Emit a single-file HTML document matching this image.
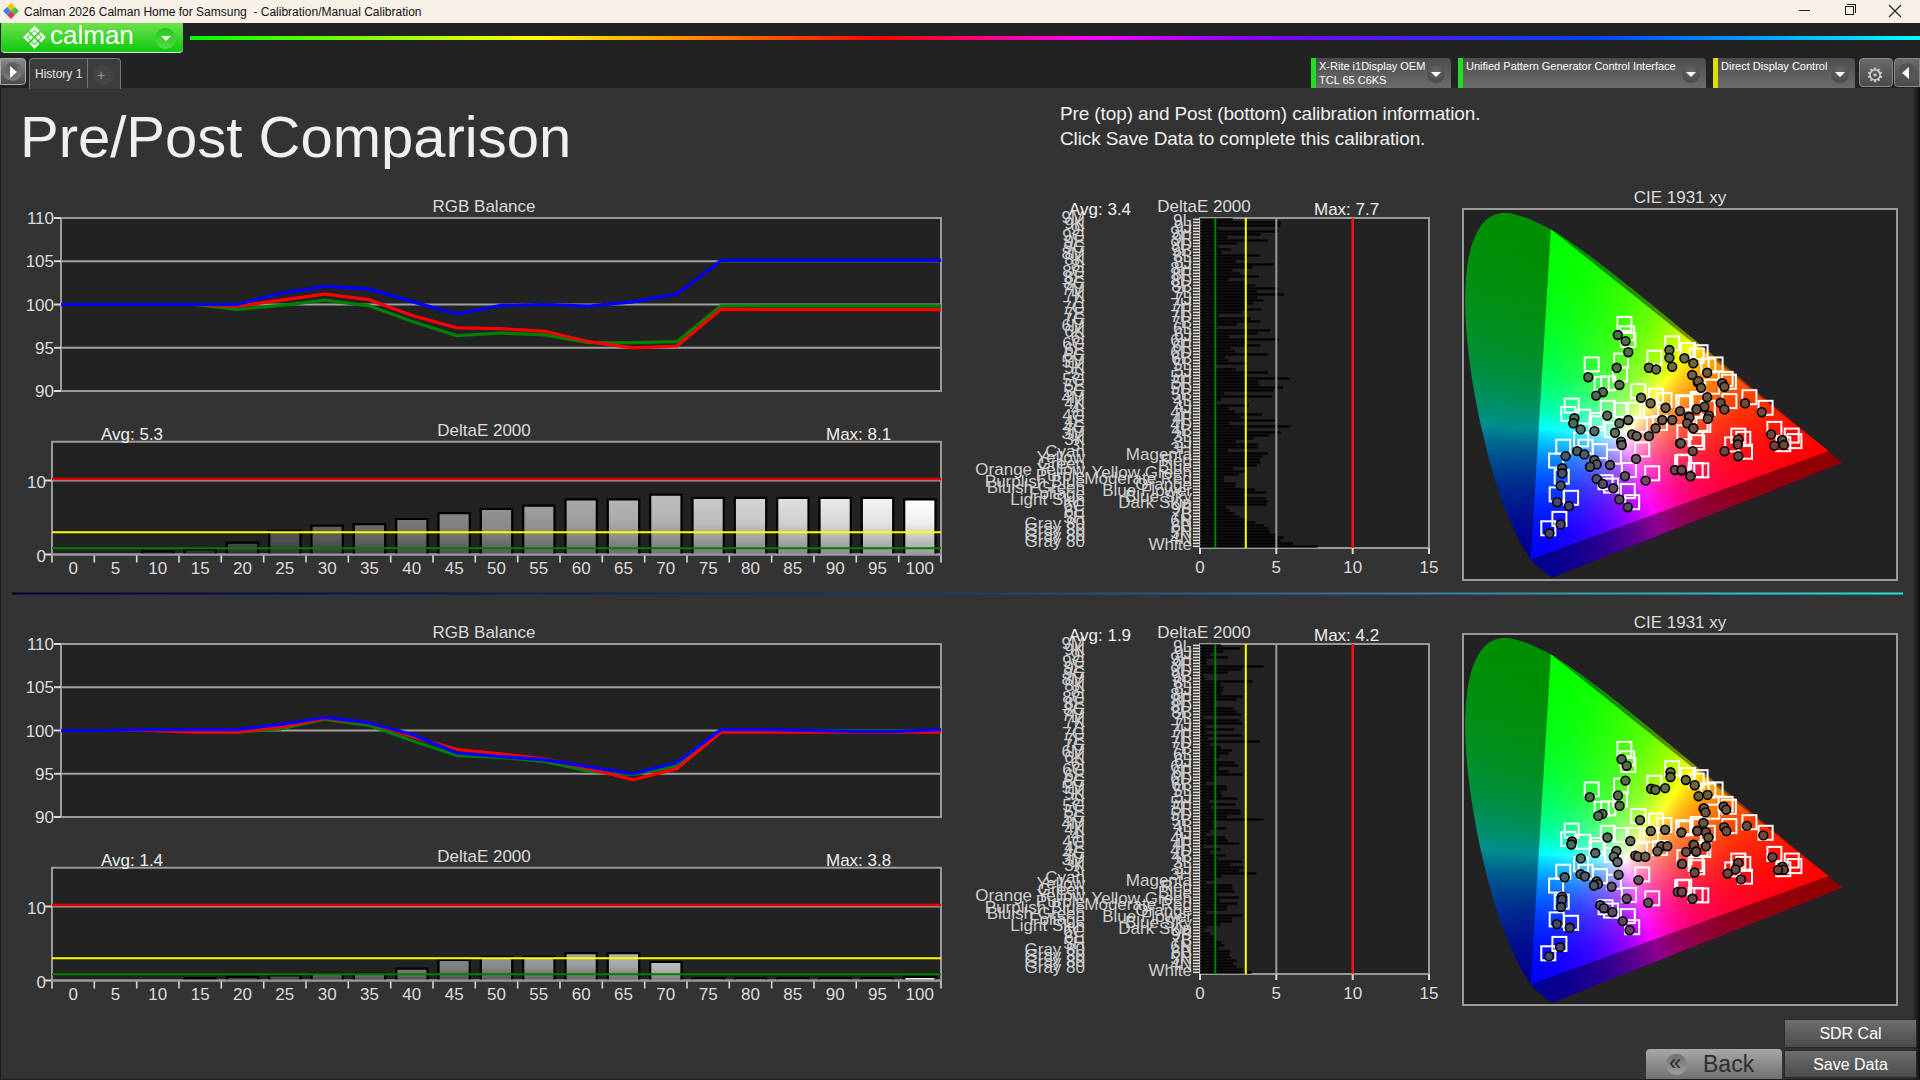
<!DOCTYPE html>
<html><head><meta charset="utf-8"><style>
*{margin:0;padding:0;box-sizing:border-box}
html,body{width:1920px;height:1080px;overflow:hidden;background:#333;font-family:"Liberation Sans", sans-serif;}
.abs{position:absolute}
svg text{font-family:"Liberation Sans", sans-serif;}
.ax{font-size:17px;fill:#dcdcdc}
.tt{font-size:17px;fill:#dcdcdc}
.tw{font-size:17px;fill:#f0f0f0}
.ml{font-size:17px;fill:#cfcfcf}
.cief i{position:absolute;left:0;width:380px;height:2px;display:block}
.o2{top:2px;background:linear-gradient(90deg,#008f01 32px,#008f00 54px)}
.o4{top:4px;background:linear-gradient(90deg,#008f02 27px,#008f00 62px)}
.o6{top:6px;background:linear-gradient(90deg,#008f02 23px,#008f00 68px)}
.o8{top:8px;background:linear-gradient(90deg,#008f03 21px,#008f00 73px)}
.o10{top:10px;background:linear-gradient(90deg,#008f03 19px,#008f00 77px)}
.o12{top:12px;background:linear-gradient(90deg,#008f04 17px,#008f00 81px)}
.o14{top:14px;background:linear-gradient(90deg,#008f04 15px,#008f00 86px)}
.o16{top:16px;background:linear-gradient(90deg,#008f04 14px,#008f00 90px)}
.o18{top:18px;background:linear-gradient(90deg,#008f05 13px,#008f00 93px)}
.o20{top:20px;background:linear-gradient(90deg,#008f05 12px,#008f00 96px)}
.o22{top:22px;background:linear-gradient(90deg,#008f06 11px,#018f00 100px)}
.o24{top:24px;background:linear-gradient(90deg,#008f06 10px,#018f00 103px)}
.o26{top:26px;background:linear-gradient(90deg,#008f06 9px,#028f00 106px)}
.o28{top:28px;background:linear-gradient(90deg,#008f07 8px,#038f00 109px)}
.o30{top:30px;background:linear-gradient(90deg,#008f07 7px,#038f00 112px)}
.o32{top:32px;background:linear-gradient(90deg,#008f08 6px,#048f00 115px)}
.o34{top:34px;background:linear-gradient(90deg,#008f08 6px,#058f00 117px)}
.o36{top:36px;background:linear-gradient(90deg,#008f09 5px,#058f00 120px)}
.o38{top:38px;background:linear-gradient(90deg,#008f09 5px,#008f01 89.5px,#068f00 123px)}
.o40{top:40px;background:linear-gradient(90deg,#008f09 4px,#008f01 89.5px,#078f00 126px)}
.o42{top:42px;background:linear-gradient(90deg,#008f0a 4px,#008f01 89.5px,#088f00 129px)}
.o44{top:44px;background:linear-gradient(90deg,#008f0a 3px,#008f02 89.5px,#098f00 131px)}
.o46{top:46px;background:linear-gradient(90deg,#008f0b 3px,#008f02 90.5px,#0a8f00 134px)}
.o48{top:48px;background:linear-gradient(90deg,#008f0b 2px,#008f02 90.5px,#0c8f00 137px)}
.o50{top:50px;background:linear-gradient(90deg,#008f0c 2px,#008f02 90.5px,#0c8f00 139px)}
.o52{top:52px;background:linear-gradient(90deg,#008f0c 2px,#008f02 91.5px,#0e8f00 142px)}
.o54{top:54px;background:linear-gradient(90deg,#008f0d 1px,#008f03 91.5px,#0f8f00 145px)}
.o56{top:56px;background:linear-gradient(90deg,#008f0d 1px,#008f03 92.5px,#108f00 147px)}
.o58{top:58px;background:linear-gradient(90deg,#008f0e 1px,#008f03 92.5px,#128f00 150px)}
.o60{top:60px;background:linear-gradient(90deg,#008f0e 1px,#018f03 93.5px,#138f00 152px)}
.o62{top:62px;background:linear-gradient(90deg,#008f0f 0px,#018f04 93.5px,#158f00 155px)}
.o64{top:64px;background:linear-gradient(90deg,#008f10 0px,#018f04 94.5px,#168f00 157px)}
.o66{top:66px;background:linear-gradient(90deg,#008f10 0px,#018f04 94.5px,#188f00 160px)}
.o68{top:68px;background:linear-gradient(90deg,#008f11 0px,#018f04 95.5px,#1a8f00 163px)}
.o70{top:70px;background:linear-gradient(90deg,#008f11 0px,#018f05 96.5px,#1c8f00 165px)}
.o72{top:72px;background:linear-gradient(90deg,#008f12 0px,#018f05 97.5px,#1e8f00 168px)}
.o74{top:74px;background:linear-gradient(90deg,#008f13 0px,#018f05 97.5px,#208f00 170px)}
.o76{top:76px;background:linear-gradient(90deg,#008f13 0px,#028f06 98.5px,#0d8f02 134.5px,#228f00 173px)}
.o78{top:78px;background:linear-gradient(90deg,#008f14 0px,#028f06 99.5px,#0e8f02 136.5px,#248f00 175px)}
.o80{top:80px;background:linear-gradient(90deg,#008f15 0px,#028f06 100.5px,#108f02 138.5px,#278f00 178px)}
.o82{top:82px;background:linear-gradient(90deg,#008f15 0px,#028f07 100.5px,#108f02 139.5px,#298f00 180px)}
.o84{top:84px;background:linear-gradient(90deg,#008f16 0px,#038f07 101.5px,#128f02 141.5px,#2b8f00 182px)}
.o86{top:86px;background:linear-gradient(90deg,#008f17 0px,#038f07 102.5px,#138f02 143.5px,#2e8f00 185px)}
.o88{top:88px;background:linear-gradient(90deg,#008f17 0px,#038f08 103.5px,#148f02 144.5px,#318f00 187px)}
.o90{top:90px;background:linear-gradient(90deg,#008f18 0px,#048f08 104.5px,#158f02 146.5px,#348f00 190px)}
.o92{top:92px;background:linear-gradient(90deg,#008f19 0px,#048f08 105.5px,#178f03 148.5px,#378f00 192px)}
.o94{top:94px;background:linear-gradient(90deg,#008f1a 0px,#048f09 106.5px,#188f03 150.5px,#3a8f00 195px)}
.o96{top:96px;background:linear-gradient(90deg,#008f1b 0px,#058f09 107.5px,#1a8f03 152.5px,#3d8f00 197px)}
.o98{top:98px;background:linear-gradient(90deg,#008f1b 0px,#058f09 108.5px,#1c8f03 154.5px,#418f00 200px)}
.o100{top:100px;background:linear-gradient(90deg,#008f1c 0px,#008f0e 84.5px,#058f0a 109.5px,#1d8f03 155.5px,#448f00 202px)}
.o102{top:102px;background:linear-gradient(90deg,#008f1d 0px,#008f0f 84.5px,#068f0a 111.5px,#1f8f03 158.5px,#498f00 205px)}
.o104{top:104px;background:linear-gradient(90deg,#008f1e 0px,#008f0f 84.5px,#078f0b 112.5px,#218f03 160.5px,#4c8f00 207px)}
.o106{top:106px;background:linear-gradient(90deg,#008f1f 0px,#008f10 84.5px,#078f0b 113.5px,#238f03 161.5px,#508f00 209px)}
.o108{top:108px;background:linear-gradient(90deg,#008f20 0px,#008f11 84.5px,#088f0c 114.5px,#268f04 164.5px,#558f00 212px)}
.o110{top:110px;background:linear-gradient(90deg,#008f21 0px,#008f12 84.5px,#088f0c 115.5px,#278f04 165.5px,#598f00 214px)}
.o112{top:112px;background:linear-gradient(90deg,#008f22 0px,#008f12 84.5px,#098f0c 117.5px,#2a8f04 168.5px,#5f8f00 217px)}
.o114{top:114px;background:linear-gradient(90deg,#008f23 0px,#008f13 84.5px,#0a8f0d 118.5px,#2c8f04 169.5px,#638f00 219px)}
.o116{top:116px;background:linear-gradient(90deg,#008f24 0px,#008f14 84.5px,#0b8f0d 120.5px,#2f8f04 172.5px,#698f00 222px)}
.o118{top:118px;background:linear-gradient(90deg,#008f25 0px,#008f15 84.5px,#0c8f0e 121.5px,#328f04 174.5px,#6e8f00 224px)}
.o120{top:120px;background:linear-gradient(90deg,#008f26 0px,#008f16 85.5px,#0d8f0e 122.5px,#348f05 175.5px,#738f00 226px)}
.o122{top:122px;background:linear-gradient(90deg,#008f27 0px,#008f17 85.5px,#0e8f0f 124.5px,#388f05 178.5px,#7b8f00 229px)}
.o124{top:124px;background:linear-gradient(90deg,#008f28 1px,#008f18 85.5px,#0f8f0f 125.5px,#3b8f05 180.5px,#808f00 231px)}
.o126{top:126px;background:linear-gradient(90deg,#008f2a 1px,#008f19 85.5px,#108f10 127.5px,#3f8f05 182.5px,#888f00 234px)}
.o128{top:128px;background:linear-gradient(90deg,#008f2b 1px,#008f1a 85.5px,#128f10 129.5px,#428f05 184.5px,#638f01 209.5px,#8f8f00 236px)}
.o130{top:130px;background:linear-gradient(90deg,#008f2c 1px,#008f1b 85.5px,#118f12 127.5px,#3f8f07 180.5px,#628f02 207.5px,#8e8f00 233.5px,#8f8900 238px)}
.o132{top:132px;background:linear-gradient(90deg,#008f2d 1px,#008f1c 84.5px,#108f13 125.5px,#258f0d 154.5px,#418f07 181.5px,#648f02 207.5px,#8f8f00 232.5px,#8f8100 241px)}
.o134{top:134px;background:linear-gradient(90deg,#008f2f 1px,#008f1d 84.5px,#108f14 124.5px,#258f0e 153.5px,#418f08 180.5px,#648f03 206.5px,#8e8f00 230.5px,#8f7b00 243px)}
.o136{top:136px;background:linear-gradient(90deg,#008f30 2px,#008f1e 84.5px,#0f8f16 122.5px,#248f0f 151.5px,#408f09 178.5px,#638f04 204.5px,#8f8f00 229.5px,#8f7400 246px)}
.o138{top:138px;background:linear-gradient(90deg,#008f31 2px,#008f20 83.5px,#0e8f17 120.5px,#238f11 149.5px,#3f8f0a 176.5px,#628f05 202.5px,#8e8f01 227.5px,#8f6e00 248px)}
.o140{top:140px;background:linear-gradient(90deg,#008f33 2px,#008f21 83.5px,#0e8f19 119.5px,#238f12 148.5px,#3f8f0b 175.5px,#628f06 201.5px,#8f8f01 226.5px,#8f6800 251px)}
.o142{top:142px;background:linear-gradient(90deg,#008f34 2px,#008f22 83.5px,#0d8f1a 117.5px,#228f13 146.5px,#3d8f0d 173.5px,#618f07 199.5px,#8e8f02 224.5px,#8f6300 253px)}
.o144{top:144px;background:linear-gradient(90deg,#008f35 3px,#008f24 83.5px,#0c8f1c 116.5px,#218f15 145.5px,#3d8f0e 172.5px,#628f08 198.5px,#8f8f03 223.5px,#8f5e00 255px)}
.o146{top:146px;background:linear-gradient(90deg,#008f37 3px,#008f25 82.5px,#0c8f1d 115.5px,#218f16 144.5px,#3e8f0f 171.5px,#628f09 197.5px,#8e8f04 221.5px,#8f6f00 240.5px,#8f5900 258px)}
.o148{top:148px;background:linear-gradient(90deg,#008f38 3px,#008f27 82.5px,#0b8f1f 113.5px,#208f18 142.5px,#3e8f11 170.5px,#638f0a 196.5px,#8f8f04 220.5px,#8f6e01 239.5px,#8f5500 260px)}
.o150{top:150px;background:linear-gradient(90deg,#008f3a 3px,#008f28 83.5px,#108f1f 121.5px,#258f18 147.5px,#418f11 172.5px,#658f0b 196.5px,#8e8f06 218.5px,#8f6a01 240.5px,#8f5000 263px)}
.o152{top:152px;background:linear-gradient(90deg,#008f3c 4px,#008f2a 83.5px,#118f20 121.5px,#268f19 147.5px,#438f12 172.5px,#658f0c 195.5px,#8f8f07 217.5px,#8f6901 239.5px,#8f4c00 265px)}
.o154{top:154px;background:linear-gradient(90deg,#008f3d 4px,#008f2b 83.5px,#108f22 120.5px,#268f1b 146.5px,#418f14 170.5px,#648f0e 193.5px,#8e8f08 215.5px,#8f6502 240.5px,#8f4800 267px)}
.o156{top:156px;background:linear-gradient(90deg,#008f3f 4px,#008f2d 83.5px,#118f23 120.5px,#278f1c 146.5px,#438f15 170.5px,#668f0f 193.5px,#8f8f09 214.5px,#8f6402 239.5px,#8f4400 270px)}
.o158{top:158px;background:linear-gradient(90deg,#008f41 4px,#008f2f 82.5px,#108f25 119.5px,#258f1e 144.5px,#428f17 168.5px,#658f11 191.5px,#8e8f0b 212.5px,#8f6002 240.5px,#8f4000 272px)}
.o160{top:160px;background:linear-gradient(90deg,#008f43 5px,#008f31 82.5px,#118f27 119.5px,#428f19 167.5px,#658f12 190.5px,#8f8f0c 211.5px,#8f5f03 239.5px,#8f3c00 275px)}
.o162{top:162px;background:linear-gradient(90deg,#008f45 5px,#008f32 82.5px,#108f29 118.5px,#258f22 142.5px,#428f1b 166.5px,#648f14 188.5px,#8e8f0e 209.5px,#8f5d03 239.5px,#8f3900 277px)}
.o164{top:164px;background:linear-gradient(90deg,#008f47 5px,#008f34 82.5px,#108f2b 117.5px,#258f24 141.5px,#428f1d 165.5px,#658f16 187.5px,#8f8f0f 208.5px,#8f5a04 239.5px,#8f3600 279px)}
.o166{top:166px;background:linear-gradient(90deg,#008f49 5px,#008f36 82.5px,#108f2d 116.5px,#258f26 140.5px,#408f1f 163.5px,#638f18 185.5px,#8e8f11 206.5px,#8f5804 239.5px,#8f3300 282px)}
.o168{top:168px;background:linear-gradient(90deg,#008f4a 6px,#008f38 82.5px,#108f2f 116.5px,#258f28 140.5px,#428f21 163.5px,#648f1a 184.5px,#8f8f13 205.5px,#8f6f0b 221.5px,#8f5605 239.5px,#8f3000 284px)}
.o170{top:170px;background:linear-gradient(90deg,#008f4d 6px,#008f3b 81.5px,#108f31 115.5px,#248f2a 138.5px,#418f23 161.5px,#648f1c 183.5px,#8e8f15 203.5px,#8f6d0b 221.5px,#8f5405 239.5px,#8f2d00 287px)}
.o172{top:172px;background:linear-gradient(90deg,#008f4f 6px,#008f3d 81.5px,#108f33 115.5px,#258f2c 138.5px,#428f25 161.5px,#658f1e 182.5px,#8f8f17 202.5px,#8f6d0d 219.5px,#8f5106 239.5px,#8f2a00 289px)}
.o174{top:174px;background:linear-gradient(90deg,#008f51 7px,#008f3f 81.5px,#108f36 114.5px,#258f2f 137.5px,#418f28 159.5px,#648f20 180.5px,#8e8f19 200.5px,#8f6c0e 218.5px,#8f5007 238.5px,#8f3a02 262.5px,#8f2800 291px)}
.o176{top:176px;background:linear-gradient(90deg,#008f53 7px,#008f41 81.5px,#108f38 113.5px,#258f31 136.5px,#418f2a 158.5px,#648f23 179.5px,#8f8f1c 199.5px,#8f6b10 217.5px,#8f4e07 238.5px,#8f3702 264.5px,#8f2500 294px)}
.o178{top:178px;background:linear-gradient(90deg,#008f56 7px,#008f44 81.5px,#0f8f3b 112.5px,#248f34 135.5px,#418f2d 157.5px,#658f25 178.5px,#8e8f1e 197.5px,#8f6a11 216.5px,#8f4c08 238.5px,#8f3502 264.5px,#8f2300 296px)}
.o180{top:180px;background:linear-gradient(90deg,#008f58 8px,#008f46 80.5px,#108f3d 112.5px,#248f37 134.5px,#418f2f 156.5px,#638f28 176.5px,#8f8f21 196.5px,#8f6813 215.5px,#8f4a08 238.5px,#8f3202 266.5px,#8f2100 299px)}
.o182{top:182px;background:linear-gradient(90deg,#008f5b 8px,#008f49 80.5px,#0f8f40 111.5px,#248f39 133.5px,#418f32 155.5px,#648f2b 175.5px,#8e8f24 194.5px,#8f6714 214.5px,#8f4909 237.5px,#8f3002 266.5px,#8f1f00 301px)}
.o184{top:184px;background:linear-gradient(90deg,#008f5d 8px,#008f4c 80.5px,#108f43 111.5px,#258f3c 133.5px,#418f35 154.5px,#648f2e 174.5px,#8f8e26 193.5px,#8f6616 213.5px,#8f470a 237.5px,#8f2e03 267.5px,#8f1d00 303px)}
.o186{top:186px;background:linear-gradient(90deg,#008f60 9px,#008f4f 80.5px,#0f8f46 110.5px,#248f3f 132.5px,#418f38 153.5px,#658f31 173.5px,#8e8f2a 191.5px,#8f6517 212.5px,#8f450b 237.5px,#8f2c03 268.5px,#8f1a00 306px)}
.o188{top:188px;background:linear-gradient(90deg,#008f63 9px,#008f51 80.5px,#108f49 110.5px,#248f42 131.5px,#418f3b 152.5px,#638f34 171.5px,#8f8e2c 190.5px,#8f6319 211.5px,#8f430c 236.5px,#8f2b03 268.5px,#8f1900 308px)}
.o190{top:190px;background:linear-gradient(90deg,#008f66 9px,#008f54 80.5px,#0f8f4c 109.5px,#248f45 130.5px,#418f3e 151.5px,#648f37 170.5px,#8e8f30 188.5px,#8f621b 210.5px,#8f410c 236.5px,#8f2803 269.5px,#8f1700 311px)}
.o192{top:192px;background:linear-gradient(90deg,#008f68 10px,#008f58 79.5px,#0f8f50 108.5px,#248f49 129.5px,#408f42 149.5px,#628f3b 168.5px,#8d8f34 186.5px,#8f5f1c 210.5px,#8f3f0d 236.5px,#8f2604 270.5px,#8f1500 313px)}
.o194{top:194px;background:linear-gradient(90deg,#008f6c 10px,#008f5b 79.5px,#0f8f53 108.5px,#258f4c 129.5px,#418f45 149.5px,#658f3e 168.5px,#8e8f37 185.5px,#8f601e 208.5px,#8f3e0e 235.5px,#8f2504 270.5px,#8f1400 315px)}
.o196{top:196px;background:linear-gradient(90deg,#008f6f 11px,#008f5e 79.5px,#0f8f56 107.5px,#238f50 127.5px,#408f49 147.5px,#648f42 166.5px,#8d8f3b 183.5px,#8f5e20 207.5px,#8f3c0f 235.5px,#8f2304 271.5px,#8f1200 318px)}
.o198{top:198px;background:linear-gradient(90deg,#008f72 11px,#008f62 79.5px,#0f8f5a 107.5px,#248f54 127.5px,#418f4d 147.5px,#648f46 165.5px,#8e8f3f 182.5px,#8f5f23 205.5px,#8f3b10 234.5px,#8f2204 271.5px,#8f1100 320px)}
.o200{top:200px;background:linear-gradient(90deg,#008f75 11px,#008f66 79.5px,#0f8f5e 106.5px,#248f58 126.5px,#408f51 145.5px,#638f4b 163.5px,#8d8f44 180.5px,#8f5c25 205.5px,#8f3911 234.5px,#8f2005 272.5px,#8f0f00 323px)}
.o202{top:202px;background:linear-gradient(90deg,#008f79 12px,#008f69 79.5px,#0e8f62 105.5px,#238f5c 125.5px,#408f56 144.5px,#638f4f 162.5px,#8e8f48 179.5px,#8f5c28 203.5px,#8f3812 233.5px,#8f1e05 273.5px,#8f0e00 325px)}
.o204{top:204px;background:linear-gradient(90deg,#008f7d 12px,#008f6e 78.5px,#0e8f66 104.5px,#228f61 123.5px,#3e8f5a 142.5px,#628f54 160.5px,#8d8f4d 177.5px,#8f5b2a 202.5px,#8f3613 233.5px,#8f1d05 274.5px,#8f0c00 328px)}
.o206{top:206px;background:linear-gradient(90deg,#008f80 13px,#008f72 78.5px,#0e8f6b 104.5px,#238f65 123.5px,#3e8f5f 141.5px,#608f59 158.5px,#8f8d50 177.5px,#8f592c 201.5px,#8f3514 232.5px,#8f1b06 274.5px,#8f0b00 330px)}
.o208{top:208px;background:linear-gradient(90deg,#008f84 13px,#008f76 78.5px,#0f8f6f 104.5px,#248f69 123.5px,#408f64 141.5px,#638f5d 158.5px,#8f8e56 175.5px,#8f5a30 199.5px,#8f3416 231.5px,#8f1a06 274.5px,#8f0a00 332px)}
.o210{top:210px;background:linear-gradient(90deg,#008f88 13px,#008f7a 78.5px,#0e8f74 103.5px,#228f6f 121.5px,#3e8f69 139.5px,#5f8f63 155.5px,#8f8d5b 174.5px,#8f6f43 186.5px,#8f5731 199.5px,#8f3217 231.5px,#8f1906 275.5px,#8f0900 335px)}
.o212{top:212px;background:linear-gradient(90deg,#008f8c 14px,#008f7f 78.5px,#0f8f79 103.5px,#238f74 121.5px,#408f6e 139.5px,#628f68 155.5px,#8f8e62 172.5px,#8f6f49 184.5px,#8f5735 197.5px,#8f3118 230.5px,#8f1707 275.5px,#8f0800 337px)}
.o214{top:214px;background:linear-gradient(90deg,#008d8f 14px,#008f84 78.5px,#0e8f7e 102.5px,#238f79 120.5px,#3e8f74 137.5px,#608f6f 153.5px,#8f8d66 171.5px,#8f6e4c 183.5px,#8f5538 196.5px,#8f2f19 230.5px,#8f1607 276.5px,#8f0700 340px)}
.o216{top:216px;background:linear-gradient(90deg,#00898f 15px,#008f89 78.5px,#0e8f84 101.5px,#238f7f 119.5px,#408f79 137.5px,#638f74 153.5px,#8f8e6e 169.5px,#8f6e52 181.5px,#8f543b 195.5px,#8f2e1a 229.5px,#8f1507 276.5px,#8f0600 342px)}
.o218{top:218px;background:linear-gradient(90deg,#00848f 15px,#008f8f 77.5px,#0e8f89 101.5px,#228f85 118.5px,#3e8f80 135.5px,#5f8f7b 150.5px,#8f8c73 168.5px,#8f6d56 180.5px,#8f543f 193.5px,#8f2d1c 228.5px,#8f1408 276.5px,#8f0500 344px)}
.o220{top:220px;background:linear-gradient(90deg,#00808f 16px,#008a8f 77.5px,#0d8e8f 99.5px,#228f8b 117.5px,#3e8f86 134.5px,#628f81 150.5px,#8f8e7b 166.5px,#8f6d5c 178.5px,#8f5342 192.5px,#8f2c1e 227.5px,#8f1208 278.5px,#8f0500 347px)}
.o222{top:222px;background:linear-gradient(90deg,#007c8f 16px,#00858f 77.5px,#0e898f 100.5px,#218c8f 116.5px,#3e8f8d 133.5px,#608f89 148.5px,#8f8c81 165.5px,#8f6c60 177.5px,#8f5145 191.5px,#8f2a1f 227.5px,#8f1108 278.5px,#8f0400 349px)}
.o224{top:224px;background:linear-gradient(90deg,#00788f 17px,#00808f 77.5px,#0f838f 101.5px,#24878f 118.5px,#3e8a8f 133.5px,#5d8d8f 146.5px,#8f8e8a 163.5px,#8f6d67 175.5px,#8f514a 189.5px,#8f3b32 206.5px,#8f2920 226.5px,#8f1008 279.5px,#8f0300 352px)}
.o226{top:226px;background:linear-gradient(90deg,#00758f 17px,#007b8f 77.5px,#107e8f 102.5px,#25818f 119.5px,#3f848f 134.5px,#61878f 148.5px,#8f898d 163.5px,#8f6969 175.5px,#8f4e4c 189.5px,#8f3834 206.5px,#8f2721 226.5px,#8f0f09 279.5px,#8f0300 354px)}
.o228{top:228px;background:linear-gradient(90deg,#00718f 17px,#00768f 77.5px,#0f798f 102.5px,#247b8f 119.5px,#3e7e8f 134.5px,#5f808f 148.5px,#8f818c 164.5px,#8f6369 176.5px,#8f484a 191.5px,#8f3433 208.5px,#8f2421 228.5px,#8f0d09 281.5px,#8f0200 356px)}
.o230{top:230px;background:linear-gradient(90deg,#006d8f 18px,#00718f 77.5px,#10748f 103.5px,#25768f 120.5px,#42788f 136.5px,#637a8f 150.5px,#8f7c8e 164.5px,#8f5f6b 176.5px,#8f454c 191.5px,#8f3234 208.5px,#8f2222 228.5px,#8f0c09 282.5px,#8f0100 359px)}
.o232{top:232px;background:linear-gradient(90deg,#006a8f 18px,#006d8f 77.5px,#106f8f 103.5px,#25718f 120.5px,#41728f 136.5px,#62748f 150.5px,#8f758d 165.5px,#8f596a 177.5px,#8f414c 192.5px,#8f2e34 209.5px,#8f1f21 230.5px,#8f0a09 285.5px,#8f0100 361px)}
.o234{top:234px;background:linear-gradient(90deg,#00668f 19px,#00698f 77.5px,#106a8f 103.5px,#246b8f 120.5px,#406d8f 136.5px,#606e8f 150.5px,#8f6e8c 166.5px,#8f5267 179.5px,#8f3c4a 194.5px,#8f2b33 211.5px,#8f1c21 232.5px,#8f0909 287.5px,#8f0100 364px)}
.o236{top:236px;background:linear-gradient(90deg,#00638f 19px,#00658f 77.5px,#11668f 104.5px,#25678f 121.5px,#41678f 137.5px,#64688f 152.5px,#8f698f 166.5px,#8f4f69 179.5px,#8f394c 194.5px,#8f2835 211.5px,#8f1b22 232.5px,#8f0809 288.5px,#8f0000 366px)}
.o238{top:238px;background:linear-gradient(90deg,#00608f 20px,#00618f 77.5px,#11618f 104.5px,#26628f 122.5px,#42628f 138.5px,#65638f 153.5px,#8f638e 167.5px,#8f4a69 180.5px,#8f354c 195.5px,#8f2534 213.5px,#8f1821 234.5px,#8f0709 290.5px,#8f0000 368px)}
.o240{top:240px;background:linear-gradient(90deg,#005c8f 20px,#005d8f 77.5px,#115d8f 105.5px,#265d8f 122.5px,#415d8f 138.5px,#615d8f 152.5px,#8f5d8d 168.5px,#8f4569 181.5px,#8f324b 196.5px,#8f2234 214.5px,#8f1621 235.5px,#8f0609 292.5px,#8f0000 371px)}
.o242{top:242px;background:linear-gradient(90deg,#00598f 21px,#00598f 77.5px,#11598f 105.5px,#25598f 122.5px,#40598f 138.5px,#5f588f 152.5px,#8f578c 169.5px,#8f4068 182.5px,#8f2e4b 197.5px,#8f2034 215.5px,#8f1421 237.5px,#8f0509 294.5px,#8f0000 373px)}
.o244{top:244px;background:linear-gradient(90deg,#00568f 21px,#00558f 77.5px,#11558f 105.5px,#26548f 123.5px,#41548f 139.5px,#63538f 154.5px,#8f538e 169.5px,#8f3d6a 182.5px,#8f2b4b 198.5px,#8f1d34 216.5px,#8f1221 238.5px,#8f0409 295.5px,#8f0000 376px)}
.o246{top:246px;background:linear-gradient(90deg,#00538f 22px,#00528f 77.5px,#12518f 106.5px,#27508f 124.5px,#424f8f 140.5px,#644f8f 155.5px,#8f4d8e 170.5px,#8f396a 183.5px,#8f284b 199.5px,#8f1b34 217.5px,#8f1121 239.5px,#8f0409 297.5px,#8f0000 378px)}
.o248{top:248px;background:linear-gradient(90deg,#00508f 22px,#004e8f 77.5px,#124d8f 106.5px,#274c8f 124.5px,#424b8f 140.5px,#634a8f 155.5px,#8f488d 171.5px,#8f3569 184.5px,#8f254b 200.5px,#8f1934 218.5px,#8f0f22 240.5px,#8f0309 298.5px,#8f0000 380px)}
.o250{top:250px;background:linear-gradient(90deg,#004d8f 23px,#004b8f 77.5px,#13498f 107.5px,#28488f 125.5px,#43478f 141.5px,#66468f 157.5px,#8f448f 171.5px,#8f326b 184.5px,#8f234d 200.5px,#8f1736 218.5px,#8f0e23 240.5px,#8f030a 298.5px,#8f0000 380px)}
.o252{top:252px;background:linear-gradient(90deg,#004a8f 24px,#00488f 77.5px,#13468f 108.5px,#29448f 126.5px,#44438f 142.5px,#65418f 157.5px,#8f3f8e 172.5px,#8f2e6b 185.5px,#8f204d 201.5px,#8f1536 219.5px,#8f0d23 241.5px,#8f020a 299.5px,#8f0000 380px)}
.o254{top:254px;background:linear-gradient(90deg,#00488f 24px,#00458f 77.5px,#13428f 108.5px,#433f8f 142.5px,#633d8f 157.5px,#8f3b8d 173.5px,#8f2b6b 186.5px,#8f1d4d 202.5px,#8f1336 220.5px,#8f0b23 242.5px,#8f020a 299.5px,#8f0000 380px)}
.o256{top:256px;background:linear-gradient(90deg,#00458f 25px,#00428f 77.5px,#133f8f 108.5px,#423b8f 142.5px,#62398f 157.5px,#8f368c 174.5px,#8f276a 187.5px,#8f1b4d 203.5px,#8f1136 221.5px,#8f0a23 243.5px,#8f010b 300.5px,#8f0000 380px)}
.o258{top:258px;background:linear-gradient(90deg,#00428f 25px,#013f8f 78.5px,#143c8f 109.5px,#293a8f 127.5px,#45388f 144.5px,#65358f 159.5px,#8f338f 174.5px,#8f256c 187.5px,#8f194e 203.5px,#8f1037 221.5px,#8f0925 242.5px,#8f010c 297.5px,#8f0000 375px)}
.o260{top:260px;background:linear-gradient(90deg,#00408f 26px,#003c8f 77.5px,#14398f 109.5px,#44348f 144.5px,#64328f 159.5px,#8f2f8e 175.5px,#8f226c 188.5px,#8f1750 203.5px,#8f0f38 221.5px,#8f0826 242.5px,#8f010d 295.5px,#8f0001 370px)}
.o262{top:262px;background:linear-gradient(90deg,#003d8f 26px,#01398f 78.5px,#15358f 110.5px,#45318f 145.5px,#8f2b8d 176.5px,#8f1f6b 189.5px,#8f1550 204.5px,#8f0727 241.5px,#8f010e 293.5px,#8f0001 365px)}
.o264{top:264px;background:linear-gradient(90deg,#003b8f 27px,#01368f 78.5px,#14338f 110.5px,#442e8f 145.5px,#662b8f 161.5px,#8f288f 176.5px,#8f1d6d 189.5px,#8f1453 203.5px,#8f0729 240.5px,#8f000f 290.5px,#8f0002 360px)}
.o266{top:266px;background:linear-gradient(90deg,#00388f 28px,#01348f 78.5px,#15308f 111.5px,#452a8f 146.5px,#67288f 162.5px,#8f258e 177.5px,#8f1a6d 190.5px,#8f1253 204.5px,#8f062a 240.5px,#8f0011 288.5px,#8f0003 355px)}
.o268{top:268px;background:linear-gradient(90deg,#00368f 28px,#01318f 78.5px,#152d8f 111.5px,#44288f 146.5px,#63258f 161.5px,#8f218d 178.5px,#8f186e 190.5px,#8f1054 204.5px,#8f052c 239.5px,#8f0012 286.5px,#8f0004 350px)}
.o270{top:270px;background:linear-gradient(90deg,#00348f 29px,#012f8f 78.5px,#162a8f 112.5px,#45258f 147.5px,#8f1e8c 179.5px,#8f156e 191.5px,#8f0e54 205.5px,#8f042d 239.5px,#8f0013 284.5px,#8f0005 345px)}
.o272{top:272px;background:linear-gradient(90deg,#00328f 29px,#012c8f 78.5px,#16288f 112.5px,#46228f 148.5px,#671f8f 164.5px,#8f1b8f 179.5px,#8f1370 191.5px,#8f0d57 204.5px,#8f042f 237.5px,#8f0015 281.5px,#8f0006 340px)}
.o274{top:274px;background:linear-gradient(90deg,#00308f 30px,#012a8f 78.5px,#16258f 113.5px,#451f8f 148.5px,#661c8f 164.5px,#8f188e 180.5px,#8f0b57 205.5px,#8f0330 237.5px,#8f0017 279.5px,#8f0007 335px)}
.o276{top:276px;background:linear-gradient(90deg,#002d8f 31px,#01288f 78.5px,#16238f 113.5px,#461d8f 149.5px,#8f168d 181.5px,#8f0a58 205.5px,#8f0332 236.5px,#8f0018 276.5px,#8f0008 330px)}
.o278{top:278px;background:linear-gradient(90deg,#002b8f 31px,#01268f 79.5px,#17208f 114.5px,#471a8f 150.5px,#68178f 166.5px,#8f148f 181.5px,#8f095a 205.5px,#8f0234 235.5px,#8f001a 274.5px,#8f000a 325px)}
.o280{top:280px;background:linear-gradient(90deg,#00298f 32px,#01248f 79.5px,#171e8f 114.5px,#46188f 150.5px,#66158f 166.5px,#8d118f 181.5px,#8f075a 206.5px,#8f0236 234.5px,#8f001c 271.5px,#8f000b 320px)}
.o282{top:282px;background:linear-gradient(90deg,#00278f 33px,#01228f 79.5px,#181c8f 115.5px,#47168f 151.5px,#67128f 167.5px,#8d0f8f 182.5px,#8f065d 205.5px,#8f0138 233.5px,#8f001e 269.5px,#8f000d 315px)}
.o284{top:284px;background:linear-gradient(90deg,#00268f 33px,#01208f 79.5px,#181a8f 116.5px,#48138f 152.5px,#68108f 168.5px,#8e0d8f 183.5px,#8f055e 205.5px,#8f013a 232.5px,#8f0020 266.5px,#8f000f 310px)}
.o286{top:286px;background:linear-gradient(90deg,#00248f 34px,#021e8f 80.5px,#18188f 116.5px,#47128f 152.5px,#670e8f 168.5px,#8f0b8f 184.5px,#8f0460 205.5px,#8f013d 231.5px,#8f0022 264.5px,#8f0011 305px)}
.o288{top:288px;background:linear-gradient(90deg,#00228f 35px,#021c8f 80.5px,#19168f 117.5px,#48108f 153.5px,#8d098f 184.5px,#8f0360 206.5px,#8f003f 230.5px,#8f0025 261.5px,#8f0013 299px)}
.o290{top:290px;background:linear-gradient(90deg,#00208f 35px,#021a8f 80.5px,#19148f 117.5px,#470e8f 153.5px,#690b8f 170.5px,#8e088f 185.5px,#8f0363 205.5px,#8f0041 229.5px,#8f0028 258.5px,#8f0016 294px)}
.o292{top:292px;background:linear-gradient(90deg,#001e8f 36px,#02188f 80.5px,#19128f 118.5px,#480c8f 154.5px,#6a098f 171.5px,#8f068f 186.5px,#8f0265 205.5px,#8f0043 228.5px,#8f002a 256.5px,#8f0018 289px)}
.o294{top:294px;background:linear-gradient(90deg,#001d8f 37px,#02178f 81.5px,#19118f 118.5px,#480b8f 154.5px,#68078f 171.5px,#8d058f 186.5px,#8f0164 206.5px,#8f0046 227.5px,#8f002d 253.5px,#8f001b 284px)}
.o296{top:296px;background:linear-gradient(90deg,#001b8f 38px,#02158f 81.5px,#1a0f8f 119.5px,#48098f 155.5px,#8d038f 187.5px,#8f0066 206.5px,#8f0048 226.5px,#8f0030 250.5px,#8f001e 279px)}
.o298{top:298px;background:linear-gradient(90deg,#00198f 38px,#02148f 81.5px,#1b0e8f 120.5px,#49078f 156.5px,#8e028f 188.5px,#8f0069 205.5px,#8f004c 224.5px,#8f0034 247.5px,#8f0022 274px)}
.o300{top:300px;background:linear-gradient(90deg,#00188f 39px,#02128f 82.5px,#1b0c8f 121.5px,#4a068f 157.5px,#8f018f 189.5px,#8f006b 205.5px,#8f004e 223.5px,#8f0037 244.5px,#8f0025 269px)}
.o302{top:302px;background:linear-gradient(90deg,#00168f 40px,#02118f 82.5px,#1b0b8f 121.5px,#49058f 157.5px,#8d018f 189.5px,#8f006a 206.5px,#8f0051 222.5px,#8f0029 264px)}
.o304{top:304px;background:linear-gradient(90deg,#00158f 41px,#030f8f 83.5px,#1c098f 122.5px,#4a048f 158.5px,#8e008f 190.5px,#8f006e 205.5px,#8f0055 220.5px,#8f002e 259px)}
.o306{top:306px;background:linear-gradient(90deg,#00138f 42px,#030e8f 83.5px,#1d088f 123.5px,#4b038f 159.5px,#8f008f 191.5px,#8f0058 219.5px,#8f0033 254px)}
.o308{top:308px;background:linear-gradient(90deg,#00128f 42px,#030d8f 83.5px,#1c078f 123.5px,#4a028f 159.5px,#8d008f 191.5px,#8f005b 218.5px,#8f0038 249px)}
.o310{top:310px;background:linear-gradient(90deg,#00118f 43px,#030b8f 84.5px,#1d068f 124.5px,#4b018f 160.5px,#8d008f 192.5px,#8f005f 216.5px,#8f003d 244px)}
.o312{top:312px;background:linear-gradient(90deg,#00108f 44px,#030a8f 85.5px,#1e058f 125.5px,#4c018f 161.5px,#8e008f 193.5px,#8f0064 214.5px,#8f0044 239px)}
.o314{top:314px;background:linear-gradient(90deg,#000e8f 45px,#03098f 85.5px,#1f048f 126.5px,#4d008f 162.5px,#8f008f 194.5px,#8f0067 213.5px,#8f004a 234px)}
.o316{top:316px;background:linear-gradient(90deg,#000d8f 46px,#04088f 86.5px,#1e038f 126.5px,#4c008f 162.5px,#8d008f 194.5px,#8f006a 212.5px,#8f0052 229px)}
.o318{top:318px;background:linear-gradient(90deg,#000c8f 47px,#04078f 86.5px,#1f028f 127.5px,#4d008f 163.5px,#8e008f 195.5px,#8f005a 224px)}
.o320{top:320px;background:linear-gradient(90deg,#000b8f 48px,#04068f 87.5px,#20018f 128.5px,#4e008f 164.5px,#8e008f 196.5px,#8f0063 219px)}
.o322{top:322px;background:linear-gradient(90deg,#000a8f 49px,#03058f 85.5px,#1a018f 122.5px,#4a008f 162.5px,#8d008f 196.5px,#8f006d 214px)}
.o324{top:324px;background:linear-gradient(90deg,#00098f 50px,#04048f 86.5px,#1c018f 125.5px,#4a008f 163.5px,#8d008f 197.5px,#8f007a 208px)}
.o326{top:326px;background:linear-gradient(90deg,#00088f 51px,#05038f 89.5px,#20008f 129.5px,#47008f 161.5px,#67008f 180.5px,#8e008f 198.5px,#8f0086 203px)}
.o328{top:328px;background:linear-gradient(90deg,#00078f 51px,#05038f 89.5px,#20008f 129.5px,#4c008f 165.5px,#8a008f 198px)}
.o330{top:330px;background:linear-gradient(90deg,#00068f 52px,#05028f 88.5px,#1d008f 126.5px,#44008f 160.5px,#7d008f 193px)}
.o332{top:332px;background:linear-gradient(90deg,#00058f 53px,#04028f 86.5px,#1a008f 123.5px,#3e008f 156.5px,#71008f 188px)}
.o334{top:334px;background:linear-gradient(90deg,#00048f 55px,#04018f 86.5px,#18008f 121.5px,#38008f 152.5px,#66008f 183px)}
.o336{top:336px;background:linear-gradient(90deg,#00038f 56px,#04018f 85.5px,#16008f 118.5px,#32008f 148.5px,#5c008f 178px)}
.o338{top:338px;background:linear-gradient(90deg,#00038f 57px,#03018f 84.5px,#14008f 116.5px,#2f008f 145.5px,#53008f 173px)}
.o340{top:340px;background:linear-gradient(90deg,#00028f 58px,#03008f 83.5px,#12008f 113.5px,#29008f 140.5px,#4a008f 168px)}
.o342{top:342px;background:linear-gradient(90deg,#00028f 59px,#03008f 83.5px,#10008f 111.5px,#25008f 137.5px,#43008f 163px)}
.o344{top:344px;background:linear-gradient(90deg,#00018f 60px,#03008f 82.5px,#0e008f 108.5px,#3b008f 158px)}
.o346{top:346px;background:linear-gradient(90deg,#00018f 62px,#0d008f 106.5px,#35008f 153px)}
.o348{top:348px;background:linear-gradient(90deg,#00008f 63px,#0c008f 104.5px,#2f008f 148px)}
.o350{top:350px;background:linear-gradient(90deg,#00008f 65px,#0b008f 102.5px,#29008f 143px)}
.o352{top:352px;background:linear-gradient(90deg,#00008f 66px,#0a008f 100.5px,#24008f 138px)}
.o354{top:354px;background:linear-gradient(90deg,#00008f 68px,#09008f 99.5px,#1f008f 133px)}
.o356{top:356px;background:linear-gradient(90deg,#00008f 70px,#08008f 97.5px,#1b008f 128px)}
.o358{top:358px;background:linear-gradient(90deg,#00008f 72px,#17008f 123px)}
.o360{top:360px;background:linear-gradient(90deg,#01008f 74px,#13008f 117px)}
.o362{top:362px;background:linear-gradient(90deg,#01008f 77px,#10008f 112px)}
.o364{top:364px;background:linear-gradient(90deg,#02008f 79px,#0d008f 107px)}
.o366{top:366px;background:linear-gradient(90deg,#03008f 82px,#0a008f 102px)}
.o368{top:368px;background:linear-gradient(90deg,#04008f 85px,#08008f 97px)}
.t18{top:18px;background:linear-gradient(90deg,#00ff00 85px,#00ff00 93px)}
.t20{top:20px;background:linear-gradient(90deg,#00ff00 85px,#01ff00 96px)}
.t22{top:22px;background:linear-gradient(90deg,#00ff00 85px,#01ff00 98px)}
.t24{top:24px;background:linear-gradient(90deg,#00ff00 85px,#02ff00 101px)}
.t26{top:26px;background:linear-gradient(90deg,#00ff01 84px,#03ff00 103px)}
.t28{top:28px;background:linear-gradient(90deg,#00ff01 84px,#04ff00 106px)}
.t30{top:30px;background:linear-gradient(90deg,#00ff01 84px,#04ff00 108px)}
.t32{top:32px;background:linear-gradient(90deg,#00ff01 84px,#06ff00 111px)}
.t34{top:34px;background:linear-gradient(90deg,#00ff02 84px,#06ff00 113px)}
.t36{top:36px;background:linear-gradient(90deg,#00ff02 84px,#08ff00 116px)}
.t38{top:38px;background:linear-gradient(90deg,#00ff02 84px,#09ff00 118px)}
.t40{top:40px;background:linear-gradient(90deg,#00ff03 84px,#0aff00 121px)}
.t42{top:42px;background:linear-gradient(90deg,#00ff03 83px,#0cff00 123px)}
.t44{top:44px;background:linear-gradient(90deg,#00ff04 83px,#0dff00 126px)}
.t46{top:46px;background:linear-gradient(90deg,#00ff04 83px,#0fff00 128px)}
.t48{top:48px;background:linear-gradient(90deg,#00ff05 83px,#11ff00 131px)}
.t50{top:50px;background:linear-gradient(90deg,#00ff05 83px,#12ff00 133px)}
.t52{top:52px;background:linear-gradient(90deg,#00ff06 83px,#05ff02 106.5px,#15ff00 136px)}
.t54{top:54px;background:linear-gradient(90deg,#00ff06 83px,#05ff02 107.5px,#16ff00 138px)}
.t56{top:56px;background:linear-gradient(90deg,#00ff07 83px,#06ff03 108.5px,#19ff00 141px)}
.t58{top:58px;background:linear-gradient(90deg,#00ff07 82px,#07ff03 109.5px,#1bff00 143px)}
.t60{top:60px;background:linear-gradient(90deg,#00ff08 82px,#07ff03 110.5px,#1dff00 146px)}
.t62{top:62px;background:linear-gradient(90deg,#00ff09 82px,#08ff03 111.5px,#1fff00 148px)}
.t64{top:64px;background:linear-gradient(90deg,#00ff09 82px,#09ff04 113.5px,#23ff00 151px)}
.t66{top:66px;background:linear-gradient(90deg,#00ff0a 82px,#0aff04 114.5px,#25ff00 153px)}
.t68{top:68px;background:linear-gradient(90deg,#00ff0b 82px,#0aff04 115.5px,#28ff00 156px)}
.t70{top:70px;background:linear-gradient(90deg,#00ff0b 82px,#0bff04 116.5px,#2bff00 158px)}
.t72{top:72px;background:linear-gradient(90deg,#00ff0c 82px,#0cff05 118.5px,#2eff00 161px)}
.t74{top:74px;background:linear-gradient(90deg,#00ff0d 82px,#0dff05 119.5px,#31ff00 163px)}
.t76{top:76px;background:linear-gradient(90deg,#00ff0e 81px,#0eff05 120.5px,#35ff00 166px)}
.t78{top:78px;background:linear-gradient(90deg,#00ff0f 81px,#0fff06 121.5px,#38ff00 168px)}
.t80{top:80px;background:linear-gradient(90deg,#00ff10 81px,#10ff06 123.5px,#3dff00 171px)}
.t82{top:82px;background:linear-gradient(90deg,#00ff10 81px,#11ff06 124.5px,#40ff00 173px)}
.t84{top:84px;background:linear-gradient(90deg,#00ff11 81px,#12ff07 125.5px,#45ff00 176px)}
.t86{top:86px;background:linear-gradient(90deg,#00ff12 81px,#05ff0d 101.5px,#13ff07 126.5px,#49ff00 178px)}
.t88{top:88px;background:linear-gradient(90deg,#00ff13 81px,#05ff0e 102.5px,#15ff07 128.5px,#4eff00 181px)}
.t90{top:90px;background:linear-gradient(90deg,#00ff14 81px,#05ff0f 102.5px,#17ff08 129.5px,#30ff03 155.5px,#52ff00 183px)}
.t92{top:92px;background:linear-gradient(90deg,#00ff16 80px,#05ff10 102.5px,#18ff08 130.5px,#33ff03 157.5px,#58ff00 186px)}
.t94{top:94px;background:linear-gradient(90deg,#00ff17 80px,#06ff10 103.5px,#19ff09 131.5px,#36ff03 159.5px,#5dff00 188px)}
.t96{top:96px;background:linear-gradient(90deg,#00ff18 80px,#07ff11 104.5px,#1bff09 133.5px,#39ff03 161.5px,#63ff00 191px)}
.t98{top:98px;background:linear-gradient(90deg,#00ff19 80px,#07ff12 104.5px,#1dff0a 134.5px,#3dff03 163.5px,#68ff00 193px)}
.t100{top:100px;background:linear-gradient(90deg,#00ff1a 80px,#08ff13 105.5px,#1fff0a 136.5px,#40ff03 165.5px,#6fff00 196px)}
.t102{top:102px;background:linear-gradient(90deg,#00ff1b 80px,#08ff14 106.5px,#20ff0b 137.5px,#44ff04 167.5px,#75ff00 198px)}
.t104{top:104px;background:linear-gradient(90deg,#00ff1d 80px,#09ff14 107.5px,#23ff0b 139.5px,#48ff04 169.5px,#7cff00 201px)}
.t106{top:106px;background:linear-gradient(90deg,#00ff1e 80px,#09ff16 107.5px,#25ff0c 140.5px,#4cff04 171.5px,#83ff00 203px)}
.t108{top:108px;background:linear-gradient(90deg,#00ff20 79px,#09ff17 107.5px,#26ff0c 141.5px,#51ff04 173.5px,#8bff00 206px)}
.t110{top:110px;background:linear-gradient(90deg,#00ff21 79px,#0aff18 108.5px,#29ff0d 143.5px,#55ff04 175.5px,#92ff00 208px)}
.t112{top:112px;background:linear-gradient(90deg,#00ff23 79px,#0bff19 109.5px,#2bff0e 144.5px,#5aff05 177.5px,#9bff00 211px)}
.t114{top:114px;background:linear-gradient(90deg,#00ff24 79px,#0cff1a 110.5px,#2eff0e 146.5px,#5fff05 179.5px,#a2ff00 213px)}
.t116{top:116px;background:linear-gradient(90deg,#00ff26 79px,#0dff1b 111.5px,#30ff0f 147.5px,#64ff05 181.5px,#adff00 216px)}
.t118{top:118px;background:linear-gradient(90deg,#00ff27 79px,#0eff1c 112.5px,#34ff0f 149.5px,#6aff05 183.5px,#b5ff00 218px)}
.t120{top:120px;background:linear-gradient(90deg,#00ff29 79px,#0fff1d 113.5px,#37ff10 151.5px,#71ff05 186.5px,#c0ff00 221px)}
.t122{top:122px;background:linear-gradient(90deg,#00ff2b 79px,#0fff1e 113.5px,#3aff11 152.5px,#76ff06 187.5px,#caff00 223px)}
.t124{top:124px;background:linear-gradient(90deg,#00ff2d 78px,#10ff20 113.5px,#3cff12 153.5px,#7eff06 190.5px,#d6ff00 226px)}
.t126{top:126px;background:linear-gradient(90deg,#00ff2f 78px,#11ff21 114.5px,#40ff12 155.5px,#85ff06 192.5px,#e0ff00 228px)}
.t128{top:128px;background:linear-gradient(90deg,#00ff31 78px,#04ff2a 94.5px,#12ff22 115.5px,#43ff13 156.5px,#8cff06 194.5px,#eeff00 231px)}
.t130{top:130px;background:linear-gradient(90deg,#00ff32 78px,#04ff2c 95.5px,#13ff24 116.5px,#48ff14 158.5px,#93ff07 196.5px,#faff00 233px)}
.t132{top:132px;background:linear-gradient(90deg,#00ff34 78px,#04ff2e 94.5px,#13ff26 115.5px,#46ff16 156.5px,#8aff09 191.5px,#c0ff03 212.5px,#ffff00 232.5px,#fff500 236px)}
.t134{top:134px;background:linear-gradient(90deg,#00ff37 78px,#04ff30 94.5px,#12ff28 114.5px,#44ff18 154.5px,#68ff11 174.5px,#94ff09 194.5px,#c4ff04 212.5px,#fdff00 230.5px,#ffea00 238px)}
.t136{top:136px;background:linear-gradient(90deg,#00ff39 78px,#11ff2b 112.5px,#40ff1b 151.5px,#66ff13 172.5px,#92ff0b 192.5px,#c5ff05 211.5px,#ffff01 229.5px,#ffdc00 241px)}
.t138{top:138px;background:linear-gradient(90deg,#00ff3b 78px,#10ff2d 111.5px,#3dff1e 148.5px,#62ff15 169.5px,#8dff0d 189.5px,#c0ff07 208.5px,#fdff01 227.5px,#ffd200 243px)}
.t140{top:140px;background:linear-gradient(90deg,#00ff3e 77px,#04ff37 93.5px,#13ff2e 114.5px,#49ff1d 155.5px,#98ff0e 192.5px,#c7ff07 209.5px,#ffff02 226.5px,#ffc600 246px)}
.t142{top:142px;background:linear-gradient(90deg,#00ff40 77px,#04ff39 93.5px,#13ff31 113.5px,#47ff1f 153.5px,#96ff10 190.5px,#c5ff09 207.5px,#fdff04 224.5px,#ffbd00 248px)}
.t144{top:144px;background:linear-gradient(90deg,#00ff42 77px,#04ff3c 93.5px,#13ff33 113.5px,#49ff21 153.5px,#96ff12 189.5px,#c6ff0b 206.5px,#ffff05 223.5px,#ffd201 237.5px,#ffb200 251px)}
.t146{top:146px;background:linear-gradient(90deg,#00ff45 77px,#04ff3e 93.5px,#14ff35 113.5px,#48ff24 152.5px,#97ff14 188.5px,#c7ff0d 205.5px,#fdff06 221.5px,#ffcb01 238.5px,#ffa900 253px)}
.t148{top:148px;background:linear-gradient(90deg,#00ff47 77px,#04ff41 92.5px,#13ff38 112.5px,#48ff26 151.5px,#97ff16 187.5px,#c8ff0e 204.5px,#ffff08 220.5px,#ffc902 237.5px,#ff9f00 256px)}
.t150{top:150px;background:linear-gradient(90deg,#00ff4a 77px,#04ff44 92.5px,#14ff3b 112.5px,#48ff29 150.5px,#95ff19 185.5px,#c6ff11 202.5px,#fdff0a 218.5px,#ffc202 238.5px,#ff9700 258px)}
.t152{top:152px;background:linear-gradient(90deg,#00ff4d 77px,#04ff46 92.5px,#14ff3d 112.5px,#49ff2b 150.5px,#98ff1a 185.5px,#c7ff13 201.5px,#ffff0c 217.5px,#ffc003 237.5px,#ff8e00 261px)}
.t154{top:154px;background:linear-gradient(90deg,#00ff50 77px,#04ff49 92.5px,#13ff40 111.5px,#49ff2e 149.5px,#96ff1d 183.5px,#c5ff16 199.5px,#fdff0e 215.5px,#ffb903 238.5px,#ff8700 263px)}
.t156{top:156px;background:linear-gradient(90deg,#00ff53 77px,#04ff4c 92.5px,#14ff43 111.5px,#49ff31 148.5px,#96ff20 182.5px,#c6ff18 198.5px,#ffff10 214.5px,#ffd90a 225.5px,#ffb504 238.5px,#ff7f00 266px)}
.t158{top:158px;background:linear-gradient(90deg,#00ff56 76px,#04ff4f 91.5px,#13ff47 110.5px,#48ff34 147.5px,#97ff23 181.5px,#c7ff1b 197.5px,#fdff13 212.5px,#ffb105 238.5px,#ff7900 268px)}
.t160{top:160px;background:linear-gradient(90deg,#00ff59 76px,#04ff53 90.5px,#13ff4a 109.5px,#48ff38 146.5px,#97ff26 180.5px,#c9ff1d 196.5px,#ffff15 211.5px,#ffd20c 224.5px,#ffac06 238.5px,#ff8b01 254.5px,#ff7100 271px)}
.t162{top:162px;background:linear-gradient(90deg,#00ff5d 76px,#04ff56 90.5px,#13ff4d 109.5px,#48ff3b 145.5px,#95ff29 178.5px,#c6ff21 194.5px,#fdff18 209.5px,#ffcd0d 224.5px,#ffa806 238.5px,#ff8601 255.5px,#ff6b00 273px)}
.t164{top:164px;background:linear-gradient(90deg,#00ff60 76px,#04ff5a 90.5px,#14ff50 109.5px,#49ff3e 145.5px,#98ff2c 178.5px,#c8ff24 193.5px,#ffff1b 208.5px,#ffce10 222.5px,#ffa407 238.5px,#ff8102 256.5px,#ff6500 276px)}
.t166{top:166px;background:linear-gradient(90deg,#00ff64 76px,#04ff5d 90.5px,#13ff54 108.5px,#49ff42 144.5px,#96ff30 176.5px,#c5ff27 191.5px,#fdff1f 206.5px,#ffc911 222.5px,#ffa008 238.5px,#ff7b02 257.5px,#ff5f00 278px)}
.t168{top:168px;background:linear-gradient(90deg,#00ff67 76px,#04ff61 90.5px,#13ff58 108.5px,#49ff45 143.5px,#96ff33 175.5px,#c6ff2b 190.5px,#ffff22 205.5px,#ffca14 220.5px,#ff9c09 238.5px,#ff7702 258.5px,#ff5900 281px)}
.t170{top:170px;background:linear-gradient(90deg,#00ff6b 76px,#04ff64 90.5px,#13ff5c 107.5px,#48ff49 142.5px,#97ff37 174.5px,#c8ff2e 189.5px,#fdff26 203.5px,#ffc515 220.5px,#ff980a 238.5px,#ff7203 259.5px,#ff5400 283px)}
.t172{top:172px;background:linear-gradient(90deg,#00ff6f 76px,#04ff68 90.5px,#13ff60 107.5px,#48ff4d 141.5px,#6cff44 157.5px,#98ff3b 173.5px,#c9ff32 188.5px,#ffff29 202.5px,#ffc618 218.5px,#ff960b 237.5px,#ff6d03 260.5px,#ff4f00 286px)}
.t174{top:174px;background:linear-gradient(90deg,#00ff73 75px,#04ff6d 89.5px,#13ff64 106.5px,#48ff52 140.5px,#95ff40 171.5px,#c7ff36 186.5px,#fdff2d 200.5px,#ffc11a 218.5px,#ff920c 237.5px,#ff6903 261.5px,#ff4a00 288px)}
.t176{top:176px;background:linear-gradient(90deg,#00ff78 75px,#04ff71 88.5px,#12ff69 105.5px,#47ff56 139.5px,#96ff44 170.5px,#c8ff3a 185.5px,#ffff31 199.5px,#ffc21d 216.5px,#ff8e0e 237.5px,#ff6404 262.5px,#ff4500 291px)}
.t178{top:178px;background:linear-gradient(90deg,#00ff7c 75px,#04ff76 88.5px,#13ff6d 105.5px,#47ff5b 138.5px,#93ff49 168.5px,#fffc35 198.5px,#ffbd1f 216.5px,#ff8a0f 237.5px,#ff6004 263.5px,#ff4100 293px)}
.t180{top:180px;background:linear-gradient(90deg,#00ff80 75px,#04ff7a 88.5px,#13ff71 105.5px,#49ff5f 138.5px,#97ff4d 168.5px,#c7ff44 182.5px,#ffff3a 196.5px,#ffba21 215.5px,#ff8610 237.5px,#ff5c04 264.5px,#ff3d00 296px)}
.t182{top:182px;background:linear-gradient(90deg,#00ff85 75px,#04ff7f 88.5px,#12ff76 104.5px,#2aff6d 121.5px,#48ff64 137.5px,#94ff52 166.5px,#fffc3e 195.5px,#ffb824 214.5px,#ff8211 237.5px,#ff5805 265.5px,#ff3900 298px)}
.t184{top:184px;background:linear-gradient(90deg,#00ff8a 75px,#04ff83 88.5px,#13ff7b 104.5px,#48ff69 136.5px,#95ff57 165.5px,#c6ff4e 179.5px,#fffe44 193.5px,#ffb928 212.5px,#ff8013 236.5px,#ff5505 265.5px,#ff3500 301px)}
.t186{top:186px;background:linear-gradient(90deg,#00ff8f 75px,#04ff89 87.5px,#12ff81 103.5px,#47ff6f 135.5px,#95ff5d 164.5px,#fffc49 192.5px,#ffb42a 212.5px,#ff7c14 236.5px,#ff5106 266.5px,#ff3100 303px)}
.t188{top:188px;background:linear-gradient(90deg,#00ff94 75px,#04ff8e 87.5px,#13ff86 103.5px,#2aff7d 119.5px,#49ff74 135.5px,#96ff62 163.5px,#c4ff59 176.5px,#fffe4f 190.5px,#ffd53d 200.5px,#ffb22d 211.5px,#ff7815 236.5px,#ff4d06 267.5px,#ff2d00 306px)}
.t190{top:190px;background:linear-gradient(90deg,#00ff9a 74px,#03ff94 86.5px,#12ff8c 102.5px,#47ff7a 133.5px,#93ff69 161.5px,#fffc54 189.5px,#ffd340 199.5px,#ffaf30 210.5px,#ff7516 236.5px,#ff4906 268.5px,#ff2a00 308px)}
.t192{top:192px;background:linear-gradient(90deg,#00ff9f 74px,#03ff99 86.5px,#11ff92 101.5px,#46ff80 132.5px,#94ff6f 160.5px,#c3ff66 173.5px,#fffe5c 187.5px,#ffd446 197.5px,#ffb034 208.5px,#ff7318 235.5px,#ff4607 269.5px,#ff2700 311px)}
.t194{top:194px;background:linear-gradient(90deg,#00ffa5 74px,#04ff9f 86.5px,#12ff98 101.5px,#46ff87 131.5px,#91ff76 158.5px,#fffc61 186.5px,#ffd24b 196.5px,#ffab36 208.5px,#ff6f19 235.5px,#ff4307 269.5px,#ff2400 313px)}
.t196{top:196px;background:linear-gradient(90deg,#00ffab 74px,#04ffa5 86.5px,#12ff9e 101.5px,#48ff8d 131.5px,#95ff7c 158.5px,#c6ff73 171.5px,#fffe69 184.5px,#ffd351 194.5px,#ffab3b 206.5px,#ff8a2a 219.5px,#ff6d1c 234.5px,#ff4008 270.5px,#ff2100 316px)}
.t198{top:198px;background:linear-gradient(90deg,#00ffb1 74px,#03ffac 85.5px,#12ffa4 100.5px,#28ff9c 115.5px,#47ff94 130.5px,#92ff83 156.5px,#fffc6f 183.5px,#ffd156 193.5px,#ffa93f 205.5px,#ff862c 219.5px,#ff6a1d 234.5px,#ff3c08 271.5px,#ff1f00 318px)}
.t200{top:200px;background:linear-gradient(90deg,#00ffb8 74px,#03ffb3 85.5px,#12ffab 100.5px,#47ff9b 129.5px,#6cff92 143.5px,#96ff8a 156.5px,#c4ff82 168.5px,#fffe78 181.5px,#ffce5b 192.5px,#ffa743 204.5px,#ff842f 218.5px,#ff681f 233.5px,#ff3a09 271.5px,#ff1c00 321px)}
.t202{top:202px;background:linear-gradient(90deg,#00ffbf 74px,#04ffb9 85.5px,#11ffb2 99.5px,#46ffa3 128.5px,#93ff92 154.5px,#fffc7e 180.5px,#ffcc60 191.5px,#ffa447 203.5px,#ff8232 217.5px,#ff6421 233.5px,#ff3709 272.5px,#ff1900 323px)}
.t204{top:204px;background:linear-gradient(90deg,#00ffc6 74px,#04ffc0 85.5px,#12ffba 99.5px,#2affb2 114.5px,#48ffaa 128.5px,#97ff9a 154.5px,#fffe88 178.5px,#ffcd67 189.5px,#ffa24b 202.5px,#ff7f35 216.5px,#ff6223 232.5px,#ff350a 272.5px,#ff1700 326px)}
.t206{top:206px;background:linear-gradient(90deg,#00ffcd 73px,#03ffc8 84.5px,#11ffc2 98.5px,#45ffb3 126.5px,#91ffa3 151.5px,#fffb8f 177.5px,#ffcb6d 188.5px,#ffa04f 201.5px,#ff7d38 215.5px,#ff5e24 232.5px,#ff320a 273.5px,#ff1500 328px)}
.t208{top:208px;background:linear-gradient(90deg,#00ffd5 73px,#03ffd0 84.5px,#12ffc9 98.5px,#29ffc2 112.5px,#47ffbb 126.5px,#95ffac 151.5px,#c6ffa4 163.5px,#fffe9a 175.5px,#ffcc75 186.5px,#ffa056 199.5px,#ff7b3b 214.5px,#ff5d27 231.5px,#ff2f0b 273.5px,#ff1300 331px)}
.t210{top:210px;background:linear-gradient(90deg,#00ffdd 73px,#03ffd8 83.5px,#11ffd2 97.5px,#28ffcb 111.5px,#47ffc4 125.5px,#92ffb5 149.5px,#fffba2 174.5px,#ffc578 186.5px,#ff9b58 199.5px,#ff773d 214.5px,#ff5928 231.5px,#ff4018 251.5px,#ff2c0b 274.5px,#ff1100 333px)}
.t212{top:212px;background:linear-gradient(90deg,#00ffe5 73px,#03ffe1 83.5px,#12ffda 97.5px,#46ffcd 124.5px,#6cffc6 137.5px,#96ffbe 149.5px,#fffeae 172.5px,#ffc781 184.5px,#ff9b5f 197.5px,#ff7642 212.5px,#ff572b 230.5px,#ff3e19 251.5px,#ff2a0c 275.5px,#ff0f00 336px)}
.t214{top:214px;background:linear-gradient(90deg,#00ffee 73px,#03ffea 83.5px,#11ffe4 96.5px,#28ffdd 110.5px,#46ffd7 123.5px,#93ffc9 147.5px,#fffbb7 171.5px,#ffc488 183.5px,#ff9864 196.5px,#ff7446 211.5px,#ff552e 229.5px,#ff3c1b 250.5px,#ff280d 275.5px,#ff0d00 338px)}
.t216{top:216px;background:linear-gradient(90deg,#00fff7 73px,#03fff3 83.5px,#11ffed 96.5px,#29ffe7 110.5px,#48ffe0 123.5px,#94ffd4 146.5px,#c3ffcd 157.5px,#fffec4 169.5px,#ffc592 181.5px,#ff996b 194.5px,#ff724a 210.5px,#ff5330 228.5px,#ff391c 250.5px,#ff260d 275.5px,#ff0b00 341px)}
.t218{top:218px;background:linear-gradient(90deg,#00feff 73px,#03fffd 82.5px,#11fff7 95.5px,#27fff2 108.5px,#45ffeb 121.5px,#90ffdf 144.5px,#c4ffd8 156.5px,#feffd1 167.5px,#fffbcd 168.5px,#ffc299 180.5px,#ff9670 193.5px,#ff704e 209.5px,#ff5032 228.5px,#ff371d 250.5px,#ff230e 276.5px,#ff0a00 343px)}
.t220{top:220px;background:linear-gradient(90deg,#00f5ff 73px,#03f8ff 83.5px,#11fdff 95.5px,#28fffc 108.5px,#47fff6 121.5px,#95ffea 144.5px,#fffddc 166.5px,#ffc4a4 178.5px,#ff9476 192.5px,#ff6d52 208.5px,#ff4e35 227.5px,#ff341e 250.5px,#ff210e 277.5px,#ff0800 346px)}
.t222{top:222px;background:linear-gradient(90deg,#00ebff 72px,#03eeff 82.5px,#0ff2ff 94.5px,#24f7ff 106.5px,#40fbff 118.5px,#8dfff8 141.5px,#c3fff1 153.5px,#feffeb 164.5px,#fffae6 165.5px,#ffc1ab 177.5px,#ff917c 191.5px,#ff6954 208.5px,#ff4a37 227.5px,#ff3220 250.5px,#ff1e0f 278.5px,#ff0700 348px)}
.t224{top:224px;background:linear-gradient(90deg,#00e2ff 72px,#03e5ff 82.5px,#11e9ff 95.5px,#28edff 108.5px,#45f1ff 120.5px,#68f6ff 131.5px,#8ffaff 141.5px,#fffdf7 163.5px,#ffc2b8 175.5px,#ff9184 189.5px,#ff695a 206.5px,#ff483a 226.5px,#ff2f21 250.5px,#ff1c10 278.5px,#ff0e04 313.5px,#ff0600 351px)}
.t226{top:226px;background:linear-gradient(90deg,#00daff 72px,#03dcff 82.5px,#11dfff 95.5px,#27e3ff 108.5px,#44e7ff 120.5px,#66eaff 131.5px,#91eeff 142.5px,#bcf2ff 151.5px,#fff4fc 163.5px,#ffbbbb 175.5px,#ff8c87 189.5px,#ff645c 206.5px,#ff453b 226.5px,#ff2d22 250.5px,#ff1a10 279.5px,#ff0d04 314.5px,#ff0500 353px)}
.t228{top:228px;background:linear-gradient(90deg,#00d2ff 72px,#04d4ff 83.5px,#12d7ff 96.5px,#29daff 109.5px,#46ddff 121.5px,#8fe3ff 142.5px,#c4e7ff 153.5px,#feebff 163.5px,#ffe6fa 164.5px,#ffb0bb 176.5px,#ff8184 191.5px,#ff5c5b 208.5px,#ff403a 228.5px,#ff2922 252.5px,#ff1810 281.5px,#ff0b04 317.5px,#ff0400 356px)}
.t230{top:230px;background:linear-gradient(90deg,#00caff 72px,#04ccff 83.5px,#12ceff 96.5px,#28d0ff 109.5px,#45d3ff 121.5px,#6ad6ff 133.5px,#96d8ff 144.5px,#c6dbff 154.5px,#ffdefe 164.5px,#ffa9be 176.5px,#ff7c87 191.5px,#ff585d 208.5px,#ff3d3c 228.5px,#ff2622 253.5px,#ff1610 282.5px,#ff0a04 318.5px,#ff0300 358px)}
.t232{top:232px;background:linear-gradient(90deg,#00c2ff 72px,#04c3ff 83.5px,#12c5ff 96.5px,#28c7ff 109.5px,#47c9ff 122.5px,#69cbff 133.5px,#93ceff 144.5px,#c2d0ff 154.5px,#ffd1fd 165.5px,#ff9fbe 177.5px,#ff7487 192.5px,#ff535d 209.5px,#ff373b 230.5px,#ff2222 255.5px,#ff1310 285.5px,#ff0804 322.5px,#ff0200 361px)}
.t234{top:234px;background:linear-gradient(90deg,#00bbff 72px,#04bcff 83.5px,#12bdff 96.5px,#28beff 109.5px,#46c0ff 122.5px,#68c2ff 133.5px,#91c3ff 144.5px,#ffc4fb 166.5px,#ff96bd 178.5px,#ff6d87 193.5px,#ff4d5e 210.5px,#ff333c 231.5px,#ff2022 256.5px,#ff1110 286.5px,#ff0704 323.5px,#ff0100 363px)}
.t236{top:236px;background:linear-gradient(90deg,#00b3ff 72px,#04b4ff 83.5px,#13b5ff 97.5px,#29b6ff 110.5px,#48b7ff 123.5px,#6db8ff 135.5px,#97baff 146.5px,#c6bbff 156.5px,#ffbcff 166.5px,#ff8cbc 179.5px,#ff6687 194.5px,#ff485e 211.5px,#ff303c 232.5px,#ff1d23 257.5px,#ff0f10 288.5px,#ff0504 325.5px,#ff0100 366px)}
.t238{top:238px;background:linear-gradient(90deg,#00acff 72px,#04adff 83.5px,#13adff 97.5px,#29aeff 110.5px,#47afff 123.5px,#6bafff 135.5px,#95b0ff 146.5px,#c3b1ff 156.5px,#ffb1fe 167.5px,#ff83bb 180.5px,#ff5f87 195.5px,#ff425c 213.5px,#ff2b3b 234.5px,#ff1a22 259.5px,#ff0d10 290.5px,#ff0404 327.5px,#ff0000 368px)}
.t240{top:240px;background:linear-gradient(90deg,#00a5ff 71px,#03a6ff 82.5px,#11a6ff 96.5px,#29a6ff 110.5px,#46a6ff 123.5px,#6aa7ff 135.5px,#93a7ff 146.5px,#ffa5fc 168.5px,#ff7bbb 181.5px,#ff5987 196.5px,#ff3d5c 214.5px,#ff283c 235.5px,#ff1722 261.5px,#ff0b10 292.5px,#ff0304 330.5px,#ff0000 371px)}
.t242{top:242px;background:linear-gradient(90deg,#009fff 71px,#039fff 82.5px,#119fff 96.5px,#289eff 110.5px,#469eff 123.5px,#699eff 135.5px,#919eff 146.5px,#c29eff 157.5px,#fe9dff 168.5px,#ff9afa 169.5px,#ff73ba 182.5px,#ff5387 197.5px,#ff395d 215.5px,#ff253c 236.5px,#ff1523 261.5px,#ff0a11 292.5px,#ff0205 330.5px,#ff0000 371px)}
.t244{top:244px;background:linear-gradient(90deg,#0098ff 71px,#0398ff 82.5px,#1398ff 97.5px,#2a97ff 111.5px,#4796ff 124.5px,#6b96ff 136.5px,#9795ff 148.5px,#c995ff 159.5px,#ff94fe 169.5px,#ff6dbe 182.5px,#ff4f89 197.5px,#ff3761 214.5px,#ff233f 235.5px,#ff1425 260.5px,#ff0912 290.5px,#ff0000 367px)}
.t246{top:246px;background:linear-gradient(90deg,#0092ff 71px,#0392ff 82.5px,#1291ff 97.5px,#2990ff 111.5px,#468fff 124.5px,#698eff 136.5px,#958dff 148.5px,#c18cff 158.5px,#ff8afd 170.5px,#ff68c1 182.5px,#ff4b8c 197.5px,#ff3463 214.5px,#ff2141 235.5px,#ff1327 259.5px,#ff0914 288.5px,#ff0001 362px)}
.t248{top:248px;background:linear-gradient(90deg,#008cff 71px,#038bff 82.5px,#128aff 97.5px,#2989ff 111.5px,#4688ff 124.5px,#6887ff 136.5px,#9385ff 148.5px,#ff80fb 171.5px,#ff61c0 183.5px,#ff458c 198.5px,#ff2f63 215.5px,#ff1f44 234.5px,#ff122a 257.5px,#ff0817 285.5px,#ff0002 356px)}
.t250{top:250px;background:linear-gradient(90deg,#0086ff 71px,#0385ff 82.5px,#1284ff 97.5px,#2982ff 111.5px,#4781ff 125.5px,#6a7fff 137.5px,#947dff 149.5px,#c57cff 160.5px,#ff7aff 171.5px,#ff5cc4 183.5px,#ff4392 197.5px,#ff2d67 214.5px,#ff1d47 233.5px,#ff112e 255.5px,#ff0819 282.5px,#ff0003 351px)}
.t252{top:252px;background:linear-gradient(90deg,#0081ff 71px,#0380ff 82.5px,#127eff 97.5px,#287cff 111.5px,#477aff 125.5px,#6878ff 137.5px,#9276ff 149.5px,#c274ff 160.5px,#ff71fe 172.5px,#ff55c3 184.5px,#ff3d92 198.5px,#ff2a6a 214.5px,#ff1c4a 232.5px,#ff1030 254.5px,#ff081c 279.5px,#ff0004 345px)}
.t254{top:254px;background:linear-gradient(90deg,#007bff 71px,#037aff 82.5px,#1278ff 97.5px,#2876ff 111.5px,#4674ff 125.5px,#6a71ff 138.5px,#946fff 150.5px,#ff69fc 173.5px,#ff4ec2 185.5px,#ff3a95 198.5px,#ff286c 214.5px,#ff1a4c 232.5px,#ff0f32 253.5px,#ff071f 277.5px,#ff0005 340px)}
.t256{top:256px;background:linear-gradient(90deg,#0076ff 70px,#0374ff 82.5px,#1272ff 97.5px,#2770ff 111.5px,#456dff 125.5px,#696bff 138.5px,#9268ff 150.5px,#c565ff 162.5px,#fe62ff 173.5px,#ff60fb 174.5px,#ff48c2 186.5px,#ff3594 199.5px,#ff256e 214.5px,#ff184f 231.5px,#ff0e36 251.5px,#ff0621 275.5px,#ff0007 334px)}
.t258{top:258px;background:linear-gradient(90deg,#0071ff 70px,#036fff 82.5px,#126dff 97.5px,#296aff 112.5px,#4767ff 126.5px,#6b64ff 139.5px,#9462ff 151.5px,#c75eff 163.5px,#ff5bff 174.5px,#ff45c9 185.5px,#ff329a 198.5px,#ff2373 213.5px,#ff1753 230.5px,#ff0d39 249.5px,#ff0624 272.5px,#ff0009 329px)}
.t260{top:260px;background:linear-gradient(90deg,#006cff 70px,#036aff 82.5px,#1267ff 97.5px,#2964ff 112.5px,#4661ff 126.5px,#695eff 139.5px,#925bff 151.5px,#c058ff 162.5px,#ff54fd 175.5px,#ff3fc8 186.5px,#ff2e9a 199.5px,#ff2075 213.5px,#ff1556 229.5px,#ff0c3c 248.5px,#ff0628 269.5px,#ff000c 323px)}
.t262{top:262px;background:linear-gradient(90deg,#0067ff 70px,#0465ff 82.5px,#1262ff 97.5px,#285fff 112.5px,#455cff 126.5px,#6859ff 139.5px,#9055ff 151.5px,#bd52ff 162.5px,#ff4dfb 176.5px,#ff3ac8 187.5px,#ff2a9d 199.5px,#ff1d77 213.5px,#ff1358 229.5px,#ff052b 267.5px,#ff000e 318px)}
.t264{top:264px;background:linear-gradient(90deg,#0062ff 70px,#0460ff 82.5px,#135dff 98.5px,#2a5aff 113.5px,#4756ff 127.5px,#6a53ff 140.5px,#964fff 153.5px,#c84bff 165.5px,#ff48ff 176.5px,#ff36cb 187.5px,#ff27a0 199.5px,#ff1c7c 212.5px,#ff125e 227.5px,#ff052f 264.5px,#ff0011 312px)}
.t266{top:266px;background:linear-gradient(90deg,#005eff 70px,#045bff 82.5px,#1358ff 98.5px,#2955ff 113.5px,#4651ff 127.5px,#694eff 140.5px,#944aff 153.5px,#c546ff 165.5px,#ff41fe 177.5px,#ff32ce 187.5px,#ff24a2 199.5px,#ff197f 212.5px,#ff1161 226.5px,#ff0433 261.5px,#ff0014 307px)}
.t268{top:268px;background:linear-gradient(90deg,#0059ff 70px,#0457ff 82.5px,#1353ff 98.5px,#2950ff 113.5px,#484cff 128.5px,#6a48ff 141.5px,#9544ff 154.5px,#ff3bfc 178.5px,#ff2dcd 188.5px,#ff21a5 199.5px,#ff1783 211.5px,#ff0f65 225.5px,#ff0437 258.5px,#ff0018 301px)}
.t270{top:270px;background:linear-gradient(90deg,#0055ff 70px,#0453ff 82.5px,#134fff 98.5px,#294bff 113.5px,#4747ff 128.5px,#6943ff 141.5px,#943fff 154.5px,#ff35fb 179.5px,#ff29d1 188.5px,#ff1ea8 199.5px,#ff1586 211.5px,#ff0e69 224.5px,#ff043b 256.5px,#ff001c 296px)}
.t272{top:272px;background:linear-gradient(90deg,#0051ff 69px,#044eff 82.5px,#124bff 98.5px,#2847ff 113.5px,#4642ff 128.5px,#6b3eff 142.5px,#953aff 155.5px,#c536ff 167.5px,#ff31ff 179.5px,#ff26d4 188.5px,#ff1bab 199.5px,#ff0c6d 223.5px,#ff033f 253.5px,#ff0020 290px)}
.t274{top:274px;background:linear-gradient(90deg,#004dff 69px,#044aff 82.5px,#1246ff 98.5px,#2842ff 113.5px,#463eff 128.5px,#6a3aff 142.5px,#9335ff 155.5px,#c331ff 167.5px,#ff2cfd 180.5px,#ff21d3 189.5px,#ff19ae 199.5px,#ff0b71 222.5px,#ff0345 250.5px,#ff0025 285px)}
.t276{top:276px;background:linear-gradient(90deg,#0049ff 69px,#0446ff 82.5px,#1242ff 98.5px,#293eff 114.5px,#473aff 129.5px,#9231ff 155.5px,#bc2dff 166.5px,#ff27fc 181.5px,#ff16b1 199.5px,#ff0a78 220.5px,#ff024a 247.5px,#ff002a 279px)}
.t278{top:278px;background:linear-gradient(90deg,#0046ff 69px,#0442ff 82.5px,#123eff 98.5px,#293aff 114.5px,#4635ff 129.5px,#6a31ff 143.5px,#972cff 157.5px,#c628ff 169.5px,#ff23ff 181.5px,#ff14b7 198.5px,#ff097c 219.5px,#ff0250 244.5px,#ff002f 274px)}
.t280{top:280px;background:linear-gradient(90deg,#0042ff 69px,#043fff 82.5px,#123bff 98.5px,#2936ff 114.5px,#4632ff 129.5px,#692dff 143.5px,#9528ff 157.5px,#c324ff 169.5px,#fb1fff 181.5px,#ff11b7 199.5px,#ff0881 218.5px,#ff0256 241.5px,#ff0036 268px)}
.t282{top:282px;background:linear-gradient(90deg,#003eff 69px,#043bff 82.5px,#1337ff 99.5px,#2a32ff 115.5px,#472eff 130.5px,#6a29ff 144.5px,#9724ff 158.5px,#c520ff 170.5px,#fc1bff 182.5px,#ff0fb9 199.5px,#ff0788 216.5px,#ff015c 238.5px,#ff003d 263px)}
.t284{top:284px;background:linear-gradient(90deg,#003bff 69px,#0438ff 82.5px,#1333ff 99.5px,#472aff 130.5px,#6925ff 144.5px,#9521ff 158.5px,#c61cff 171.5px,#fe17ff 183.5px,#ff0dc0 198.5px,#ff068d 215.5px,#ff0163 235.5px,#ff0045 257px)}
.t286{top:286px;background:linear-gradient(90deg,#0038ff 69px,#0434ff 82.5px,#1330ff 99.5px,#292bff 115.5px,#4826ff 131.5px,#6b22ff 145.5px,#961dff 159.5px,#c818ff 172.5px,#ff14ff 184.5px,#ff0bc7 197.5px,#ff0594 213.5px,#ff016c 231.5px,#ff004d 252px)}
.t288{top:288px;background:linear-gradient(90deg,#0035ff 68px,#0331ff 81.5px,#122dff 98.5px,#2728ff 114.5px,#4523ff 130.5px,#6a1eff 145.5px,#951aff 159.5px,#c515ff 172.5px,#fc11ff 184.5px,#ff08c2 199.5px,#ff049a 212.5px,#ff0174 228.5px,#ff0057 246px)}
.t290{top:290px;background:linear-gradient(90deg,#0032ff 68px,#042eff 82.5px,#1329ff 99.5px,#2925ff 115.5px,#4720ff 131.5px,#6b1bff 146.5px,#9616ff 160.5px,#c712ff 173.5px,#fd0eff 185.5px,#ff07c9 198.5px,#ff03a2 210.5px,#ff007c 225.5px,#ff0060 241px)}
.t292{top:292px;background:linear-gradient(90deg,#002fff 68px,#042bff 82.5px,#1326ff 99.5px,#2a22ff 116.5px,#481dff 132.5px,#6d18ff 147.5px,#9813ff 161.5px,#c80fff 174.5px,#ff0bff 186.5px,#ff06d0 197.5px,#ff02aa 208.5px,#ff0088 221.5px,#ff006d 235px)}
.t294{top:294px;background:linear-gradient(90deg,#002cff 68px,#0428ff 82.5px,#1324ff 99.5px,#2a1fff 116.5px,#471aff 132.5px,#6c15ff 147.5px,#9611ff 161.5px,#c60cff 174.5px,#fb08ff 186.5px,#ff02b0 207.5px,#ff0078 230px)}
.t296{top:296px;background:linear-gradient(90deg,#0029ff 68px,#0425ff 82.5px,#1321ff 99.5px,#291cff 116.5px,#4717ff 132.5px,#6b13ff 147.5px,#940eff 161.5px,#c30aff 174.5px,#fc06ff 187.5px,#ff01b9 205.5px,#ff0087 224px)}
.t298{top:298px;background:linear-gradient(90deg,#0026ff 68px,#0423ff 82.5px,#141eff 100.5px,#2b19ff 117.5px,#4814ff 133.5px,#6c10ff 148.5px,#960cff 162.5px,#c508ff 175.5px,#fe04ff 188.5px,#ff01c3 203.5px,#ff0098 218px)}
.t300{top:300px;background:linear-gradient(90deg,#0024ff 68px,#0420ff 82.5px,#131bff 100.5px,#2a17ff 117.5px,#4812ff 133.5px,#6b0eff 148.5px,#9709ff 163.5px,#c606ff 176.5px,#ff02ff 189.5px,#ff00cd 201.5px,#ff00a9 213px)}
.t302{top:302px;background:linear-gradient(90deg,#0021ff 68px,#041eff 82.5px,#1319ff 100.5px,#4710ff 133.5px,#6a0bff 148.5px,#9607ff 163.5px,#c404ff 176.5px,#fc01ff 189.5px,#ff00be 207px)}
.t304{top:304px;background:linear-gradient(90deg,#001fff 67px,#0f18ff 96.5px,#3c0fff 128.5px,#610aff 145.5px,#8e06ff 161.5px,#c203ff 176.5px,#fd00ff 190.5px,#ff00d3 202px)}
.t306{top:306px;background:linear-gradient(90deg,#001dff 67px,#0419ff 81.5px,#1115ff 98.5px,#2610ff 115.5px,#440cff 132.5px,#6808ff 148.5px,#9204ff 163.5px,#c301ff 177.5px,#fe00ff 191.5px,#ff00ee 196px)}
.t308{top:308px;background:linear-gradient(90deg,#001bff 67px,#0417ff 81.5px,#1213ff 99.5px,#280eff 116.5px,#450aff 133.5px,#6706ff 148.5px,#9103ff 163.5px,#f700ff 191px)}
.t310{top:310px;background:linear-gradient(90deg,#0018ff 67px,#1011ff 97.5px,#3d09ff 129.5px,#7d03ff 157.5px,#da00ff 185px)}
.t312{top:312px;background:linear-gradient(90deg,#0016ff 67px,#0e10ff 95.5px,#3708ff 126.5px,#7102ff 153.5px,#c400ff 180px)}
.t314{top:314px;background:linear-gradient(90deg,#0014ff 67px,#0c0eff 93.5px,#3007ff 122.5px,#6402ff 148.5px,#ac00ff 174px)}
.t316{top:316px;background:linear-gradient(90deg,#0013ff 67px,#0b0dff 91.5px,#2b07ff 119.5px,#5902ff 144.5px,#9a00ff 169px)}
.t318{top:318px;background:linear-gradient(90deg,#0011ff 67px,#090cff 89.5px,#2506ff 115.5px,#4e02ff 139.5px,#8600ff 163px)}
.t320{top:320px;background:linear-gradient(90deg,#000fff 67px,#080aff 88.5px,#2105ff 112.5px,#4501ff 135.5px,#7700ff 158px)}
.t322{top:322px;background:linear-gradient(90deg,#000eff 66px,#060aff 85.5px,#1b05ff 108.5px,#3a01ff 129.5px,#6700ff 152px)}
.t324{top:324px;background:linear-gradient(90deg,#000cff 66px,#0608ff 84.5px,#1804ff 105.5px,#3301ff 125.5px,#5b00ff 147px)}
.t326{top:326px;background:linear-gradient(90deg,#000bff 66px,#0407ff 82.5px,#1404ff 102.5px,#2c01ff 121.5px,#4d00ff 141px)}
.t328{top:328px;background:linear-gradient(90deg,#0009ff 66px,#0406ff 81.5px,#1103ff 99.5px,#4300ff 136px)}
.t330{top:330px;background:linear-gradient(90deg,#0008ff 66px,#0f03ff 96.5px,#3800ff 130px)}
.t332{top:332px;background:linear-gradient(90deg,#0007ff 66px,#0c02ff 93.5px,#3000ff 125px)}
.t334{top:334px;background:linear-gradient(90deg,#0006ff 66px,#0a02ff 90.5px,#2700ff 119px)}
.t336{top:336px;background:linear-gradient(90deg,#0005ff 66px,#0802ff 87.5px,#2000ff 114px)}
.t338{top:338px;background:linear-gradient(90deg,#0004ff 65px,#0601ff 84.5px,#1900ff 108px)}
.t340{top:340px;background:linear-gradient(90deg,#0003ff 65px,#0401ff 81.5px,#1400ff 103px)}
.t342{top:342px;background:linear-gradient(90deg,#0002ff 65px,#0e00ff 97px)}
.t344{top:344px;background:linear-gradient(90deg,#0001ff 65px,#0a00ff 92px)}
.t346{top:346px;background:linear-gradient(90deg,#0001ff 65px,#0600ff 86px)}
.t348{top:348px;background:linear-gradient(90deg,#0000ff 65px,#0400ff 81px)}
.t350{top:350px;background:linear-gradient(90deg,#0000ff 65px,#0100ff 75px)}
.sel{position:absolute;top:58px;height:30px;border-radius:4px 4px 0 0;background:linear-gradient(#4c4c4c,#6c6c6c);color:#fff;font-size:11px;line-height:14px;padding:1px 0 0 8px;white-space:nowrap}
.sel i{position:absolute;left:0;top:0;bottom:0;width:5px;}
.dd{position:absolute;right:6px;top:7px;width:18px;height:18px;border-radius:50%;background:radial-gradient(circle at 50% 35%,#6a6a6a,#3e3e3e)}
.dd:after{content:"";position:absolute;left:4px;top:7px;border-left:5px solid transparent;border-right:5px solid transparent;border-top:5px solid #fff}
.btn{position:absolute;background:linear-gradient(#6e6e6e,#4a4a4a);border:1px solid #2a2a2a;color:#fff;font-size:16px;text-align:center}
</style></head>
<body>

<div class="abs" style="left:0;top:0;width:1920px;height:23px;background:#f7f0e7"></div>
<svg class="abs" style="left:2px;top:2px" width="18" height="18" viewBox="0 0 18 18">
 <polygon points="9,1 13,5 9,9 5,5" fill="#f5c400"/><polygon points="13,5 17,9 13,13 9,9" fill="#3cc83c"/>
 <polygon points="9,9 13,13 9,17 5,13" fill="#e8305a"/><polygon points="5,5 9,9 5,13 1,9" fill="#2a8ae8"/>
</svg>
<div class="abs" style="left:24px;top:5px;font-size:12px;color:#111;white-space:nowrap">Calman 2026 Calman Home for Samsung&nbsp; - Calibration/Manual Calibration</div>
<div class="abs" style="left:1799px;top:10px;width:11px;height:1px;background:#222"></div>
<div class="abs" style="left:1845px;top:6px;width:9px;height:9px;border:1px solid #222"></div>
<div class="abs" style="left:1847px;top:4px;width:9px;height:9px;border-top:1px solid #222;border-right:1px solid #222"></div>
<svg class="abs" style="left:1888px;top:4px" width="14" height="14" viewBox="0 0 14 14"><path d="M1 1L13 13M13 1L1 13" stroke="#222" stroke-width="1.2"/></svg>
<div class="abs" style="left:0;top:23px;width:1920px;height:65px;background:#222"></div>
<div class="abs" style="left:1px;top:23px;width:182px;height:30px;border-radius:0 0 4px 4px;background:linear-gradient(#6ee24c,#10c810);border-bottom:1px solid #d8f0d0"></div>
<svg class="abs" style="left:18px;top:23px" width="34" height="30" viewBox="0 0 34 30">
 <g transform="translate(16.5,14.3) rotate(45)" fill="#fff">
  <path d="M-8.1,-8.1H-1V-5.6H-5.6V-1H-8.1Z"/><path d="M-8.1,-8.1H-1V-5.6H-5.6V-1H-8.1Z" transform="scale(-1,1)"/>
  <path d="M-8.1,-8.1H-1V-5.6H-5.6V-1H-8.1Z" transform="scale(1,-1)"/><path d="M-8.1,-8.1H-1V-5.6H-5.6V-1H-8.1Z" transform="scale(-1,-1)"/>
  <rect x="-4.6" y="-4.6" width="3.7" height="3.7"/><rect x="0.9" y="-4.6" width="3.7" height="3.7"/>
  <rect x="-4.6" y="0.9" width="3.7" height="3.7"/><rect x="0.9" y="0.9" width="3.7" height="3.7"/>
 </g>
</svg>
<div class="abs" style="left:50px;top:20px;font-size:26px;line-height:30px;color:#fff;white-space:nowrap">calman</div>
<div class="abs" style="left:155px;top:28px;width:21px;height:21px;border-radius:50%;background:linear-gradient(#22c822,#52dc42)"></div>
<div class="abs" style="left:161px;top:36px;border-left:5px solid transparent;border-right:5px solid transparent;border-top:5px solid #fff"></div>
<div class="abs" style="left:190px;top:36px;width:1730px;height:4px;background:linear-gradient(90deg,#00ff00 0%,#ffff00 20%,#ff0000 40%,#ff00ff 52%,#8000ff 62%,#0040ff 81%,#00ffff 100%)"></div>
<div class="abs" style="left:0;top:58px;width:26px;height:27px;border-radius:0 4px 4px 0;background:linear-gradient(#8a8a8a,#4a4a4a);border:1px solid #aaa"></div>
<div class="abs" style="left:3px;top:62px;width:19px;height:19px;border-radius:50%;background:radial-gradient(circle at 50% 30%,#555,#888)"></div>
<div class="abs" style="left:10px;top:66px;border-top:6px solid transparent;border-bottom:6px solid transparent;border-left:7px solid #fff"></div>
<div class="abs" style="left:29px;top:58px;width:92px;height:31px;border-radius:4px 4px 0 0;background:#3c3c3c;border:1px solid #777;border-bottom:none"></div>
<div class="abs" style="left:87px;top:59px;width:1px;height:29px;background:#777"></div>
<div class="abs" style="left:35px;top:67px;font-size:12px;color:#e8e8e8;white-space:nowrap">History 1</div>
<div class="abs" style="left:93px;top:65px;width:20px;height:20px;border-radius:50%;background:#444"></div>
<div class="abs" style="left:97px;top:67px;font-size:14px;color:#999">+</div>
<div class="sel" style="left:1311px;width:140px"><i style="background:#22dd22"></i>X-Rite i1Display OEM<br>TCL 65 C6KS<b class="dd"></b></div>
<div class="sel" style="left:1458px;width:248px"><i style="background:#22dd22"></i>Unified Pattern Generator Control Interface<b class="dd"></b></div>
<div class="sel" style="left:1713px;width:142px"><i style="background:#dddd00"></i>Direct Display Control<b class="dd"></b></div>
<div class="abs" style="left:1859px;top:58px;width:34px;height:29px;border-radius:4px;background:linear-gradient(#6a6a6a,#4a4a4a);border:1px solid #888"></div>
<div class="abs" style="left:1866px;top:63px;font-size:20px;color:#ccc">&#9881;</div>
<div class="abs" style="left:1894px;top:58px;width:26px;height:29px;border-radius:4px 0 0 4px;background:linear-gradient(#6a6a6a,#4a4a4a);border:1px solid #888"></div>
<div class="abs" style="left:1898px;top:63px;width:19px;height:19px;border-radius:50%;background:#555"></div>
<div class="abs" style="left:1902px;top:67px;border-top:6px solid transparent;border-bottom:6px solid transparent;border-right:7px solid #fff"></div>
<div class="abs" style="left:0;top:88px;width:1px;height:992px;background:#1e1e1e"></div>
<div class="abs" style="left:1913px;top:88px;width:7px;height:992px;background:linear-gradient(90deg,#333,#0e0e0e)"></div>

<div class="abs" style="left:20px;top:103px;font-size:58px;color:#efefef;white-space:nowrap">Pre/Post Comparison</div>
<div class="abs" style="left:1060px;top:101px;font-size:19px;line-height:25px;letter-spacing:-0.12px;color:#efefef;white-space:nowrap">Pre (top) and Post (bottom) calibration information.<br>Click Save Data to complete this calibration.</div>
<svg width="1920" height="1080" viewBox="0 0 1920 1080" style="position:absolute;left:0;top:0"><defs><linearGradient id="bg0" x1="0" y1="0" x2="0" y2="1"><stop offset="0" stop-color="rgb(40,40,40)"/><stop offset="0.45" stop-color="rgb(37,37,37)"/><stop offset="1" stop-color="rgb(24,24,24)"/></linearGradient>
<linearGradient id="bg1" x1="0" y1="0" x2="0" y2="1"><stop offset="0" stop-color="rgb(40,40,40)"/><stop offset="0.45" stop-color="rgb(37,37,37)"/><stop offset="1" stop-color="rgb(24,24,24)"/></linearGradient>
<linearGradient id="bg2" x1="0" y1="0" x2="0" y2="1"><stop offset="0" stop-color="rgb(40,40,40)"/><stop offset="0.45" stop-color="rgb(37,37,37)"/><stop offset="1" stop-color="rgb(24,24,24)"/></linearGradient>
<linearGradient id="bg3" x1="0" y1="0" x2="0" y2="1"><stop offset="0" stop-color="rgb(55,55,55)"/><stop offset="0.45" stop-color="rgb(51,51,51)"/><stop offset="1" stop-color="rgb(33,33,33)"/></linearGradient>
<linearGradient id="bg4" x1="0" y1="0" x2="0" y2="1"><stop offset="0" stop-color="rgb(70,70,70)"/><stop offset="0.45" stop-color="rgb(65,65,65)"/><stop offset="1" stop-color="rgb(42,42,42)"/></linearGradient>
<linearGradient id="bg5" x1="0" y1="0" x2="0" y2="1"><stop offset="0" stop-color="rgb(84,84,84)"/><stop offset="0.45" stop-color="rgb(78,78,78)"/><stop offset="1" stop-color="rgb(50,50,50)"/></linearGradient>
<linearGradient id="bg6" x1="0" y1="0" x2="0" y2="1"><stop offset="0" stop-color="rgb(97,97,97)"/><stop offset="0.45" stop-color="rgb(90,90,90)"/><stop offset="1" stop-color="rgb(58,58,58)"/></linearGradient>
<linearGradient id="bg7" x1="0" y1="0" x2="0" y2="1"><stop offset="0" stop-color="rgb(110,110,110)"/><stop offset="0.45" stop-color="rgb(102,102,102)"/><stop offset="1" stop-color="rgb(66,66,66)"/></linearGradient>
<linearGradient id="bg8" x1="0" y1="0" x2="0" y2="1"><stop offset="0" stop-color="rgb(122,122,122)"/><stop offset="0.45" stop-color="rgb(113,113,113)"/><stop offset="1" stop-color="rgb(73,73,73)"/></linearGradient>
<linearGradient id="bg9" x1="0" y1="0" x2="0" y2="1"><stop offset="0" stop-color="rgb(134,134,134)"/><stop offset="0.45" stop-color="rgb(125,125,125)"/><stop offset="1" stop-color="rgb(80,80,80)"/></linearGradient>
<linearGradient id="bg10" x1="0" y1="0" x2="0" y2="1"><stop offset="0" stop-color="rgb(146,146,146)"/><stop offset="0.45" stop-color="rgb(136,136,136)"/><stop offset="1" stop-color="rgb(87,87,87)"/></linearGradient>
<linearGradient id="bg11" x1="0" y1="0" x2="0" y2="1"><stop offset="0" stop-color="rgb(158,158,158)"/><stop offset="0.45" stop-color="rgb(146,146,146)"/><stop offset="1" stop-color="rgb(94,94,94)"/></linearGradient>
<linearGradient id="bg12" x1="0" y1="0" x2="0" y2="1"><stop offset="0" stop-color="rgb(169,169,169)"/><stop offset="0.45" stop-color="rgb(157,157,157)"/><stop offset="1" stop-color="rgb(101,101,101)"/></linearGradient>
<linearGradient id="bg13" x1="0" y1="0" x2="0" y2="1"><stop offset="0" stop-color="rgb(180,180,180)"/><stop offset="0.45" stop-color="rgb(168,168,168)"/><stop offset="1" stop-color="rgb(108,108,108)"/></linearGradient>
<linearGradient id="bg14" x1="0" y1="0" x2="0" y2="1"><stop offset="0" stop-color="rgb(191,191,191)"/><stop offset="0.45" stop-color="rgb(178,178,178)"/><stop offset="1" stop-color="rgb(115,115,115)"/></linearGradient>
<linearGradient id="bg15" x1="0" y1="0" x2="0" y2="1"><stop offset="0" stop-color="rgb(202,202,202)"/><stop offset="0.45" stop-color="rgb(188,188,188)"/><stop offset="1" stop-color="rgb(121,121,121)"/></linearGradient>
<linearGradient id="bg16" x1="0" y1="0" x2="0" y2="1"><stop offset="0" stop-color="rgb(213,213,213)"/><stop offset="0.45" stop-color="rgb(198,198,198)"/><stop offset="1" stop-color="rgb(127,127,127)"/></linearGradient>
<linearGradient id="bg17" x1="0" y1="0" x2="0" y2="1"><stop offset="0" stop-color="rgb(223,223,223)"/><stop offset="0.45" stop-color="rgb(208,208,208)"/><stop offset="1" stop-color="rgb(134,134,134)"/></linearGradient>
<linearGradient id="bg18" x1="0" y1="0" x2="0" y2="1"><stop offset="0" stop-color="rgb(234,234,234)"/><stop offset="0.45" stop-color="rgb(217,217,217)"/><stop offset="1" stop-color="rgb(140,140,140)"/></linearGradient>
<linearGradient id="bg19" x1="0" y1="0" x2="0" y2="1"><stop offset="0" stop-color="rgb(244,244,244)"/><stop offset="0.45" stop-color="rgb(227,227,227)"/><stop offset="1" stop-color="rgb(146,146,146)"/></linearGradient>
<linearGradient id="bg20" x1="0" y1="0" x2="0" y2="1"><stop offset="0" stop-color="rgb(255,255,255)"/><stop offset="0.45" stop-color="rgb(237,237,237)"/><stop offset="1" stop-color="rgb(153,153,153)"/></linearGradient><linearGradient id="sep" x1="0" x2="1" y1="0" y2="0"><stop offset="0" stop-color="#000038"/><stop offset="0.5" stop-color="#203a70"/><stop offset="0.75" stop-color="#3a7aa8"/><stop offset="1" stop-color="#20e8d8"/></linearGradient></defs><rect x="61" y="218" width="880" height="173" fill="#222" stroke="#9a9a9a" stroke-width="2"/>
<line x1="61" x2="941" y1="261.2" y2="261.2" stroke="#a0a0a0" stroke-width="2"/>
<line x1="61" x2="941" y1="304.5" y2="304.5" stroke="#a0a0a0" stroke-width="2"/>
<line x1="61" x2="941" y1="347.8" y2="347.8" stroke="#a0a0a0" stroke-width="2"/>
<line x1="54" x2="61" y1="218.0" y2="218.0" stroke="#d8d8d8" stroke-width="2"/>
<text x="54" y="224.0" text-anchor="end" class="ax">110</text>
<line x1="54" x2="61" y1="261.2" y2="261.2" stroke="#d8d8d8" stroke-width="2"/>
<text x="54" y="267.2" text-anchor="end" class="ax">105</text>
<line x1="54" x2="61" y1="304.5" y2="304.5" stroke="#d8d8d8" stroke-width="2"/>
<text x="54" y="310.5" text-anchor="end" class="ax">100</text>
<line x1="54" x2="61" y1="347.8" y2="347.8" stroke="#d8d8d8" stroke-width="2"/>
<text x="54" y="353.8" text-anchor="end" class="ax">95</text>
<line x1="54" x2="61" y1="391.0" y2="391.0" stroke="#d8d8d8" stroke-width="2"/>
<text x="54" y="397.0" text-anchor="end" class="ax">90</text>
<text x="484" y="212" text-anchor="middle" class="tt">RGB Balance</text>
<polyline points="61.0,304.5 105.0,304.5 149.0,304.5 193.0,304.5 237.0,309.3 281.0,305.4 325.0,300.2 369.0,305.8 413.0,321.8 457.0,335.6 501.0,333.0 545.0,334.8 589.0,342.6 633.0,342.6 677.0,341.7 721.0,305.8 765.0,305.8 809.0,305.8 853.0,305.8 897.0,305.8 941.0,305.8" fill="none" stroke="#008000" stroke-width="3.2" stroke-linejoin="round"/>
<polyline points="61.0,304.5 105.0,304.5 149.0,304.5 193.0,304.5 237.0,306.2 281.0,300.2 325.0,294.1 369.0,299.7 413.0,315.7 457.0,327.9 501.0,328.7 545.0,331.3 589.0,341.7 633.0,347.8 677.0,346.0 721.0,309.3 765.0,309.7 809.0,309.7 853.0,309.7 897.0,309.7 941.0,309.7" fill="none" stroke="#ff0000" stroke-width="3.2" stroke-linejoin="round"/>
<polyline points="61.0,304.5 105.0,304.5 149.0,304.5 193.0,304.5 237.0,304.5 281.0,293.3 325.0,286.3 369.0,288.9 413.0,301.9 457.0,314.0 501.0,305.4 545.0,304.5 589.0,306.2 633.0,301.9 677.0,294.1 721.0,260.4 765.0,260.4 809.0,260.4 853.0,260.4 897.0,260.4 941.0,260.4" fill="none" stroke="#0000ff" stroke-width="3.2" stroke-linejoin="round"/><rect x="52" y="441.75" width="889" height="112.75" fill="#222" stroke="#9a9a9a" stroke-width="2"/>
<line x1="52" x2="941" y1="480.5" y2="480.5" stroke="#a0a0a0" stroke-width="2"/>
<line x1="45" x2="52" y1="480.5" y2="480.5" stroke="#d8d8d8" stroke-width="2"/>
<text x="46" y="487.5" text-anchor="end" class="ax">10</text>
<line x1="45" x2="52" y1="554.5" y2="554.5" stroke="#d8d8d8" stroke-width="2"/>
<text x="46" y="561.5" text-anchor="end" class="ax">0</text>
<text x="484" y="436" text-anchor="middle" class="tt">DeltaE 2000</text>
<text x="101" y="440" class="tw">Avg: 5.3</text>
<text x="826" y="440" class="tw">Max: 8.1</text>
<rect x="142.2" y="551.2" width="31.3" height="3.3" fill="url(#bg2)"/>
<path d="M142.2,554.5V551.2H173.5V554.5" fill="none" stroke="#000" stroke-width="2.2"/>
<rect x="184.5" y="549.3" width="31.3" height="5.2" fill="url(#bg3)"/>
<path d="M184.5,554.5V549.3H215.8V554.5" fill="none" stroke="#000" stroke-width="2.2"/>
<rect x="226.8" y="542.7" width="31.3" height="11.8" fill="url(#bg4)"/>
<path d="M226.8,554.5V542.7H258.2V554.5" fill="none" stroke="#000" stroke-width="2.2"/>
<rect x="269.2" y="530.8" width="31.3" height="23.7" fill="url(#bg5)"/>
<path d="M269.2,554.5V530.8H300.5V554.5" fill="none" stroke="#000" stroke-width="2.2"/>
<rect x="311.5" y="525.6" width="31.3" height="28.9" fill="url(#bg6)"/>
<path d="M311.5,554.5V525.6H342.8V554.5" fill="none" stroke="#000" stroke-width="2.2"/>
<rect x="353.8" y="524.2" width="31.3" height="30.3" fill="url(#bg7)"/>
<path d="M353.8,554.5V524.2H385.2V554.5" fill="none" stroke="#000" stroke-width="2.2"/>
<rect x="396.2" y="519.0" width="31.3" height="35.5" fill="url(#bg8)"/>
<path d="M396.2,554.5V519.0H427.5V554.5" fill="none" stroke="#000" stroke-width="2.2"/>
<rect x="438.5" y="513.1" width="31.3" height="41.4" fill="url(#bg9)"/>
<path d="M438.5,554.5V513.1H469.8V554.5" fill="none" stroke="#000" stroke-width="2.2"/>
<rect x="480.8" y="509.0" width="31.3" height="45.5" fill="url(#bg10)"/>
<path d="M480.8,554.5V509.0H512.2V554.5" fill="none" stroke="#000" stroke-width="2.2"/>
<rect x="523.2" y="505.7" width="31.3" height="48.8" fill="url(#bg11)"/>
<path d="M523.2,554.5V505.7H554.5V554.5" fill="none" stroke="#000" stroke-width="2.2"/>
<rect x="565.5" y="499.3" width="31.3" height="55.2" fill="url(#bg12)"/>
<path d="M565.5,554.5V499.3H596.8V554.5" fill="none" stroke="#000" stroke-width="2.2"/>
<rect x="607.8" y="499.3" width="31.3" height="55.2" fill="url(#bg13)"/>
<path d="M607.8,554.5V499.3H639.2V554.5" fill="none" stroke="#000" stroke-width="2.2"/>
<rect x="650.2" y="494.6" width="31.3" height="59.9" fill="url(#bg14)"/>
<path d="M650.2,554.5V494.6H681.5V554.5" fill="none" stroke="#000" stroke-width="2.2"/>
<rect x="692.5" y="497.8" width="31.3" height="56.7" fill="url(#bg15)"/>
<path d="M692.5,554.5V497.8H723.8V554.5" fill="none" stroke="#000" stroke-width="2.2"/>
<rect x="734.8" y="497.8" width="31.3" height="56.7" fill="url(#bg16)"/>
<path d="M734.8,554.5V497.8H766.2V554.5" fill="none" stroke="#000" stroke-width="2.2"/>
<rect x="777.2" y="497.8" width="31.3" height="56.7" fill="url(#bg17)"/>
<path d="M777.2,554.5V497.8H808.5V554.5" fill="none" stroke="#000" stroke-width="2.2"/>
<rect x="819.5" y="497.8" width="31.3" height="56.7" fill="url(#bg18)"/>
<path d="M819.5,554.5V497.8H850.8V554.5" fill="none" stroke="#000" stroke-width="2.2"/>
<rect x="861.8" y="497.8" width="31.3" height="56.7" fill="url(#bg19)"/>
<path d="M861.8,554.5V497.8H893.2V554.5" fill="none" stroke="#000" stroke-width="2.2"/>
<rect x="904.2" y="499.3" width="31.3" height="55.2" fill="url(#bg20)"/>
<path d="M904.2,554.5V499.3H935.5V554.5" fill="none" stroke="#000" stroke-width="2.2"/>
<line x1="52" x2="941" y1="479.0" y2="479.0" stroke="#e00000" stroke-width="2.5"/>
<line x1="52" x2="941" y1="532.3" y2="532.3" stroke="#ffff00" stroke-width="2"/>
<line x1="52" x2="941" y1="548.2" y2="548.2" stroke="#008000" stroke-width="2"/>
<line x1="51" x2="942" y1="554.5" y2="554.5" stroke="#9a9a9a" stroke-width="2"/>
<line x1="52.0" x2="52.0" y1="555.5" y2="562.5" stroke="#d8d8d8" stroke-width="1.6"/>
<line x1="94.3" x2="94.3" y1="555.5" y2="562.5" stroke="#d8d8d8" stroke-width="1.6"/>
<line x1="136.7" x2="136.7" y1="555.5" y2="562.5" stroke="#d8d8d8" stroke-width="1.6"/>
<line x1="179.0" x2="179.0" y1="555.5" y2="562.5" stroke="#d8d8d8" stroke-width="1.6"/>
<line x1="221.3" x2="221.3" y1="555.5" y2="562.5" stroke="#d8d8d8" stroke-width="1.6"/>
<line x1="263.7" x2="263.7" y1="555.5" y2="562.5" stroke="#d8d8d8" stroke-width="1.6"/>
<line x1="306.0" x2="306.0" y1="555.5" y2="562.5" stroke="#d8d8d8" stroke-width="1.6"/>
<line x1="348.3" x2="348.3" y1="555.5" y2="562.5" stroke="#d8d8d8" stroke-width="1.6"/>
<line x1="390.7" x2="390.7" y1="555.5" y2="562.5" stroke="#d8d8d8" stroke-width="1.6"/>
<line x1="433.0" x2="433.0" y1="555.5" y2="562.5" stroke="#d8d8d8" stroke-width="1.6"/>
<line x1="475.3" x2="475.3" y1="555.5" y2="562.5" stroke="#d8d8d8" stroke-width="1.6"/>
<line x1="517.7" x2="517.7" y1="555.5" y2="562.5" stroke="#d8d8d8" stroke-width="1.6"/>
<line x1="560.0" x2="560.0" y1="555.5" y2="562.5" stroke="#d8d8d8" stroke-width="1.6"/>
<line x1="602.3" x2="602.3" y1="555.5" y2="562.5" stroke="#d8d8d8" stroke-width="1.6"/>
<line x1="644.7" x2="644.7" y1="555.5" y2="562.5" stroke="#d8d8d8" stroke-width="1.6"/>
<line x1="687.0" x2="687.0" y1="555.5" y2="562.5" stroke="#d8d8d8" stroke-width="1.6"/>
<line x1="729.3" x2="729.3" y1="555.5" y2="562.5" stroke="#d8d8d8" stroke-width="1.6"/>
<line x1="771.7" x2="771.7" y1="555.5" y2="562.5" stroke="#d8d8d8" stroke-width="1.6"/>
<line x1="814.0" x2="814.0" y1="555.5" y2="562.5" stroke="#d8d8d8" stroke-width="1.6"/>
<line x1="856.3" x2="856.3" y1="555.5" y2="562.5" stroke="#d8d8d8" stroke-width="1.6"/>
<line x1="898.7" x2="898.7" y1="555.5" y2="562.5" stroke="#d8d8d8" stroke-width="1.6"/>
<line x1="941.0" x2="941.0" y1="555.5" y2="562.5" stroke="#d8d8d8" stroke-width="1.6"/>
<text x="73.2" y="573.5" text-anchor="middle" class="ax">0</text>
<text x="115.5" y="573.5" text-anchor="middle" class="ax">5</text>
<text x="157.8" y="573.5" text-anchor="middle" class="ax">10</text>
<text x="200.2" y="573.5" text-anchor="middle" class="ax">15</text>
<text x="242.5" y="573.5" text-anchor="middle" class="ax">20</text>
<text x="284.8" y="573.5" text-anchor="middle" class="ax">25</text>
<text x="327.2" y="573.5" text-anchor="middle" class="ax">30</text>
<text x="369.5" y="573.5" text-anchor="middle" class="ax">35</text>
<text x="411.8" y="573.5" text-anchor="middle" class="ax">40</text>
<text x="454.2" y="573.5" text-anchor="middle" class="ax">45</text>
<text x="496.5" y="573.5" text-anchor="middle" class="ax">50</text>
<text x="538.8" y="573.5" text-anchor="middle" class="ax">55</text>
<text x="581.2" y="573.5" text-anchor="middle" class="ax">60</text>
<text x="623.5" y="573.5" text-anchor="middle" class="ax">65</text>
<text x="665.8" y="573.5" text-anchor="middle" class="ax">70</text>
<text x="708.2" y="573.5" text-anchor="middle" class="ax">75</text>
<text x="750.5" y="573.5" text-anchor="middle" class="ax">80</text>
<text x="792.8" y="573.5" text-anchor="middle" class="ax">85</text>
<text x="835.2" y="573.5" text-anchor="middle" class="ax">90</text>
<text x="877.5" y="573.5" text-anchor="middle" class="ax">95</text>
<text x="919.8" y="573.5" text-anchor="middle" class="ax">100</text><rect x="61" y="644" width="880" height="173" fill="#222" stroke="#9a9a9a" stroke-width="2"/>
<line x1="61" x2="941" y1="687.2" y2="687.2" stroke="#a0a0a0" stroke-width="2"/>
<line x1="61" x2="941" y1="730.5" y2="730.5" stroke="#a0a0a0" stroke-width="2"/>
<line x1="61" x2="941" y1="773.8" y2="773.8" stroke="#a0a0a0" stroke-width="2"/>
<line x1="54" x2="61" y1="644.0" y2="644.0" stroke="#d8d8d8" stroke-width="2"/>
<text x="54" y="650.0" text-anchor="end" class="ax">110</text>
<line x1="54" x2="61" y1="687.2" y2="687.2" stroke="#d8d8d8" stroke-width="2"/>
<text x="54" y="693.2" text-anchor="end" class="ax">105</text>
<line x1="54" x2="61" y1="730.5" y2="730.5" stroke="#d8d8d8" stroke-width="2"/>
<text x="54" y="736.5" text-anchor="end" class="ax">100</text>
<line x1="54" x2="61" y1="773.8" y2="773.8" stroke="#d8d8d8" stroke-width="2"/>
<text x="54" y="779.8" text-anchor="end" class="ax">95</text>
<line x1="54" x2="61" y1="817.0" y2="817.0" stroke="#d8d8d8" stroke-width="2"/>
<text x="54" y="823.0" text-anchor="end" class="ax">90</text>
<text x="484" y="638" text-anchor="middle" class="tt">RGB Balance</text>
<polyline points="61.0,730.5 105.0,730.5 149.0,730.5 193.0,730.5 237.0,732.2 281.0,728.8 325.0,719.3 369.0,725.3 413.0,740.9 457.0,755.6 501.0,757.3 545.0,761.6 589.0,771.2 633.0,774.6 677.0,766.0 721.0,730.5 765.0,730.5 809.0,730.5 853.0,730.5 897.0,730.5 941.0,730.5" fill="none" stroke="#008000" stroke-width="3.2" stroke-linejoin="round"/>
<polyline points="61.0,730.5 105.0,730.5 149.0,730.5 193.0,732.2 237.0,732.2 281.0,727.0 325.0,718.4 369.0,722.7 413.0,736.6 457.0,749.5 501.0,753.9 545.0,759.0 589.0,768.6 633.0,779.8 677.0,768.6 721.0,732.2 765.0,732.2 809.0,732.2 853.0,732.2 897.0,732.2 941.0,732.2" fill="none" stroke="#ff0000" stroke-width="3.2" stroke-linejoin="round"/>
<polyline points="61.0,730.5 105.0,730.5 149.0,729.6 193.0,729.6 237.0,729.6 281.0,724.4 325.0,717.5 369.0,722.7 413.0,734.8 457.0,753.0 501.0,756.5 545.0,759.9 589.0,766.8 633.0,773.8 677.0,762.5 721.0,729.6 765.0,729.6 809.0,730.5 853.0,731.4 897.0,731.4 941.0,729.6" fill="none" stroke="#0000ff" stroke-width="3.2" stroke-linejoin="round"/><rect x="52" y="867.75" width="889" height="112.75" fill="#222" stroke="#9a9a9a" stroke-width="2"/>
<line x1="52" x2="941" y1="906.5" y2="906.5" stroke="#a0a0a0" stroke-width="2"/>
<line x1="45" x2="52" y1="906.5" y2="906.5" stroke="#d8d8d8" stroke-width="2"/>
<text x="46" y="913.5" text-anchor="end" class="ax">10</text>
<line x1="45" x2="52" y1="980.5" y2="980.5" stroke="#d8d8d8" stroke-width="2"/>
<text x="46" y="987.5" text-anchor="end" class="ax">0</text>
<text x="484" y="862" text-anchor="middle" class="tt">DeltaE 2000</text>
<text x="101" y="866" class="tw">Avg: 1.4</text>
<text x="826" y="866" class="tw">Max: 3.8</text>
<rect x="184.5" y="978.3" width="31.3" height="2.2" fill="url(#bg3)"/>
<path d="M184.5,980.5V978.3H215.8V980.5" fill="none" stroke="#000" stroke-width="2.2"/>
<rect x="226.8" y="976.8" width="31.3" height="3.7" fill="url(#bg4)"/>
<path d="M226.8,980.5V976.8H258.2V980.5" fill="none" stroke="#000" stroke-width="2.2"/>
<rect x="269.2" y="975.3" width="31.3" height="5.2" fill="url(#bg5)"/>
<path d="M269.2,980.5V975.3H300.5V980.5" fill="none" stroke="#000" stroke-width="2.2"/>
<rect x="311.5" y="973.8" width="31.3" height="6.7" fill="url(#bg6)"/>
<path d="M311.5,980.5V973.8H342.8V980.5" fill="none" stroke="#000" stroke-width="2.2"/>
<rect x="353.8" y="973.8" width="31.3" height="6.7" fill="url(#bg7)"/>
<path d="M353.8,980.5V973.8H385.2V980.5" fill="none" stroke="#000" stroke-width="2.2"/>
<rect x="396.2" y="968.7" width="31.3" height="11.8" fill="url(#bg8)"/>
<path d="M396.2,980.5V968.7H427.5V980.5" fill="none" stroke="#000" stroke-width="2.2"/>
<rect x="438.5" y="959.8" width="31.3" height="20.7" fill="url(#bg9)"/>
<path d="M438.5,980.5V959.8H469.8V980.5" fill="none" stroke="#000" stroke-width="2.2"/>
<rect x="480.8" y="956.8" width="31.3" height="23.7" fill="url(#bg10)"/>
<path d="M480.8,980.5V956.8H512.2V980.5" fill="none" stroke="#000" stroke-width="2.2"/>
<rect x="523.2" y="956.8" width="31.3" height="23.7" fill="url(#bg11)"/>
<path d="M523.2,980.5V956.8H554.5V980.5" fill="none" stroke="#000" stroke-width="2.2"/>
<rect x="565.5" y="953.1" width="31.3" height="27.4" fill="url(#bg12)"/>
<path d="M565.5,980.5V953.1H596.8V980.5" fill="none" stroke="#000" stroke-width="2.2"/>
<rect x="607.8" y="953.1" width="31.3" height="27.4" fill="url(#bg13)"/>
<path d="M607.8,980.5V953.1H639.2V980.5" fill="none" stroke="#000" stroke-width="2.2"/>
<rect x="650.2" y="962.0" width="31.3" height="18.5" fill="url(#bg14)"/>
<path d="M650.2,980.5V962.0H681.5V980.5" fill="none" stroke="#000" stroke-width="2.2"/>
<rect x="692.5" y="978.3" width="31.3" height="2.2" fill="url(#bg15)"/>
<path d="M692.5,980.5V978.3H723.8V980.5" fill="none" stroke="#000" stroke-width="2.2"/>
<rect x="734.8" y="978.3" width="31.3" height="2.2" fill="url(#bg16)"/>
<path d="M734.8,980.5V978.3H766.2V980.5" fill="none" stroke="#000" stroke-width="2.2"/>
<rect x="777.2" y="978.3" width="31.3" height="2.2" fill="url(#bg17)"/>
<path d="M777.2,980.5V978.3H808.5V980.5" fill="none" stroke="#000" stroke-width="2.2"/>
<rect x="819.5" y="978.3" width="31.3" height="2.2" fill="url(#bg18)"/>
<path d="M819.5,980.5V978.3H850.8V980.5" fill="none" stroke="#000" stroke-width="2.2"/>
<rect x="861.8" y="978.3" width="31.3" height="2.2" fill="url(#bg19)"/>
<path d="M861.8,980.5V978.3H893.2V980.5" fill="none" stroke="#000" stroke-width="2.2"/>
<rect x="904.2" y="976.8" width="31.3" height="3.7" fill="url(#bg20)"/>
<path d="M904.2,980.5V976.8H935.5V980.5" fill="none" stroke="#000" stroke-width="2.2"/>
<line x1="52" x2="941" y1="905.0" y2="905.0" stroke="#e00000" stroke-width="2.5"/>
<line x1="52" x2="941" y1="958.3" y2="958.3" stroke="#ffff00" stroke-width="2"/>
<line x1="52" x2="941" y1="974.2" y2="974.2" stroke="#008000" stroke-width="2"/>
<line x1="51" x2="942" y1="980.5" y2="980.5" stroke="#9a9a9a" stroke-width="2"/>
<line x1="52.0" x2="52.0" y1="981.5" y2="988.5" stroke="#d8d8d8" stroke-width="1.6"/>
<line x1="94.3" x2="94.3" y1="981.5" y2="988.5" stroke="#d8d8d8" stroke-width="1.6"/>
<line x1="136.7" x2="136.7" y1="981.5" y2="988.5" stroke="#d8d8d8" stroke-width="1.6"/>
<line x1="179.0" x2="179.0" y1="981.5" y2="988.5" stroke="#d8d8d8" stroke-width="1.6"/>
<line x1="221.3" x2="221.3" y1="981.5" y2="988.5" stroke="#d8d8d8" stroke-width="1.6"/>
<line x1="263.7" x2="263.7" y1="981.5" y2="988.5" stroke="#d8d8d8" stroke-width="1.6"/>
<line x1="306.0" x2="306.0" y1="981.5" y2="988.5" stroke="#d8d8d8" stroke-width="1.6"/>
<line x1="348.3" x2="348.3" y1="981.5" y2="988.5" stroke="#d8d8d8" stroke-width="1.6"/>
<line x1="390.7" x2="390.7" y1="981.5" y2="988.5" stroke="#d8d8d8" stroke-width="1.6"/>
<line x1="433.0" x2="433.0" y1="981.5" y2="988.5" stroke="#d8d8d8" stroke-width="1.6"/>
<line x1="475.3" x2="475.3" y1="981.5" y2="988.5" stroke="#d8d8d8" stroke-width="1.6"/>
<line x1="517.7" x2="517.7" y1="981.5" y2="988.5" stroke="#d8d8d8" stroke-width="1.6"/>
<line x1="560.0" x2="560.0" y1="981.5" y2="988.5" stroke="#d8d8d8" stroke-width="1.6"/>
<line x1="602.3" x2="602.3" y1="981.5" y2="988.5" stroke="#d8d8d8" stroke-width="1.6"/>
<line x1="644.7" x2="644.7" y1="981.5" y2="988.5" stroke="#d8d8d8" stroke-width="1.6"/>
<line x1="687.0" x2="687.0" y1="981.5" y2="988.5" stroke="#d8d8d8" stroke-width="1.6"/>
<line x1="729.3" x2="729.3" y1="981.5" y2="988.5" stroke="#d8d8d8" stroke-width="1.6"/>
<line x1="771.7" x2="771.7" y1="981.5" y2="988.5" stroke="#d8d8d8" stroke-width="1.6"/>
<line x1="814.0" x2="814.0" y1="981.5" y2="988.5" stroke="#d8d8d8" stroke-width="1.6"/>
<line x1="856.3" x2="856.3" y1="981.5" y2="988.5" stroke="#d8d8d8" stroke-width="1.6"/>
<line x1="898.7" x2="898.7" y1="981.5" y2="988.5" stroke="#d8d8d8" stroke-width="1.6"/>
<line x1="941.0" x2="941.0" y1="981.5" y2="988.5" stroke="#d8d8d8" stroke-width="1.6"/>
<text x="73.2" y="999.5" text-anchor="middle" class="ax">0</text>
<text x="115.5" y="999.5" text-anchor="middle" class="ax">5</text>
<text x="157.8" y="999.5" text-anchor="middle" class="ax">10</text>
<text x="200.2" y="999.5" text-anchor="middle" class="ax">15</text>
<text x="242.5" y="999.5" text-anchor="middle" class="ax">20</text>
<text x="284.8" y="999.5" text-anchor="middle" class="ax">25</text>
<text x="327.2" y="999.5" text-anchor="middle" class="ax">30</text>
<text x="369.5" y="999.5" text-anchor="middle" class="ax">35</text>
<text x="411.8" y="999.5" text-anchor="middle" class="ax">40</text>
<text x="454.2" y="999.5" text-anchor="middle" class="ax">45</text>
<text x="496.5" y="999.5" text-anchor="middle" class="ax">50</text>
<text x="538.8" y="999.5" text-anchor="middle" class="ax">55</text>
<text x="581.2" y="999.5" text-anchor="middle" class="ax">60</text>
<text x="623.5" y="999.5" text-anchor="middle" class="ax">65</text>
<text x="665.8" y="999.5" text-anchor="middle" class="ax">70</text>
<text x="708.2" y="999.5" text-anchor="middle" class="ax">75</text>
<text x="750.5" y="999.5" text-anchor="middle" class="ax">80</text>
<text x="792.8" y="999.5" text-anchor="middle" class="ax">85</text>
<text x="835.2" y="999.5" text-anchor="middle" class="ax">90</text>
<text x="877.5" y="999.5" text-anchor="middle" class="ax">95</text>
<text x="919.8" y="999.5" text-anchor="middle" class="ax">100</text><rect x="1200" y="218" width="229" height="330" fill="#222" stroke="#9a9a9a" stroke-width="2"/>
<rect x="1200" y="218.40" width="33.1" height="2.16" fill="#000"/>
<rect x="1193" y="218.60" width="7" height="1.50" fill="#e0e0e0"/>
<rect x="1200" y="221.40" width="81.0" height="2.16" fill="#000"/>
<rect x="1193" y="221.60" width="7" height="1.50" fill="#e0e0e0"/>
<rect x="1200" y="224.40" width="80.3" height="2.16" fill="#000"/>
<rect x="1193" y="224.60" width="7" height="1.50" fill="#e0e0e0"/>
<rect x="1200" y="227.40" width="17.3" height="2.16" fill="#000"/>
<rect x="1193" y="227.60" width="7" height="1.50" fill="#e0e0e0"/>
<rect x="1200" y="230.40" width="78.4" height="2.16" fill="#000"/>
<rect x="1193" y="230.60" width="7" height="1.50" fill="#e0e0e0"/>
<rect x="1200" y="233.40" width="60.7" height="2.16" fill="#000"/>
<rect x="1193" y="233.60" width="7" height="1.50" fill="#e0e0e0"/>
<rect x="1200" y="236.40" width="27.5" height="2.16" fill="#000"/>
<rect x="1193" y="236.60" width="7" height="1.50" fill="#e0e0e0"/>
<rect x="1200" y="239.40" width="67.4" height="2.16" fill="#000"/>
<rect x="1193" y="239.60" width="7" height="1.50" fill="#e0e0e0"/>
<rect x="1200" y="242.40" width="37.1" height="2.16" fill="#000"/>
<rect x="1193" y="242.60" width="7" height="1.50" fill="#e0e0e0"/>
<rect x="1200" y="245.40" width="17.8" height="2.16" fill="#000"/>
<rect x="1193" y="245.60" width="7" height="1.50" fill="#e0e0e0"/>
<rect x="1200" y="248.40" width="31.2" height="2.16" fill="#000"/>
<rect x="1193" y="248.60" width="7" height="1.50" fill="#e0e0e0"/>
<rect x="1200" y="251.40" width="21.7" height="2.16" fill="#000"/>
<rect x="1193" y="251.60" width="7" height="1.50" fill="#e0e0e0"/>
<rect x="1200" y="254.40" width="60.1" height="2.16" fill="#000"/>
<rect x="1193" y="254.60" width="7" height="1.50" fill="#e0e0e0"/>
<rect x="1200" y="257.40" width="47.2" height="2.16" fill="#000"/>
<rect x="1193" y="257.60" width="7" height="1.50" fill="#e0e0e0"/>
<rect x="1200" y="260.40" width="35.7" height="2.16" fill="#000"/>
<rect x="1193" y="260.60" width="7" height="1.50" fill="#e0e0e0"/>
<rect x="1200" y="263.40" width="73.4" height="2.16" fill="#000"/>
<rect x="1193" y="263.60" width="7" height="1.50" fill="#e0e0e0"/>
<rect x="1200" y="266.40" width="52.7" height="2.16" fill="#000"/>
<rect x="1193" y="266.60" width="7" height="1.50" fill="#e0e0e0"/>
<rect x="1200" y="269.40" width="32.5" height="2.16" fill="#000"/>
<rect x="1193" y="269.60" width="7" height="1.50" fill="#e0e0e0"/>
<rect x="1200" y="272.40" width="40.2" height="2.16" fill="#000"/>
<rect x="1193" y="272.60" width="7" height="1.50" fill="#e0e0e0"/>
<rect x="1200" y="275.40" width="58.9" height="2.16" fill="#000"/>
<rect x="1193" y="275.60" width="7" height="1.50" fill="#e0e0e0"/>
<rect x="1200" y="278.40" width="28.7" height="2.16" fill="#000"/>
<rect x="1193" y="278.60" width="7" height="1.50" fill="#e0e0e0"/>
<rect x="1200" y="281.40" width="44.1" height="2.16" fill="#000"/>
<rect x="1193" y="281.60" width="7" height="1.50" fill="#e0e0e0"/>
<rect x="1200" y="284.40" width="55.4" height="2.16" fill="#000"/>
<rect x="1193" y="284.60" width="7" height="1.50" fill="#e0e0e0"/>
<rect x="1200" y="287.40" width="78.3" height="2.16" fill="#000"/>
<rect x="1193" y="287.60" width="7" height="1.50" fill="#e0e0e0"/>
<rect x="1200" y="290.40" width="56.9" height="2.16" fill="#000"/>
<rect x="1193" y="290.60" width="7" height="1.50" fill="#e0e0e0"/>
<rect x="1200" y="293.40" width="84.0" height="2.16" fill="#000"/>
<rect x="1193" y="293.60" width="7" height="1.50" fill="#e0e0e0"/>
<rect x="1200" y="296.40" width="57.3" height="2.16" fill="#000"/>
<rect x="1193" y="296.60" width="7" height="1.50" fill="#e0e0e0"/>
<rect x="1200" y="299.40" width="63.4" height="2.16" fill="#000"/>
<rect x="1193" y="299.60" width="7" height="1.50" fill="#e0e0e0"/>
<rect x="1200" y="302.40" width="53.5" height="2.16" fill="#000"/>
<rect x="1193" y="302.60" width="7" height="1.50" fill="#e0e0e0"/>
<rect x="1200" y="305.40" width="47.1" height="2.16" fill="#000"/>
<rect x="1193" y="305.60" width="7" height="1.50" fill="#e0e0e0"/>
<rect x="1200" y="308.40" width="61.4" height="2.16" fill="#000"/>
<rect x="1193" y="308.60" width="7" height="1.50" fill="#e0e0e0"/>
<rect x="1200" y="311.40" width="41.3" height="2.16" fill="#000"/>
<rect x="1193" y="311.60" width="7" height="1.50" fill="#e0e0e0"/>
<rect x="1200" y="314.40" width="18.6" height="2.16" fill="#000"/>
<rect x="1193" y="314.60" width="7" height="1.50" fill="#e0e0e0"/>
<rect x="1200" y="317.40" width="50.8" height="2.16" fill="#000"/>
<rect x="1193" y="317.60" width="7" height="1.50" fill="#e0e0e0"/>
<rect x="1200" y="320.40" width="60.4" height="2.16" fill="#000"/>
<rect x="1193" y="320.60" width="7" height="1.50" fill="#e0e0e0"/>
<rect x="1200" y="323.40" width="36.5" height="2.16" fill="#000"/>
<rect x="1193" y="323.60" width="7" height="1.50" fill="#e0e0e0"/>
<rect x="1200" y="326.40" width="16.5" height="2.16" fill="#000"/>
<rect x="1193" y="326.60" width="7" height="1.50" fill="#e0e0e0"/>
<rect x="1200" y="329.40" width="70.1" height="2.16" fill="#000"/>
<rect x="1193" y="329.60" width="7" height="1.50" fill="#e0e0e0"/>
<rect x="1200" y="332.40" width="57.5" height="2.16" fill="#000"/>
<rect x="1193" y="332.60" width="7" height="1.50" fill="#e0e0e0"/>
<rect x="1200" y="335.40" width="28.9" height="2.16" fill="#000"/>
<rect x="1193" y="335.60" width="7" height="1.50" fill="#e0e0e0"/>
<rect x="1200" y="338.40" width="79.0" height="2.16" fill="#000"/>
<rect x="1193" y="338.60" width="7" height="1.50" fill="#e0e0e0"/>
<rect x="1200" y="341.40" width="45.5" height="2.16" fill="#000"/>
<rect x="1193" y="341.60" width="7" height="1.50" fill="#e0e0e0"/>
<rect x="1200" y="344.40" width="60.3" height="2.16" fill="#000"/>
<rect x="1193" y="344.60" width="7" height="1.50" fill="#e0e0e0"/>
<rect x="1200" y="347.40" width="30.6" height="2.16" fill="#000"/>
<rect x="1193" y="347.60" width="7" height="1.50" fill="#e0e0e0"/>
<rect x="1200" y="350.40" width="35.0" height="2.16" fill="#000"/>
<rect x="1193" y="350.60" width="7" height="1.50" fill="#e0e0e0"/>
<rect x="1200" y="353.40" width="67.9" height="2.16" fill="#000"/>
<rect x="1193" y="353.60" width="7" height="1.50" fill="#e0e0e0"/>
<rect x="1200" y="356.40" width="25.0" height="2.16" fill="#000"/>
<rect x="1193" y="356.60" width="7" height="1.50" fill="#e0e0e0"/>
<rect x="1200" y="359.40" width="28.1" height="2.16" fill="#000"/>
<rect x="1193" y="359.60" width="7" height="1.50" fill="#e0e0e0"/>
<rect x="1200" y="362.40" width="47.6" height="2.16" fill="#000"/>
<rect x="1193" y="362.60" width="7" height="1.50" fill="#e0e0e0"/>
<rect x="1200" y="365.40" width="15.5" height="2.16" fill="#000"/>
<rect x="1193" y="365.60" width="7" height="1.50" fill="#e0e0e0"/>
<rect x="1200" y="368.40" width="35.6" height="2.16" fill="#000"/>
<rect x="1193" y="368.60" width="7" height="1.50" fill="#e0e0e0"/>
<rect x="1200" y="371.40" width="67.6" height="2.16" fill="#000"/>
<rect x="1193" y="371.60" width="7" height="1.50" fill="#e0e0e0"/>
<rect x="1200" y="374.40" width="43.6" height="2.16" fill="#000"/>
<rect x="1193" y="374.60" width="7" height="1.50" fill="#e0e0e0"/>
<rect x="1200" y="377.40" width="89.3" height="2.16" fill="#000"/>
<rect x="1193" y="377.60" width="7" height="1.50" fill="#e0e0e0"/>
<rect x="1200" y="380.40" width="58.1" height="2.16" fill="#000"/>
<rect x="1193" y="380.60" width="7" height="1.50" fill="#e0e0e0"/>
<rect x="1200" y="383.40" width="59.1" height="2.16" fill="#000"/>
<rect x="1193" y="383.60" width="7" height="1.50" fill="#e0e0e0"/>
<rect x="1200" y="386.40" width="83.2" height="2.16" fill="#000"/>
<rect x="1193" y="386.60" width="7" height="1.50" fill="#e0e0e0"/>
<rect x="1200" y="389.40" width="73.5" height="2.16" fill="#000"/>
<rect x="1193" y="389.60" width="7" height="1.50" fill="#e0e0e0"/>
<rect x="1200" y="392.40" width="24.2" height="2.16" fill="#000"/>
<rect x="1193" y="392.60" width="7" height="1.50" fill="#e0e0e0"/>
<rect x="1200" y="395.40" width="72.2" height="2.16" fill="#000"/>
<rect x="1193" y="395.60" width="7" height="1.50" fill="#e0e0e0"/>
<rect x="1200" y="398.40" width="20.8" height="2.16" fill="#000"/>
<rect x="1193" y="398.60" width="7" height="1.50" fill="#e0e0e0"/>
<rect x="1200" y="401.40" width="16.7" height="2.16" fill="#000"/>
<rect x="1193" y="401.60" width="7" height="1.50" fill="#e0e0e0"/>
<rect x="1200" y="404.40" width="49.0" height="2.16" fill="#000"/>
<rect x="1193" y="404.60" width="7" height="1.50" fill="#e0e0e0"/>
<rect x="1200" y="407.40" width="29.1" height="2.16" fill="#000"/>
<rect x="1193" y="407.60" width="7" height="1.50" fill="#e0e0e0"/>
<rect x="1200" y="410.40" width="35.3" height="2.16" fill="#000"/>
<rect x="1193" y="410.60" width="7" height="1.50" fill="#e0e0e0"/>
<rect x="1200" y="413.40" width="61.9" height="2.16" fill="#000"/>
<rect x="1193" y="413.60" width="7" height="1.50" fill="#e0e0e0"/>
<rect x="1200" y="416.40" width="40.9" height="2.16" fill="#000"/>
<rect x="1193" y="416.60" width="7" height="1.50" fill="#e0e0e0"/>
<rect x="1200" y="419.40" width="76.5" height="2.16" fill="#000"/>
<rect x="1193" y="419.60" width="7" height="1.50" fill="#e0e0e0"/>
<rect x="1200" y="422.40" width="29.8" height="2.16" fill="#000"/>
<rect x="1193" y="422.60" width="7" height="1.50" fill="#e0e0e0"/>
<rect x="1200" y="425.40" width="90.5" height="2.16" fill="#000"/>
<rect x="1193" y="425.60" width="7" height="1.50" fill="#e0e0e0"/>
<rect x="1200" y="428.40" width="44.3" height="2.16" fill="#000"/>
<rect x="1193" y="428.60" width="7" height="1.50" fill="#e0e0e0"/>
<rect x="1200" y="431.40" width="80.8" height="2.16" fill="#000"/>
<rect x="1193" y="431.60" width="7" height="1.50" fill="#e0e0e0"/>
<rect x="1200" y="434.40" width="69.0" height="2.16" fill="#000"/>
<rect x="1193" y="434.60" width="7" height="1.50" fill="#e0e0e0"/>
<rect x="1200" y="437.40" width="53.5" height="2.16" fill="#000"/>
<rect x="1193" y="437.60" width="7" height="1.50" fill="#e0e0e0"/>
<rect x="1200" y="440.40" width="35.4" height="2.16" fill="#000"/>
<rect x="1193" y="440.60" width="7" height="1.50" fill="#e0e0e0"/>
<rect x="1200" y="443.40" width="57.7" height="2.16" fill="#000"/>
<rect x="1193" y="443.60" width="7" height="1.50" fill="#e0e0e0"/>
<rect x="1200" y="446.40" width="58.1" height="2.16" fill="#000"/>
<rect x="1193" y="446.60" width="7" height="1.50" fill="#e0e0e0"/>
<rect x="1200" y="449.40" width="27.5" height="2.16" fill="#000"/>
<rect x="1193" y="449.60" width="7" height="1.50" fill="#e0e0e0"/>
<rect x="1200" y="452.40" width="68.0" height="2.16" fill="#000"/>
<rect x="1193" y="452.60" width="7" height="1.50" fill="#e0e0e0"/>
<rect x="1200" y="455.40" width="62.0" height="2.16" fill="#000"/>
<rect x="1193" y="455.60" width="7" height="1.50" fill="#e0e0e0"/>
<rect x="1200" y="458.40" width="59.8" height="2.16" fill="#000"/>
<rect x="1193" y="458.60" width="7" height="1.50" fill="#e0e0e0"/>
<rect x="1200" y="461.40" width="60.4" height="2.16" fill="#000"/>
<rect x="1193" y="461.60" width="7" height="1.50" fill="#e0e0e0"/>
<rect x="1200" y="464.40" width="56.8" height="2.16" fill="#000"/>
<rect x="1193" y="464.60" width="7" height="1.50" fill="#e0e0e0"/>
<rect x="1200" y="467.40" width="33.3" height="2.16" fill="#000"/>
<rect x="1193" y="467.60" width="7" height="1.50" fill="#e0e0e0"/>
<rect x="1200" y="470.40" width="46.6" height="2.16" fill="#000"/>
<rect x="1193" y="470.60" width="7" height="1.50" fill="#e0e0e0"/>
<rect x="1200" y="473.40" width="39.2" height="2.16" fill="#000"/>
<rect x="1193" y="473.60" width="7" height="1.50" fill="#e0e0e0"/>
<rect x="1200" y="476.40" width="24.2" height="2.16" fill="#000"/>
<rect x="1193" y="476.60" width="7" height="1.50" fill="#e0e0e0"/>
<rect x="1200" y="479.40" width="24.2" height="2.16" fill="#000"/>
<rect x="1193" y="479.60" width="7" height="1.50" fill="#e0e0e0"/>
<rect x="1200" y="482.40" width="35.7" height="2.16" fill="#000"/>
<rect x="1193" y="482.60" width="7" height="1.50" fill="#e0e0e0"/>
<rect x="1200" y="485.40" width="34.8" height="2.16" fill="#000"/>
<rect x="1193" y="485.60" width="7" height="1.50" fill="#e0e0e0"/>
<rect x="1200" y="488.40" width="54.6" height="2.16" fill="#000"/>
<rect x="1193" y="488.60" width="7" height="1.50" fill="#e0e0e0"/>
<rect x="1200" y="491.40" width="66.7" height="2.16" fill="#000"/>
<rect x="1193" y="491.60" width="7" height="1.50" fill="#e0e0e0"/>
<rect x="1200" y="494.40" width="43.4" height="2.16" fill="#000"/>
<rect x="1193" y="494.60" width="7" height="1.50" fill="#e0e0e0"/>
<rect x="1200" y="497.40" width="65.8" height="2.16" fill="#000"/>
<rect x="1193" y="497.60" width="7" height="1.50" fill="#e0e0e0"/>
<rect x="1200" y="500.40" width="68.2" height="2.16" fill="#000"/>
<rect x="1193" y="500.60" width="7" height="1.50" fill="#e0e0e0"/>
<rect x="1200" y="503.40" width="66.6" height="2.16" fill="#000"/>
<rect x="1193" y="503.60" width="7" height="1.50" fill="#e0e0e0"/>
<rect x="1200" y="506.40" width="25.8" height="2.16" fill="#000"/>
<rect x="1193" y="506.60" width="7" height="1.50" fill="#e0e0e0"/>
<rect x="1200" y="509.40" width="29.4" height="2.16" fill="#000"/>
<rect x="1193" y="509.60" width="7" height="1.50" fill="#e0e0e0"/>
<rect x="1200" y="512.40" width="34.7" height="2.16" fill="#000"/>
<rect x="1193" y="512.60" width="7" height="1.50" fill="#e0e0e0"/>
<rect x="1200" y="515.40" width="39.6" height="2.16" fill="#000"/>
<rect x="1193" y="515.60" width="7" height="1.50" fill="#e0e0e0"/>
<rect x="1200" y="518.40" width="45.0" height="2.16" fill="#000"/>
<rect x="1193" y="518.60" width="7" height="1.50" fill="#e0e0e0"/>
<rect x="1200" y="521.40" width="55.4" height="2.16" fill="#000"/>
<rect x="1193" y="521.60" width="7" height="1.50" fill="#e0e0e0"/>
<rect x="1200" y="524.40" width="64.1" height="2.16" fill="#000"/>
<rect x="1193" y="524.60" width="7" height="1.50" fill="#e0e0e0"/>
<rect x="1200" y="527.40" width="68.6" height="2.16" fill="#000"/>
<rect x="1193" y="527.60" width="7" height="1.50" fill="#e0e0e0"/>
<rect x="1200" y="530.40" width="69.5" height="2.16" fill="#000"/>
<rect x="1193" y="530.60" width="7" height="1.50" fill="#e0e0e0"/>
<rect x="1200" y="533.40" width="76.9" height="2.16" fill="#000"/>
<rect x="1193" y="533.60" width="7" height="1.50" fill="#e0e0e0"/>
<rect x="1200" y="536.40" width="84.0" height="2.16" fill="#000"/>
<rect x="1193" y="536.60" width="7" height="1.50" fill="#e0e0e0"/>
<rect x="1200" y="539.40" width="80.5" height="2.16" fill="#000"/>
<rect x="1193" y="539.60" width="7" height="1.50" fill="#e0e0e0"/>
<rect x="1200" y="542.40" width="92.9" height="2.16" fill="#000"/>
<rect x="1193" y="542.60" width="7" height="1.50" fill="#e0e0e0"/>
<rect x="1200" y="545.40" width="117.6" height="2.16" fill="#000"/>
<rect x="1193" y="545.60" width="7" height="1.50" fill="#e0e0e0"/>
<line x1="1276.3" x2="1276.3" y1="218" y2="548" stroke="#9a9a9a" stroke-width="2"/>
<line x1="1352.7" x2="1352.7" y1="218" y2="548" stroke="#ff1010" stroke-width="2.5"/>
<line x1="1245.8" x2="1245.8" y1="218" y2="548" stroke="#ffff00" stroke-width="2"/>
<line x1="1215.3" x2="1215.3" y1="218" y2="548" stroke="#008000" stroke-width="2"/>
<text x="1085" y="223.3" text-anchor="end" class="ml">9M</text>
<text x="1192" y="226.3" text-anchor="end" class="ml">9L</text>
<text x="1085" y="229.3" text-anchor="end" class="ml">9K</text>
<text x="1192" y="232.3" text-anchor="end" class="ml">9J</text>
<text x="1085" y="235.3" text-anchor="end" class="ml">9I</text>
<text x="1192" y="238.3" text-anchor="end" class="ml">9H</text>
<text x="1085" y="241.3" text-anchor="end" class="ml">9G</text>
<text x="1192" y="244.3" text-anchor="end" class="ml">9F</text>
<text x="1085" y="247.3" text-anchor="end" class="ml">9E</text>
<text x="1192" y="250.3" text-anchor="end" class="ml">9D</text>
<text x="1085" y="253.3" text-anchor="end" class="ml">9C</text>
<text x="1192" y="256.3" text-anchor="end" class="ml">9B</text>
<text x="1085" y="259.3" text-anchor="end" class="ml">8M</text>
<text x="1192" y="262.3" text-anchor="end" class="ml">8L</text>
<text x="1085" y="265.3" text-anchor="end" class="ml">8K</text>
<text x="1192" y="268.3" text-anchor="end" class="ml">8J</text>
<text x="1085" y="271.3" text-anchor="end" class="ml">8I</text>
<text x="1192" y="274.3" text-anchor="end" class="ml">8H</text>
<text x="1085" y="277.3" text-anchor="end" class="ml">8G</text>
<text x="1192" y="280.3" text-anchor="end" class="ml">8F</text>
<text x="1085" y="283.3" text-anchor="end" class="ml">8E</text>
<text x="1192" y="286.3" text-anchor="end" class="ml">8D</text>
<text x="1085" y="289.3" text-anchor="end" class="ml">8C</text>
<text x="1192" y="292.3" text-anchor="end" class="ml">8B</text>
<text x="1085" y="295.3" text-anchor="end" class="ml">7M</text>
<text x="1192" y="298.3" text-anchor="end" class="ml">7L</text>
<text x="1085" y="301.3" text-anchor="end" class="ml">7K</text>
<text x="1192" y="304.3" text-anchor="end" class="ml">7J</text>
<text x="1085" y="307.3" text-anchor="end" class="ml">7I</text>
<text x="1192" y="310.3" text-anchor="end" class="ml">7H</text>
<text x="1085" y="313.3" text-anchor="end" class="ml">7G</text>
<text x="1192" y="316.3" text-anchor="end" class="ml">7F</text>
<text x="1085" y="319.3" text-anchor="end" class="ml">7E</text>
<text x="1192" y="322.3" text-anchor="end" class="ml">7D</text>
<text x="1085" y="325.3" text-anchor="end" class="ml">7C</text>
<text x="1192" y="328.3" text-anchor="end" class="ml">7B</text>
<text x="1085" y="331.3" text-anchor="end" class="ml">6M</text>
<text x="1192" y="334.3" text-anchor="end" class="ml">6L</text>
<text x="1085" y="337.3" text-anchor="end" class="ml">6K</text>
<text x="1192" y="340.3" text-anchor="end" class="ml">6J</text>
<text x="1085" y="343.3" text-anchor="end" class="ml">6I</text>
<text x="1192" y="346.3" text-anchor="end" class="ml">6H</text>
<text x="1085" y="349.3" text-anchor="end" class="ml">6G</text>
<text x="1192" y="352.3" text-anchor="end" class="ml">6F</text>
<text x="1085" y="355.3" text-anchor="end" class="ml">6E</text>
<text x="1192" y="358.3" text-anchor="end" class="ml">6D</text>
<text x="1085" y="361.3" text-anchor="end" class="ml">6C</text>
<text x="1192" y="364.3" text-anchor="end" class="ml">6B</text>
<text x="1085" y="367.3" text-anchor="end" class="ml">5M</text>
<text x="1192" y="370.3" text-anchor="end" class="ml">5L</text>
<text x="1085" y="373.3" text-anchor="end" class="ml">5K</text>
<text x="1192" y="376.3" text-anchor="end" class="ml">5J</text>
<text x="1085" y="379.3" text-anchor="end" class="ml">5I</text>
<text x="1192" y="382.3" text-anchor="end" class="ml">5H</text>
<text x="1085" y="385.3" text-anchor="end" class="ml">5G</text>
<text x="1192" y="388.3" text-anchor="end" class="ml">5F</text>
<text x="1085" y="391.3" text-anchor="end" class="ml">5E</text>
<text x="1192" y="394.3" text-anchor="end" class="ml">5D</text>
<text x="1085" y="397.3" text-anchor="end" class="ml">5C</text>
<text x="1192" y="400.3" text-anchor="end" class="ml">5B</text>
<text x="1085" y="403.3" text-anchor="end" class="ml">4M</text>
<text x="1192" y="406.3" text-anchor="end" class="ml">4L</text>
<text x="1085" y="409.3" text-anchor="end" class="ml">4K</text>
<text x="1192" y="412.3" text-anchor="end" class="ml">4J</text>
<text x="1085" y="415.3" text-anchor="end" class="ml">4I</text>
<text x="1192" y="418.3" text-anchor="end" class="ml">4H</text>
<text x="1085" y="421.3" text-anchor="end" class="ml">4G</text>
<text x="1192" y="424.3" text-anchor="end" class="ml">4F</text>
<text x="1085" y="427.3" text-anchor="end" class="ml">4E</text>
<text x="1192" y="430.3" text-anchor="end" class="ml">4D</text>
<text x="1085" y="433.3" text-anchor="end" class="ml">4C</text>
<text x="1192" y="436.3" text-anchor="end" class="ml">4B</text>
<text x="1085" y="439.3" text-anchor="end" class="ml">3M</text>
<text x="1192" y="442.3" text-anchor="end" class="ml">3L</text>
<text x="1085" y="445.3" text-anchor="end" class="ml">3K</text>
<text x="1192" y="448.3" text-anchor="end" class="ml">3J</text>
<text x="1085" y="451.3" text-anchor="end" class="ml">3I</text>
<text x="1192" y="454.3" text-anchor="end" class="ml">3H</text>
<text x="1085" y="457.3" text-anchor="end" class="ml">Cyan</text>
<text x="1192" y="460.3" text-anchor="end" class="ml">Magenta</text>
<text x="1085" y="463.3" text-anchor="end" class="ml">Yellow</text>
<text x="1192" y="466.3" text-anchor="end" class="ml">Red</text>
<text x="1085" y="469.3" text-anchor="end" class="ml">Green</text>
<text x="1192" y="472.3" text-anchor="end" class="ml">Blue</text>
<text x="1085" y="475.3" text-anchor="end" class="ml">Orange Yellow</text>
<text x="1192" y="478.3" text-anchor="end" class="ml">Yellow Green</text>
<text x="1085" y="481.3" text-anchor="end" class="ml">Purple</text>
<text x="1192" y="484.3" text-anchor="end" class="ml">Moderate Red</text>
<text x="1085" y="487.3" text-anchor="end" class="ml">Purplish Blue</text>
<text x="1192" y="490.3" text-anchor="end" class="ml">Orange</text>
<text x="1085" y="493.3" text-anchor="end" class="ml">Bluish Green</text>
<text x="1192" y="496.3" text-anchor="end" class="ml">Blue Flower</text>
<text x="1085" y="499.3" text-anchor="end" class="ml">Foliage</text>
<text x="1192" y="502.3" text-anchor="end" class="ml">Blue Sky</text>
<text x="1085" y="505.3" text-anchor="end" class="ml">Light Skin</text>
<text x="1192" y="508.3" text-anchor="end" class="ml">Dark Skin</text>
<text x="1085" y="511.3" text-anchor="end" class="ml">6C</text>
<text x="1192" y="514.3" text-anchor="end" class="ml">9B</text>
<text x="1085" y="517.3" text-anchor="end" class="ml">6E</text>
<text x="1192" y="520.3" text-anchor="end" class="ml">7B</text>
<text x="1085" y="523.3" text-anchor="end" class="ml">5H</text>
<text x="1192" y="526.3" text-anchor="end" class="ml">6N</text>
<text x="1085" y="529.3" text-anchor="end" class="ml">Gray 80</text>
<text x="1192" y="532.3" text-anchor="end" class="ml">6B</text>
<text x="1085" y="535.3" text-anchor="end" class="ml">Gray 80</text>
<text x="1192" y="538.3" text-anchor="end" class="ml">5N</text>
<text x="1085" y="541.3" text-anchor="end" class="ml">Gray 80</text>
<text x="1192" y="544.3" text-anchor="end" class="ml">4N</text>
<text x="1085" y="547.3" text-anchor="end" class="ml">Gray 80</text>
<text x="1192" y="550.3" text-anchor="end" class="ml">White</text>
<line x1="1200.0" x2="1200.0" y1="548" y2="554" stroke="#d8d8d8" stroke-width="2"/>
<text x="1200.0" y="573" text-anchor="middle" class="ax">0</text>
<line x1="1276.3" x2="1276.3" y1="548" y2="554" stroke="#d8d8d8" stroke-width="2"/>
<text x="1276.3" y="573" text-anchor="middle" class="ax">5</text>
<line x1="1352.7" x2="1352.7" y1="548" y2="554" stroke="#d8d8d8" stroke-width="2"/>
<text x="1352.7" y="573" text-anchor="middle" class="ax">10</text>
<line x1="1429.0" x2="1429.0" y1="548" y2="554" stroke="#d8d8d8" stroke-width="2"/>
<text x="1429.0" y="573" text-anchor="middle" class="ax">15</text>
<text x="1204" y="212" text-anchor="middle" class="tt">DeltaE 2000</text>
<text x="1069" y="215" class="tw">Avg: 3.4</text>
<text x="1314" y="215" class="tw">Max: 7.7</text><rect x="1200" y="644" width="229" height="330" fill="#222" stroke="#9a9a9a" stroke-width="2"/>
<rect x="1200" y="644.40" width="21.0" height="2.16" fill="#000"/>
<rect x="1193" y="644.60" width="7" height="1.50" fill="#e0e0e0"/>
<rect x="1200" y="647.40" width="39.7" height="2.16" fill="#000"/>
<rect x="1193" y="647.60" width="7" height="1.50" fill="#e0e0e0"/>
<rect x="1200" y="650.40" width="23.2" height="2.16" fill="#000"/>
<rect x="1193" y="650.60" width="7" height="1.50" fill="#e0e0e0"/>
<rect x="1200" y="653.40" width="10.4" height="2.16" fill="#000"/>
<rect x="1193" y="653.60" width="7" height="1.50" fill="#e0e0e0"/>
<rect x="1200" y="656.40" width="28.1" height="2.16" fill="#000"/>
<rect x="1193" y="656.60" width="7" height="1.50" fill="#e0e0e0"/>
<rect x="1200" y="659.40" width="6.8" height="2.16" fill="#000"/>
<rect x="1193" y="659.60" width="7" height="1.50" fill="#e0e0e0"/>
<rect x="1200" y="662.40" width="6.7" height="2.16" fill="#000"/>
<rect x="1193" y="662.60" width="7" height="1.50" fill="#e0e0e0"/>
<rect x="1200" y="665.40" width="63.7" height="2.16" fill="#000"/>
<rect x="1193" y="665.60" width="7" height="1.50" fill="#e0e0e0"/>
<rect x="1200" y="668.40" width="41.3" height="2.16" fill="#000"/>
<rect x="1193" y="668.60" width="7" height="1.50" fill="#e0e0e0"/>
<rect x="1200" y="671.40" width="27.5" height="2.16" fill="#000"/>
<rect x="1193" y="671.60" width="7" height="1.50" fill="#e0e0e0"/>
<rect x="1200" y="674.40" width="3.6" height="2.16" fill="#000"/>
<rect x="1193" y="674.60" width="7" height="1.50" fill="#e0e0e0"/>
<rect x="1200" y="677.40" width="5.4" height="2.16" fill="#000"/>
<rect x="1193" y="677.60" width="7" height="1.50" fill="#e0e0e0"/>
<rect x="1200" y="680.40" width="52.7" height="2.16" fill="#000"/>
<rect x="1193" y="680.60" width="7" height="1.50" fill="#e0e0e0"/>
<rect x="1200" y="683.40" width="20.5" height="2.16" fill="#000"/>
<rect x="1193" y="683.60" width="7" height="1.50" fill="#e0e0e0"/>
<rect x="1200" y="686.40" width="23.7" height="2.16" fill="#000"/>
<rect x="1193" y="686.60" width="7" height="1.50" fill="#e0e0e0"/>
<rect x="1200" y="689.40" width="22.9" height="2.16" fill="#000"/>
<rect x="1193" y="689.60" width="7" height="1.50" fill="#e0e0e0"/>
<rect x="1200" y="692.40" width="21.2" height="2.16" fill="#000"/>
<rect x="1193" y="692.60" width="7" height="1.50" fill="#e0e0e0"/>
<rect x="1200" y="695.40" width="42.7" height="2.16" fill="#000"/>
<rect x="1193" y="695.60" width="7" height="1.50" fill="#e0e0e0"/>
<rect x="1200" y="698.40" width="36.4" height="2.16" fill="#000"/>
<rect x="1193" y="698.60" width="7" height="1.50" fill="#e0e0e0"/>
<rect x="1200" y="701.40" width="15.6" height="2.16" fill="#000"/>
<rect x="1193" y="701.60" width="7" height="1.50" fill="#e0e0e0"/>
<rect x="1200" y="704.40" width="14.5" height="2.16" fill="#000"/>
<rect x="1193" y="704.60" width="7" height="1.50" fill="#e0e0e0"/>
<rect x="1200" y="707.40" width="33.5" height="2.16" fill="#000"/>
<rect x="1193" y="707.60" width="7" height="1.50" fill="#e0e0e0"/>
<rect x="1200" y="710.40" width="36.7" height="2.16" fill="#000"/>
<rect x="1193" y="710.60" width="7" height="1.50" fill="#e0e0e0"/>
<rect x="1200" y="713.40" width="41.1" height="2.16" fill="#000"/>
<rect x="1193" y="713.60" width="7" height="1.50" fill="#e0e0e0"/>
<rect x="1200" y="716.40" width="3.1" height="2.16" fill="#000"/>
<rect x="1193" y="716.60" width="7" height="1.50" fill="#e0e0e0"/>
<rect x="1200" y="719.40" width="39.2" height="2.16" fill="#000"/>
<rect x="1193" y="719.60" width="7" height="1.50" fill="#e0e0e0"/>
<rect x="1200" y="722.40" width="42.0" height="2.16" fill="#000"/>
<rect x="1193" y="722.60" width="7" height="1.50" fill="#e0e0e0"/>
<rect x="1200" y="725.40" width="6.0" height="2.16" fill="#000"/>
<rect x="1193" y="725.60" width="7" height="1.50" fill="#e0e0e0"/>
<rect x="1200" y="728.40" width="34.0" height="2.16" fill="#000"/>
<rect x="1193" y="728.60" width="7" height="1.50" fill="#e0e0e0"/>
<rect x="1200" y="731.40" width="6.5" height="2.16" fill="#000"/>
<rect x="1193" y="731.60" width="7" height="1.50" fill="#e0e0e0"/>
<rect x="1200" y="734.40" width="41.3" height="2.16" fill="#000"/>
<rect x="1193" y="734.60" width="7" height="1.50" fill="#e0e0e0"/>
<rect x="1200" y="737.40" width="7.7" height="2.16" fill="#000"/>
<rect x="1193" y="737.60" width="7" height="1.50" fill="#e0e0e0"/>
<rect x="1200" y="740.40" width="59.8" height="2.16" fill="#000"/>
<rect x="1193" y="740.60" width="7" height="1.50" fill="#e0e0e0"/>
<rect x="1200" y="743.40" width="10.1" height="2.16" fill="#000"/>
<rect x="1193" y="743.60" width="7" height="1.50" fill="#e0e0e0"/>
<rect x="1200" y="746.40" width="20.8" height="2.16" fill="#000"/>
<rect x="1193" y="746.60" width="7" height="1.50" fill="#e0e0e0"/>
<rect x="1200" y="749.40" width="32.1" height="2.16" fill="#000"/>
<rect x="1193" y="749.60" width="7" height="1.50" fill="#e0e0e0"/>
<rect x="1200" y="752.40" width="28.6" height="2.16" fill="#000"/>
<rect x="1193" y="752.60" width="7" height="1.50" fill="#e0e0e0"/>
<rect x="1200" y="755.40" width="19.8" height="2.16" fill="#000"/>
<rect x="1193" y="755.60" width="7" height="1.50" fill="#e0e0e0"/>
<rect x="1200" y="758.40" width="13.8" height="2.16" fill="#000"/>
<rect x="1193" y="758.60" width="7" height="1.50" fill="#e0e0e0"/>
<rect x="1200" y="761.40" width="34.9" height="2.16" fill="#000"/>
<rect x="1193" y="761.60" width="7" height="1.50" fill="#e0e0e0"/>
<rect x="1200" y="764.40" width="38.2" height="2.16" fill="#000"/>
<rect x="1193" y="764.60" width="7" height="1.50" fill="#e0e0e0"/>
<rect x="1200" y="767.40" width="18.7" height="2.16" fill="#000"/>
<rect x="1193" y="767.60" width="7" height="1.50" fill="#e0e0e0"/>
<rect x="1200" y="770.40" width="28.5" height="2.16" fill="#000"/>
<rect x="1193" y="770.60" width="7" height="1.50" fill="#e0e0e0"/>
<rect x="1200" y="773.40" width="42.3" height="2.16" fill="#000"/>
<rect x="1193" y="773.60" width="7" height="1.50" fill="#e0e0e0"/>
<rect x="1200" y="776.40" width="13.3" height="2.16" fill="#000"/>
<rect x="1193" y="776.60" width="7" height="1.50" fill="#e0e0e0"/>
<rect x="1200" y="779.40" width="16.1" height="2.16" fill="#000"/>
<rect x="1193" y="779.60" width="7" height="1.50" fill="#e0e0e0"/>
<rect x="1200" y="782.40" width="6.0" height="2.16" fill="#000"/>
<rect x="1193" y="782.60" width="7" height="1.50" fill="#e0e0e0"/>
<rect x="1200" y="785.40" width="26.2" height="2.16" fill="#000"/>
<rect x="1193" y="785.60" width="7" height="1.50" fill="#e0e0e0"/>
<rect x="1200" y="788.40" width="26.9" height="2.16" fill="#000"/>
<rect x="1193" y="788.60" width="7" height="1.50" fill="#e0e0e0"/>
<rect x="1200" y="791.40" width="21.0" height="2.16" fill="#000"/>
<rect x="1193" y="791.60" width="7" height="1.50" fill="#e0e0e0"/>
<rect x="1200" y="794.40" width="22.3" height="2.16" fill="#000"/>
<rect x="1193" y="794.60" width="7" height="1.50" fill="#e0e0e0"/>
<rect x="1200" y="797.40" width="37.4" height="2.16" fill="#000"/>
<rect x="1193" y="797.60" width="7" height="1.50" fill="#e0e0e0"/>
<rect x="1200" y="800.40" width="9.2" height="2.16" fill="#000"/>
<rect x="1193" y="800.60" width="7" height="1.50" fill="#e0e0e0"/>
<rect x="1200" y="803.40" width="35.5" height="2.16" fill="#000"/>
<rect x="1193" y="803.60" width="7" height="1.50" fill="#e0e0e0"/>
<rect x="1200" y="806.40" width="10.6" height="2.16" fill="#000"/>
<rect x="1193" y="806.60" width="7" height="1.50" fill="#e0e0e0"/>
<rect x="1200" y="809.40" width="40.4" height="2.16" fill="#000"/>
<rect x="1193" y="809.60" width="7" height="1.50" fill="#e0e0e0"/>
<rect x="1200" y="812.40" width="40.8" height="2.16" fill="#000"/>
<rect x="1193" y="812.60" width="7" height="1.50" fill="#e0e0e0"/>
<rect x="1200" y="815.40" width="27.0" height="2.16" fill="#000"/>
<rect x="1193" y="815.60" width="7" height="1.50" fill="#e0e0e0"/>
<rect x="1200" y="818.40" width="63.3" height="2.16" fill="#000"/>
<rect x="1193" y="818.60" width="7" height="1.50" fill="#e0e0e0"/>
<rect x="1200" y="821.40" width="12.5" height="2.16" fill="#000"/>
<rect x="1193" y="821.60" width="7" height="1.50" fill="#e0e0e0"/>
<rect x="1200" y="824.40" width="13.3" height="2.16" fill="#000"/>
<rect x="1193" y="824.60" width="7" height="1.50" fill="#e0e0e0"/>
<rect x="1200" y="827.40" width="26.7" height="2.16" fill="#000"/>
<rect x="1193" y="827.60" width="7" height="1.50" fill="#e0e0e0"/>
<rect x="1200" y="830.40" width="10.0" height="2.16" fill="#000"/>
<rect x="1193" y="830.60" width="7" height="1.50" fill="#e0e0e0"/>
<rect x="1200" y="833.40" width="5.8" height="2.16" fill="#000"/>
<rect x="1193" y="833.60" width="7" height="1.50" fill="#e0e0e0"/>
<rect x="1200" y="836.40" width="25.3" height="2.16" fill="#000"/>
<rect x="1193" y="836.60" width="7" height="1.50" fill="#e0e0e0"/>
<rect x="1200" y="839.40" width="27.4" height="2.16" fill="#000"/>
<rect x="1193" y="839.60" width="7" height="1.50" fill="#e0e0e0"/>
<rect x="1200" y="842.40" width="39.5" height="2.16" fill="#000"/>
<rect x="1193" y="842.60" width="7" height="1.50" fill="#e0e0e0"/>
<rect x="1200" y="845.40" width="3.7" height="2.16" fill="#000"/>
<rect x="1193" y="845.60" width="7" height="1.50" fill="#e0e0e0"/>
<rect x="1200" y="848.40" width="20.7" height="2.16" fill="#000"/>
<rect x="1193" y="848.60" width="7" height="1.50" fill="#e0e0e0"/>
<rect x="1200" y="851.40" width="10.0" height="2.16" fill="#000"/>
<rect x="1193" y="851.60" width="7" height="1.50" fill="#e0e0e0"/>
<rect x="1200" y="854.40" width="25.8" height="2.16" fill="#000"/>
<rect x="1193" y="854.60" width="7" height="1.50" fill="#e0e0e0"/>
<rect x="1200" y="857.40" width="17.4" height="2.16" fill="#000"/>
<rect x="1193" y="857.60" width="7" height="1.50" fill="#e0e0e0"/>
<rect x="1200" y="860.40" width="42.0" height="2.16" fill="#000"/>
<rect x="1193" y="860.60" width="7" height="1.50" fill="#e0e0e0"/>
<rect x="1200" y="863.40" width="30.5" height="2.16" fill="#000"/>
<rect x="1193" y="863.60" width="7" height="1.50" fill="#e0e0e0"/>
<rect x="1200" y="866.40" width="43.1" height="2.16" fill="#000"/>
<rect x="1193" y="866.60" width="7" height="1.50" fill="#e0e0e0"/>
<rect x="1200" y="869.40" width="39.2" height="2.16" fill="#000"/>
<rect x="1193" y="869.60" width="7" height="1.50" fill="#e0e0e0"/>
<rect x="1200" y="872.40" width="56.3" height="2.16" fill="#000"/>
<rect x="1193" y="872.60" width="7" height="1.50" fill="#e0e0e0"/>
<rect x="1200" y="875.40" width="22.2" height="2.16" fill="#000"/>
<rect x="1193" y="875.60" width="7" height="1.50" fill="#e0e0e0"/>
<rect x="1200" y="878.40" width="15.7" height="2.16" fill="#000"/>
<rect x="1193" y="878.60" width="7" height="1.50" fill="#e0e0e0"/>
<rect x="1200" y="881.40" width="6.0" height="2.16" fill="#000"/>
<rect x="1193" y="881.60" width="7" height="1.50" fill="#e0e0e0"/>
<rect x="1200" y="884.40" width="32.3" height="2.16" fill="#000"/>
<rect x="1193" y="884.60" width="7" height="1.50" fill="#e0e0e0"/>
<rect x="1200" y="887.40" width="32.3" height="2.16" fill="#000"/>
<rect x="1193" y="887.60" width="7" height="1.50" fill="#e0e0e0"/>
<rect x="1200" y="890.40" width="34.5" height="2.16" fill="#000"/>
<rect x="1193" y="890.60" width="7" height="1.50" fill="#e0e0e0"/>
<rect x="1200" y="893.40" width="17.0" height="2.16" fill="#000"/>
<rect x="1193" y="893.60" width="7" height="1.50" fill="#e0e0e0"/>
<rect x="1200" y="896.40" width="38.8" height="2.16" fill="#000"/>
<rect x="1193" y="896.60" width="7" height="1.50" fill="#e0e0e0"/>
<rect x="1200" y="899.40" width="19.6" height="2.16" fill="#000"/>
<rect x="1193" y="899.60" width="7" height="1.50" fill="#e0e0e0"/>
<rect x="1200" y="902.40" width="37.3" height="2.16" fill="#000"/>
<rect x="1193" y="902.60" width="7" height="1.50" fill="#e0e0e0"/>
<rect x="1200" y="905.40" width="27.9" height="2.16" fill="#000"/>
<rect x="1193" y="905.60" width="7" height="1.50" fill="#e0e0e0"/>
<rect x="1200" y="908.40" width="26.2" height="2.16" fill="#000"/>
<rect x="1193" y="908.60" width="7" height="1.50" fill="#e0e0e0"/>
<rect x="1200" y="911.40" width="6.2" height="2.16" fill="#000"/>
<rect x="1193" y="911.60" width="7" height="1.50" fill="#e0e0e0"/>
<rect x="1200" y="914.40" width="42.5" height="2.16" fill="#000"/>
<rect x="1193" y="914.60" width="7" height="1.50" fill="#e0e0e0"/>
<rect x="1200" y="917.40" width="32.0" height="2.16" fill="#000"/>
<rect x="1193" y="917.60" width="7" height="1.50" fill="#e0e0e0"/>
<rect x="1200" y="920.40" width="32.2" height="2.16" fill="#000"/>
<rect x="1193" y="920.60" width="7" height="1.50" fill="#e0e0e0"/>
<rect x="1200" y="923.40" width="20.5" height="2.16" fill="#000"/>
<rect x="1193" y="923.60" width="7" height="1.50" fill="#e0e0e0"/>
<rect x="1200" y="926.40" width="6.4" height="2.16" fill="#000"/>
<rect x="1193" y="926.60" width="7" height="1.50" fill="#e0e0e0"/>
<rect x="1200" y="929.40" width="4.2" height="2.16" fill="#000"/>
<rect x="1193" y="929.60" width="7" height="1.50" fill="#e0e0e0"/>
<rect x="1200" y="932.40" width="10.1" height="2.16" fill="#000"/>
<rect x="1193" y="932.60" width="7" height="1.50" fill="#e0e0e0"/>
<rect x="1200" y="935.40" width="15.7" height="2.16" fill="#000"/>
<rect x="1193" y="935.60" width="7" height="1.50" fill="#e0e0e0"/>
<rect x="1200" y="938.40" width="15.7" height="2.16" fill="#000"/>
<rect x="1193" y="938.60" width="7" height="1.50" fill="#e0e0e0"/>
<rect x="1200" y="941.40" width="21.4" height="2.16" fill="#000"/>
<rect x="1193" y="941.60" width="7" height="1.50" fill="#e0e0e0"/>
<rect x="1200" y="944.40" width="24.2" height="2.16" fill="#000"/>
<rect x="1193" y="944.60" width="7" height="1.50" fill="#e0e0e0"/>
<rect x="1200" y="947.40" width="18.6" height="2.16" fill="#000"/>
<rect x="1193" y="947.60" width="7" height="1.50" fill="#e0e0e0"/>
<rect x="1200" y="950.40" width="30.3" height="2.16" fill="#000"/>
<rect x="1193" y="950.60" width="7" height="1.50" fill="#e0e0e0"/>
<rect x="1200" y="953.40" width="29.2" height="2.16" fill="#000"/>
<rect x="1193" y="953.60" width="7" height="1.50" fill="#e0e0e0"/>
<rect x="1200" y="956.40" width="31.1" height="2.16" fill="#000"/>
<rect x="1193" y="956.60" width="7" height="1.50" fill="#e0e0e0"/>
<rect x="1200" y="959.40" width="36.6" height="2.16" fill="#000"/>
<rect x="1193" y="959.60" width="7" height="1.50" fill="#e0e0e0"/>
<rect x="1200" y="962.40" width="33.0" height="2.16" fill="#000"/>
<rect x="1193" y="962.60" width="7" height="1.50" fill="#e0e0e0"/>
<rect x="1200" y="965.40" width="36.4" height="2.16" fill="#000"/>
<rect x="1193" y="965.60" width="7" height="1.50" fill="#e0e0e0"/>
<rect x="1200" y="968.40" width="42.8" height="2.16" fill="#000"/>
<rect x="1193" y="968.60" width="7" height="1.50" fill="#e0e0e0"/>
<rect x="1200" y="971.40" width="51.7" height="2.16" fill="#000"/>
<rect x="1193" y="971.60" width="7" height="1.50" fill="#e0e0e0"/>
<line x1="1276.3" x2="1276.3" y1="644" y2="974" stroke="#9a9a9a" stroke-width="2"/>
<line x1="1352.7" x2="1352.7" y1="644" y2="974" stroke="#ff1010" stroke-width="2.5"/>
<line x1="1245.8" x2="1245.8" y1="644" y2="974" stroke="#ffff00" stroke-width="2"/>
<line x1="1215.3" x2="1215.3" y1="644" y2="974" stroke="#008000" stroke-width="2"/>
<text x="1085" y="649.3" text-anchor="end" class="ml">9M</text>
<text x="1192" y="652.3" text-anchor="end" class="ml">9L</text>
<text x="1085" y="655.3" text-anchor="end" class="ml">9K</text>
<text x="1192" y="658.3" text-anchor="end" class="ml">9J</text>
<text x="1085" y="661.3" text-anchor="end" class="ml">9I</text>
<text x="1192" y="664.3" text-anchor="end" class="ml">9H</text>
<text x="1085" y="667.3" text-anchor="end" class="ml">9G</text>
<text x="1192" y="670.3" text-anchor="end" class="ml">9F</text>
<text x="1085" y="673.3" text-anchor="end" class="ml">9E</text>
<text x="1192" y="676.3" text-anchor="end" class="ml">9D</text>
<text x="1085" y="679.3" text-anchor="end" class="ml">9C</text>
<text x="1192" y="682.3" text-anchor="end" class="ml">9B</text>
<text x="1085" y="685.3" text-anchor="end" class="ml">8M</text>
<text x="1192" y="688.3" text-anchor="end" class="ml">8L</text>
<text x="1085" y="691.3" text-anchor="end" class="ml">8K</text>
<text x="1192" y="694.3" text-anchor="end" class="ml">8J</text>
<text x="1085" y="697.3" text-anchor="end" class="ml">8I</text>
<text x="1192" y="700.3" text-anchor="end" class="ml">8H</text>
<text x="1085" y="703.3" text-anchor="end" class="ml">8G</text>
<text x="1192" y="706.3" text-anchor="end" class="ml">8F</text>
<text x="1085" y="709.3" text-anchor="end" class="ml">8E</text>
<text x="1192" y="712.3" text-anchor="end" class="ml">8D</text>
<text x="1085" y="715.3" text-anchor="end" class="ml">8C</text>
<text x="1192" y="718.3" text-anchor="end" class="ml">8B</text>
<text x="1085" y="721.3" text-anchor="end" class="ml">7M</text>
<text x="1192" y="724.3" text-anchor="end" class="ml">7L</text>
<text x="1085" y="727.3" text-anchor="end" class="ml">7K</text>
<text x="1192" y="730.3" text-anchor="end" class="ml">7J</text>
<text x="1085" y="733.3" text-anchor="end" class="ml">7I</text>
<text x="1192" y="736.3" text-anchor="end" class="ml">7H</text>
<text x="1085" y="739.3" text-anchor="end" class="ml">7G</text>
<text x="1192" y="742.3" text-anchor="end" class="ml">7F</text>
<text x="1085" y="745.3" text-anchor="end" class="ml">7E</text>
<text x="1192" y="748.3" text-anchor="end" class="ml">7D</text>
<text x="1085" y="751.3" text-anchor="end" class="ml">7C</text>
<text x="1192" y="754.3" text-anchor="end" class="ml">7B</text>
<text x="1085" y="757.3" text-anchor="end" class="ml">6M</text>
<text x="1192" y="760.3" text-anchor="end" class="ml">6L</text>
<text x="1085" y="763.3" text-anchor="end" class="ml">6K</text>
<text x="1192" y="766.3" text-anchor="end" class="ml">6J</text>
<text x="1085" y="769.3" text-anchor="end" class="ml">6I</text>
<text x="1192" y="772.3" text-anchor="end" class="ml">6H</text>
<text x="1085" y="775.3" text-anchor="end" class="ml">6G</text>
<text x="1192" y="778.3" text-anchor="end" class="ml">6F</text>
<text x="1085" y="781.3" text-anchor="end" class="ml">6E</text>
<text x="1192" y="784.3" text-anchor="end" class="ml">6D</text>
<text x="1085" y="787.3" text-anchor="end" class="ml">6C</text>
<text x="1192" y="790.3" text-anchor="end" class="ml">6B</text>
<text x="1085" y="793.3" text-anchor="end" class="ml">5M</text>
<text x="1192" y="796.3" text-anchor="end" class="ml">5L</text>
<text x="1085" y="799.3" text-anchor="end" class="ml">5K</text>
<text x="1192" y="802.3" text-anchor="end" class="ml">5J</text>
<text x="1085" y="805.3" text-anchor="end" class="ml">5I</text>
<text x="1192" y="808.3" text-anchor="end" class="ml">5H</text>
<text x="1085" y="811.3" text-anchor="end" class="ml">5G</text>
<text x="1192" y="814.3" text-anchor="end" class="ml">5F</text>
<text x="1085" y="817.3" text-anchor="end" class="ml">5E</text>
<text x="1192" y="820.3" text-anchor="end" class="ml">5D</text>
<text x="1085" y="823.3" text-anchor="end" class="ml">5C</text>
<text x="1192" y="826.3" text-anchor="end" class="ml">5B</text>
<text x="1085" y="829.3" text-anchor="end" class="ml">4M</text>
<text x="1192" y="832.3" text-anchor="end" class="ml">4L</text>
<text x="1085" y="835.3" text-anchor="end" class="ml">4K</text>
<text x="1192" y="838.3" text-anchor="end" class="ml">4J</text>
<text x="1085" y="841.3" text-anchor="end" class="ml">4I</text>
<text x="1192" y="844.3" text-anchor="end" class="ml">4H</text>
<text x="1085" y="847.3" text-anchor="end" class="ml">4G</text>
<text x="1192" y="850.3" text-anchor="end" class="ml">4F</text>
<text x="1085" y="853.3" text-anchor="end" class="ml">4E</text>
<text x="1192" y="856.3" text-anchor="end" class="ml">4D</text>
<text x="1085" y="859.3" text-anchor="end" class="ml">4C</text>
<text x="1192" y="862.3" text-anchor="end" class="ml">4B</text>
<text x="1085" y="865.3" text-anchor="end" class="ml">3M</text>
<text x="1192" y="868.3" text-anchor="end" class="ml">3L</text>
<text x="1085" y="871.3" text-anchor="end" class="ml">3K</text>
<text x="1192" y="874.3" text-anchor="end" class="ml">3J</text>
<text x="1085" y="877.3" text-anchor="end" class="ml">3I</text>
<text x="1192" y="880.3" text-anchor="end" class="ml">3H</text>
<text x="1085" y="883.3" text-anchor="end" class="ml">Cyan</text>
<text x="1192" y="886.3" text-anchor="end" class="ml">Magenta</text>
<text x="1085" y="889.3" text-anchor="end" class="ml">Yellow</text>
<text x="1192" y="892.3" text-anchor="end" class="ml">Red</text>
<text x="1085" y="895.3" text-anchor="end" class="ml">Green</text>
<text x="1192" y="898.3" text-anchor="end" class="ml">Blue</text>
<text x="1085" y="901.3" text-anchor="end" class="ml">Orange Yellow</text>
<text x="1192" y="904.3" text-anchor="end" class="ml">Yellow Green</text>
<text x="1085" y="907.3" text-anchor="end" class="ml">Purple</text>
<text x="1192" y="910.3" text-anchor="end" class="ml">Moderate Red</text>
<text x="1085" y="913.3" text-anchor="end" class="ml">Purplish Blue</text>
<text x="1192" y="916.3" text-anchor="end" class="ml">Orange</text>
<text x="1085" y="919.3" text-anchor="end" class="ml">Bluish Green</text>
<text x="1192" y="922.3" text-anchor="end" class="ml">Blue Flower</text>
<text x="1085" y="925.3" text-anchor="end" class="ml">Foliage</text>
<text x="1192" y="928.3" text-anchor="end" class="ml">Blue Sky</text>
<text x="1085" y="931.3" text-anchor="end" class="ml">Light Skin</text>
<text x="1192" y="934.3" text-anchor="end" class="ml">Dark Skin</text>
<text x="1085" y="937.3" text-anchor="end" class="ml">6C</text>
<text x="1192" y="940.3" text-anchor="end" class="ml">9B</text>
<text x="1085" y="943.3" text-anchor="end" class="ml">6E</text>
<text x="1192" y="946.3" text-anchor="end" class="ml">7B</text>
<text x="1085" y="949.3" text-anchor="end" class="ml">5H</text>
<text x="1192" y="952.3" text-anchor="end" class="ml">6N</text>
<text x="1085" y="955.3" text-anchor="end" class="ml">Gray 80</text>
<text x="1192" y="958.3" text-anchor="end" class="ml">6B</text>
<text x="1085" y="961.3" text-anchor="end" class="ml">Gray 80</text>
<text x="1192" y="964.3" text-anchor="end" class="ml">5N</text>
<text x="1085" y="967.3" text-anchor="end" class="ml">Gray 80</text>
<text x="1192" y="970.3" text-anchor="end" class="ml">4N</text>
<text x="1085" y="973.3" text-anchor="end" class="ml">Gray 80</text>
<text x="1192" y="976.3" text-anchor="end" class="ml">White</text>
<line x1="1200.0" x2="1200.0" y1="974" y2="980" stroke="#d8d8d8" stroke-width="2"/>
<text x="1200.0" y="999" text-anchor="middle" class="ax">0</text>
<line x1="1276.3" x2="1276.3" y1="974" y2="980" stroke="#d8d8d8" stroke-width="2"/>
<text x="1276.3" y="999" text-anchor="middle" class="ax">5</text>
<line x1="1352.7" x2="1352.7" y1="974" y2="980" stroke="#d8d8d8" stroke-width="2"/>
<text x="1352.7" y="999" text-anchor="middle" class="ax">10</text>
<line x1="1429.0" x2="1429.0" y1="974" y2="980" stroke="#d8d8d8" stroke-width="2"/>
<text x="1429.0" y="999" text-anchor="middle" class="ax">15</text>
<text x="1204" y="638" text-anchor="middle" class="tt">DeltaE 2000</text>
<text x="1069" y="641" class="tw">Avg: 1.9</text>
<text x="1314" y="641" class="tw">Max: 4.2</text><rect x="12" y="592.5" width="1891" height="2" fill="url(#sep)"/><rect x="1463" y="209" width="434" height="371" fill="#222" stroke="#9a9a9a" stroke-width="2"/>
<text x="1680" y="203" text-anchor="middle" class="tt">CIE 1931 xy</text>
<line x1="1557.0" y1="578.7" x2="1842.3" y2="464.9" stroke="#3a1838" stroke-width="1"/><rect x="1463" y="634" width="434" height="371" fill="#222" stroke="#9a9a9a" stroke-width="2"/>
<text x="1680" y="628" text-anchor="middle" class="tt">CIE 1931 xy</text>
<line x1="1557.0" y1="1003.7" x2="1842.3" y2="889.9" stroke="#3a1838" stroke-width="1"/></svg>
<div class="abs cief" style="left:1462px;top:209px;width:380px;height:372px;clip-path:path('M91.0 368.2 L91.0 368.2 L91.0 368.2 L90.9 368.2 L90.9 368.3 L90.8 368.3 L90.8 368.3 L90.7 368.3 L90.6 368.3 L90.5 368.3 L90.4 368.3 L90.3 368.3 L90.2 368.3 L90.1 368.3 L89.9 368.2 L89.8 368.2 L89.6 368.2 L89.5 368.1 L89.4 368.0 L89.2 368.0 L89.1 367.9 L88.9 367.8 L88.8 367.6 L88.6 367.5 L88.4 367.4 L88.1 367.2 L87.9 367.0 L87.6 366.8 L87.4 366.6 L87.1 366.4 L86.8 366.2 L86.4 365.9 L86.0 365.6 L85.6 365.3 L85.2 365.0 L84.8 364.7 L84.3 364.3 L83.8 364.0 L83.2 363.6 L82.6 363.1 L82.0 362.6 L81.3 362.1 L80.5 361.4 L79.7 360.8 L78.8 360.1 L77.9 359.4 L77.0 358.7 L76.2 358.0 L75.5 357.4 L74.9 356.8 L74.3 356.3 L73.8 355.8 L73.3 355.3 L72.8 354.8 L72.3 354.2 L71.7 353.6 L71.1 352.9 L70.5 352.1 L69.8 351.3 L69.1 350.4 L68.4 349.5 L67.6 348.5 L66.9 347.4 L66.1 346.2 L65.2 345.0 L64.4 343.7 L63.5 342.3 L62.6 340.9 L61.7 339.4 L60.8 337.8 L59.8 336.1 L58.8 334.2 L57.8 332.3 L56.7 330.2 L55.6 328.0 L54.5 325.7 L53.3 323.3 L52.1 320.7 L50.9 318.0 L49.6 315.1 L48.3 312.1 L47.0 308.9 L45.6 305.6 L44.1 302.1 L42.6 298.5 L41.1 294.7 L39.6 290.7 L38.1 286.6 L36.6 282.2 L35.2 277.7 L33.7 272.9 L32.1 268.0 L30.6 262.9 L29.1 257.6 L27.6 252.2 L26.1 246.6 L24.6 240.8 L23.2 234.9 L21.7 228.7 L20.2 222.3 L18.7 215.8 L17.3 209.2 L15.9 202.5 L14.6 195.8 L13.3 189.1 L12.1 182.3 L11.0 175.4 L9.9 168.5 L8.8 161.5 L7.8 154.4 L6.9 147.5 L6.1 140.6 L5.4 133.9 L4.8 127.2 L4.3 120.6 L3.9 114.0 L3.5 107.5 L3.3 101.1 L3.1 94.8 L3.1 88.7 L3.2 82.7 L3.5 77.0 L3.8 71.3 L4.3 65.7 L4.8 60.3 L5.5 55.1 L6.4 50.1 L7.3 45.3 L8.4 40.8 L9.6 36.6 L10.9 32.6 L12.4 28.8 L14.0 25.2 L15.7 21.9 L17.5 18.9 L19.4 16.1 L21.3 13.7 L23.3 11.6 L25.4 9.8 L27.6 8.2 L29.9 7.0 L32.3 6.0 L34.7 5.2 L37.1 4.6 L39.5 4.1 L42.0 3.9 L44.5 3.9 L47.1 4.2 L49.7 4.6 L52.3 5.2 L54.9 5.9 L57.5 6.7 L60.1 7.5 L62.7 8.3 L65.4 9.2 L68.0 10.3 L70.6 11.5 L73.3 12.7 L75.9 13.9 L78.5 15.1 L81.0 16.4 L83.6 17.6 L86.1 18.9 L88.5 20.2 L90.9 21.6 L93.2 23.1 L95.6 24.5 L97.9 26.0 L100.2 27.5 L102.5 29.1 L104.8 30.6 L107.1 32.1 L109.4 33.7 L111.6 35.3 L113.9 36.9 L116.2 38.5 L118.5 40.1 L120.8 41.8 L123.1 43.4 L125.3 45.1 L127.6 46.8 L129.9 48.5 L132.2 50.2 L134.5 51.9 L136.8 53.6 L139.1 55.4 L141.4 57.1 L143.7 58.9 L146.0 60.6 L148.2 62.4 L150.5 64.2 L152.8 66.0 L155.1 67.8 L157.4 69.6 L159.7 71.4 L162.0 73.3 L164.3 75.1 L166.6 76.9 L168.9 78.8 L171.2 80.6 L173.5 82.5 L175.9 84.4 L178.2 86.2 L180.5 88.1 L182.8 90.0 L185.1 91.9 L187.4 93.8 L189.8 95.6 L192.1 97.5 L194.4 99.4 L196.7 101.3 L199.0 103.2 L201.3 105.1 L203.7 107.0 L206.0 108.9 L208.3 110.8 L210.6 112.8 L212.9 114.7 L215.2 116.6 L217.5 118.5 L219.8 120.4 L222.1 122.3 L224.4 124.2 L226.7 126.1 L229.0 127.9 L231.3 129.8 L233.6 131.7 L235.8 133.6 L238.1 135.5 L240.4 137.4 L242.6 139.2 L244.9 141.1 L247.1 142.9 L249.3 144.8 L251.5 146.6 L253.7 148.5 L255.9 150.3 L258.1 152.1 L260.3 153.9 L262.5 155.8 L264.7 157.5 L266.8 159.3 L268.9 161.1 L271.1 162.9 L273.2 164.6 L275.3 166.4 L277.4 168.1 L279.4 169.8 L281.5 171.5 L283.5 173.2 L285.5 174.9 L287.6 176.6 L289.6 178.2 L291.5 179.9 L293.5 181.5 L295.4 183.1 L297.3 184.7 L299.2 186.2 L301.1 187.8 L302.9 189.3 L304.8 190.8 L306.6 192.3 L308.3 193.8 L310.1 195.3 L311.8 196.7 L313.4 198.1 L315.1 199.4 L316.7 200.8 L318.3 202.1 L319.8 203.4 L321.3 204.6 L322.8 205.9 L324.3 207.1 L325.8 208.3 L327.2 209.5 L328.7 210.7 L330.1 211.9 L331.4 213.0 L332.8 214.1 L334.1 215.2 L335.4 216.3 L336.6 217.3 L337.8 218.3 L339.0 219.3 L340.2 220.3 L341.3 221.2 L342.4 222.1 L343.5 223.0 L344.5 223.9 L345.6 224.7 L346.6 225.5 L347.5 226.4 L348.5 227.1 L349.4 227.9 L350.3 228.6 L351.1 229.4 L352.0 230.1 L352.8 230.8 L353.6 231.4 L354.4 232.1 L355.1 232.7 L355.9 233.3 L356.6 233.9 L357.3 234.5 L357.9 235.0 L358.6 235.6 L359.2 236.1 L359.8 236.6 L360.4 237.1 L361.0 237.6 L361.6 238.0 L362.1 238.5 L362.7 238.9 L363.2 239.4 L363.6 239.8 L364.1 240.1 L364.5 240.5 L365.0 240.8 L365.4 241.2 L365.9 241.6 L366.5 242.1 L367.1 242.7 L367.8 243.2 L368.6 243.9 L369.4 244.5 L370.2 245.2 L370.9 245.8 L371.6 246.4 L372.3 246.9 L372.8 247.4 L373.3 247.8 L373.8 248.2 L374.3 248.6 L374.7 248.9 L375.1 249.3 L375.5 249.6 L375.9 249.9 L376.3 250.3 L376.8 250.7 L377.2 251.0 L377.6 251.4 L378.0 251.7 L378.4 252.0 L378.7 252.3 L379.0 252.5 L379.3 252.8 L379.6 253.0 L379.8 253.1 L379.9 253.3 L380.1 253.4 L380.2 253.5 L380.4 253.6 L380.5 253.7 Z')"><i class="o2"></i><i class="o4"></i><i class="o6"></i><i class="o8"></i><i class="o10"></i><i class="o12"></i><i class="o14"></i><i class="o16"></i><i class="o18"></i><i class="o20"></i><i class="o22"></i><i class="o24"></i><i class="o26"></i><i class="o28"></i><i class="o30"></i><i class="o32"></i><i class="o34"></i><i class="o36"></i><i class="o38"></i><i class="o40"></i><i class="o42"></i><i class="o44"></i><i class="o46"></i><i class="o48"></i><i class="o50"></i><i class="o52"></i><i class="o54"></i><i class="o56"></i><i class="o58"></i><i class="o60"></i><i class="o62"></i><i class="o64"></i><i class="o66"></i><i class="o68"></i><i class="o70"></i><i class="o72"></i><i class="o74"></i><i class="o76"></i><i class="o78"></i><i class="o80"></i><i class="o82"></i><i class="o84"></i><i class="o86"></i><i class="o88"></i><i class="o90"></i><i class="o92"></i><i class="o94"></i><i class="o96"></i><i class="o98"></i><i class="o100"></i><i class="o102"></i><i class="o104"></i><i class="o106"></i><i class="o108"></i><i class="o110"></i><i class="o112"></i><i class="o114"></i><i class="o116"></i><i class="o118"></i><i class="o120"></i><i class="o122"></i><i class="o124"></i><i class="o126"></i><i class="o128"></i><i class="o130"></i><i class="o132"></i><i class="o134"></i><i class="o136"></i><i class="o138"></i><i class="o140"></i><i class="o142"></i><i class="o144"></i><i class="o146"></i><i class="o148"></i><i class="o150"></i><i class="o152"></i><i class="o154"></i><i class="o156"></i><i class="o158"></i><i class="o160"></i><i class="o162"></i><i class="o164"></i><i class="o166"></i><i class="o168"></i><i class="o170"></i><i class="o172"></i><i class="o174"></i><i class="o176"></i><i class="o178"></i><i class="o180"></i><i class="o182"></i><i class="o184"></i><i class="o186"></i><i class="o188"></i><i class="o190"></i><i class="o192"></i><i class="o194"></i><i class="o196"></i><i class="o198"></i><i class="o200"></i><i class="o202"></i><i class="o204"></i><i class="o206"></i><i class="o208"></i><i class="o210"></i><i class="o212"></i><i class="o214"></i><i class="o216"></i><i class="o218"></i><i class="o220"></i><i class="o222"></i><i class="o224"></i><i class="o226"></i><i class="o228"></i><i class="o230"></i><i class="o232"></i><i class="o234"></i><i class="o236"></i><i class="o238"></i><i class="o240"></i><i class="o242"></i><i class="o244"></i><i class="o246"></i><i class="o248"></i><i class="o250"></i><i class="o252"></i><i class="o254"></i><i class="o256"></i><i class="o258"></i><i class="o260"></i><i class="o262"></i><i class="o264"></i><i class="o266"></i><i class="o268"></i><i class="o270"></i><i class="o272"></i><i class="o274"></i><i class="o276"></i><i class="o278"></i><i class="o280"></i><i class="o282"></i><i class="o284"></i><i class="o286"></i><i class="o288"></i><i class="o290"></i><i class="o292"></i><i class="o294"></i><i class="o296"></i><i class="o298"></i><i class="o300"></i><i class="o302"></i><i class="o304"></i><i class="o306"></i><i class="o308"></i><i class="o310"></i><i class="o312"></i><i class="o314"></i><i class="o316"></i><i class="o318"></i><i class="o320"></i><i class="o322"></i><i class="o324"></i><i class="o326"></i><i class="o328"></i><i class="o330"></i><i class="o332"></i><i class="o334"></i><i class="o336"></i><i class="o338"></i><i class="o340"></i><i class="o342"></i><i class="o344"></i><i class="o346"></i><i class="o348"></i><i class="o350"></i><i class="o352"></i><i class="o354"></i><i class="o356"></i><i class="o358"></i><i class="o360"></i><i class="o362"></i><i class="o364"></i><i class="o366"></i><i class="o368"></i></div><div class="abs cief" style="left:1462px;top:209px;width:380px;height:372px;clip-path:polygon(88.9px 20.3px,366.5px 242.1px,68.8px 350.2px)"><i class="t18"></i><i class="t20"></i><i class="t22"></i><i class="t24"></i><i class="t26"></i><i class="t28"></i><i class="t30"></i><i class="t32"></i><i class="t34"></i><i class="t36"></i><i class="t38"></i><i class="t40"></i><i class="t42"></i><i class="t44"></i><i class="t46"></i><i class="t48"></i><i class="t50"></i><i class="t52"></i><i class="t54"></i><i class="t56"></i><i class="t58"></i><i class="t60"></i><i class="t62"></i><i class="t64"></i><i class="t66"></i><i class="t68"></i><i class="t70"></i><i class="t72"></i><i class="t74"></i><i class="t76"></i><i class="t78"></i><i class="t80"></i><i class="t82"></i><i class="t84"></i><i class="t86"></i><i class="t88"></i><i class="t90"></i><i class="t92"></i><i class="t94"></i><i class="t96"></i><i class="t98"></i><i class="t100"></i><i class="t102"></i><i class="t104"></i><i class="t106"></i><i class="t108"></i><i class="t110"></i><i class="t112"></i><i class="t114"></i><i class="t116"></i><i class="t118"></i><i class="t120"></i><i class="t122"></i><i class="t124"></i><i class="t126"></i><i class="t128"></i><i class="t130"></i><i class="t132"></i><i class="t134"></i><i class="t136"></i><i class="t138"></i><i class="t140"></i><i class="t142"></i><i class="t144"></i><i class="t146"></i><i class="t148"></i><i class="t150"></i><i class="t152"></i><i class="t154"></i><i class="t156"></i><i class="t158"></i><i class="t160"></i><i class="t162"></i><i class="t164"></i><i class="t166"></i><i class="t168"></i><i class="t170"></i><i class="t172"></i><i class="t174"></i><i class="t176"></i><i class="t178"></i><i class="t180"></i><i class="t182"></i><i class="t184"></i><i class="t186"></i><i class="t188"></i><i class="t190"></i><i class="t192"></i><i class="t194"></i><i class="t196"></i><i class="t198"></i><i class="t200"></i><i class="t202"></i><i class="t204"></i><i class="t206"></i><i class="t208"></i><i class="t210"></i><i class="t212"></i><i class="t214"></i><i class="t216"></i><i class="t218"></i><i class="t220"></i><i class="t222"></i><i class="t224"></i><i class="t226"></i><i class="t228"></i><i class="t230"></i><i class="t232"></i><i class="t234"></i><i class="t236"></i><i class="t238"></i><i class="t240"></i><i class="t242"></i><i class="t244"></i><i class="t246"></i><i class="t248"></i><i class="t250"></i><i class="t252"></i><i class="t254"></i><i class="t256"></i><i class="t258"></i><i class="t260"></i><i class="t262"></i><i class="t264"></i><i class="t266"></i><i class="t268"></i><i class="t270"></i><i class="t272"></i><i class="t274"></i><i class="t276"></i><i class="t278"></i><i class="t280"></i><i class="t282"></i><i class="t284"></i><i class="t286"></i><i class="t288"></i><i class="t290"></i><i class="t292"></i><i class="t294"></i><i class="t296"></i><i class="t298"></i><i class="t300"></i><i class="t302"></i><i class="t304"></i><i class="t306"></i><i class="t308"></i><i class="t310"></i><i class="t312"></i><i class="t314"></i><i class="t316"></i><i class="t318"></i><i class="t320"></i><i class="t322"></i><i class="t324"></i><i class="t326"></i><i class="t328"></i><i class="t330"></i><i class="t332"></i><i class="t334"></i><i class="t336"></i><i class="t338"></i><i class="t340"></i><i class="t342"></i><i class="t344"></i><i class="t346"></i><i class="t348"></i><i class="t350"></i></div>
<div class="abs cief" style="left:1462px;top:634px;width:380px;height:372px;clip-path:path('M91.0 368.2 L91.0 368.2 L91.0 368.2 L90.9 368.2 L90.9 368.3 L90.8 368.3 L90.8 368.3 L90.7 368.3 L90.6 368.3 L90.5 368.3 L90.4 368.3 L90.3 368.3 L90.2 368.3 L90.1 368.3 L89.9 368.2 L89.8 368.2 L89.6 368.2 L89.5 368.1 L89.4 368.0 L89.2 368.0 L89.1 367.9 L88.9 367.8 L88.8 367.6 L88.6 367.5 L88.4 367.4 L88.1 367.2 L87.9 367.0 L87.6 366.8 L87.4 366.6 L87.1 366.4 L86.8 366.2 L86.4 365.9 L86.0 365.6 L85.6 365.3 L85.2 365.0 L84.8 364.7 L84.3 364.3 L83.8 364.0 L83.2 363.6 L82.6 363.1 L82.0 362.6 L81.3 362.1 L80.5 361.4 L79.7 360.8 L78.8 360.1 L77.9 359.4 L77.0 358.7 L76.2 358.0 L75.5 357.4 L74.9 356.8 L74.3 356.3 L73.8 355.8 L73.3 355.3 L72.8 354.8 L72.3 354.2 L71.7 353.6 L71.1 352.9 L70.5 352.1 L69.8 351.3 L69.1 350.4 L68.4 349.5 L67.6 348.5 L66.9 347.4 L66.1 346.2 L65.2 345.0 L64.4 343.7 L63.5 342.3 L62.6 340.9 L61.7 339.4 L60.8 337.8 L59.8 336.1 L58.8 334.2 L57.8 332.3 L56.7 330.2 L55.6 328.0 L54.5 325.7 L53.3 323.3 L52.1 320.7 L50.9 318.0 L49.6 315.1 L48.3 312.1 L47.0 308.9 L45.6 305.6 L44.1 302.1 L42.6 298.5 L41.1 294.7 L39.6 290.7 L38.1 286.6 L36.6 282.2 L35.2 277.7 L33.7 272.9 L32.1 268.0 L30.6 262.9 L29.1 257.6 L27.6 252.2 L26.1 246.6 L24.6 240.8 L23.2 234.9 L21.7 228.7 L20.2 222.3 L18.7 215.8 L17.3 209.2 L15.9 202.5 L14.6 195.8 L13.3 189.1 L12.1 182.3 L11.0 175.4 L9.9 168.5 L8.8 161.5 L7.8 154.4 L6.9 147.5 L6.1 140.6 L5.4 133.9 L4.8 127.2 L4.3 120.6 L3.9 114.0 L3.5 107.5 L3.3 101.1 L3.1 94.8 L3.1 88.7 L3.2 82.7 L3.5 77.0 L3.8 71.3 L4.3 65.7 L4.8 60.3 L5.5 55.1 L6.4 50.1 L7.3 45.3 L8.4 40.8 L9.6 36.6 L10.9 32.6 L12.4 28.8 L14.0 25.2 L15.7 21.9 L17.5 18.9 L19.4 16.1 L21.3 13.7 L23.3 11.6 L25.4 9.8 L27.6 8.2 L29.9 7.0 L32.3 6.0 L34.7 5.2 L37.1 4.6 L39.5 4.1 L42.0 3.9 L44.5 3.9 L47.1 4.2 L49.7 4.6 L52.3 5.2 L54.9 5.9 L57.5 6.7 L60.1 7.5 L62.7 8.3 L65.4 9.2 L68.0 10.3 L70.6 11.5 L73.3 12.7 L75.9 13.9 L78.5 15.1 L81.0 16.4 L83.6 17.6 L86.1 18.9 L88.5 20.2 L90.9 21.6 L93.2 23.1 L95.6 24.5 L97.9 26.0 L100.2 27.5 L102.5 29.1 L104.8 30.6 L107.1 32.1 L109.4 33.7 L111.6 35.3 L113.9 36.9 L116.2 38.5 L118.5 40.1 L120.8 41.8 L123.1 43.4 L125.3 45.1 L127.6 46.8 L129.9 48.5 L132.2 50.2 L134.5 51.9 L136.8 53.6 L139.1 55.4 L141.4 57.1 L143.7 58.9 L146.0 60.6 L148.2 62.4 L150.5 64.2 L152.8 66.0 L155.1 67.8 L157.4 69.6 L159.7 71.4 L162.0 73.3 L164.3 75.1 L166.6 76.9 L168.9 78.8 L171.2 80.6 L173.5 82.5 L175.9 84.4 L178.2 86.2 L180.5 88.1 L182.8 90.0 L185.1 91.9 L187.4 93.8 L189.8 95.6 L192.1 97.5 L194.4 99.4 L196.7 101.3 L199.0 103.2 L201.3 105.1 L203.7 107.0 L206.0 108.9 L208.3 110.8 L210.6 112.8 L212.9 114.7 L215.2 116.6 L217.5 118.5 L219.8 120.4 L222.1 122.3 L224.4 124.2 L226.7 126.1 L229.0 127.9 L231.3 129.8 L233.6 131.7 L235.8 133.6 L238.1 135.5 L240.4 137.4 L242.6 139.2 L244.9 141.1 L247.1 142.9 L249.3 144.8 L251.5 146.6 L253.7 148.5 L255.9 150.3 L258.1 152.1 L260.3 153.9 L262.5 155.8 L264.7 157.5 L266.8 159.3 L268.9 161.1 L271.1 162.9 L273.2 164.6 L275.3 166.4 L277.4 168.1 L279.4 169.8 L281.5 171.5 L283.5 173.2 L285.5 174.9 L287.6 176.6 L289.6 178.2 L291.5 179.9 L293.5 181.5 L295.4 183.1 L297.3 184.7 L299.2 186.2 L301.1 187.8 L302.9 189.3 L304.8 190.8 L306.6 192.3 L308.3 193.8 L310.1 195.3 L311.8 196.7 L313.4 198.1 L315.1 199.4 L316.7 200.8 L318.3 202.1 L319.8 203.4 L321.3 204.6 L322.8 205.9 L324.3 207.1 L325.8 208.3 L327.2 209.5 L328.7 210.7 L330.1 211.9 L331.4 213.0 L332.8 214.1 L334.1 215.2 L335.4 216.3 L336.6 217.3 L337.8 218.3 L339.0 219.3 L340.2 220.3 L341.3 221.2 L342.4 222.1 L343.5 223.0 L344.5 223.9 L345.6 224.7 L346.6 225.5 L347.5 226.4 L348.5 227.1 L349.4 227.9 L350.3 228.6 L351.1 229.4 L352.0 230.1 L352.8 230.8 L353.6 231.4 L354.4 232.1 L355.1 232.7 L355.9 233.3 L356.6 233.9 L357.3 234.5 L357.9 235.0 L358.6 235.6 L359.2 236.1 L359.8 236.6 L360.4 237.1 L361.0 237.6 L361.6 238.0 L362.1 238.5 L362.7 238.9 L363.2 239.4 L363.6 239.8 L364.1 240.1 L364.5 240.5 L365.0 240.8 L365.4 241.2 L365.9 241.6 L366.5 242.1 L367.1 242.7 L367.8 243.2 L368.6 243.9 L369.4 244.5 L370.2 245.2 L370.9 245.8 L371.6 246.4 L372.3 246.9 L372.8 247.4 L373.3 247.8 L373.8 248.2 L374.3 248.6 L374.7 248.9 L375.1 249.3 L375.5 249.6 L375.9 249.9 L376.3 250.3 L376.8 250.7 L377.2 251.0 L377.6 251.4 L378.0 251.7 L378.4 252.0 L378.7 252.3 L379.0 252.5 L379.3 252.8 L379.6 253.0 L379.8 253.1 L379.9 253.3 L380.1 253.4 L380.2 253.5 L380.4 253.6 L380.5 253.7 Z')"><i class="o2"></i><i class="o4"></i><i class="o6"></i><i class="o8"></i><i class="o10"></i><i class="o12"></i><i class="o14"></i><i class="o16"></i><i class="o18"></i><i class="o20"></i><i class="o22"></i><i class="o24"></i><i class="o26"></i><i class="o28"></i><i class="o30"></i><i class="o32"></i><i class="o34"></i><i class="o36"></i><i class="o38"></i><i class="o40"></i><i class="o42"></i><i class="o44"></i><i class="o46"></i><i class="o48"></i><i class="o50"></i><i class="o52"></i><i class="o54"></i><i class="o56"></i><i class="o58"></i><i class="o60"></i><i class="o62"></i><i class="o64"></i><i class="o66"></i><i class="o68"></i><i class="o70"></i><i class="o72"></i><i class="o74"></i><i class="o76"></i><i class="o78"></i><i class="o80"></i><i class="o82"></i><i class="o84"></i><i class="o86"></i><i class="o88"></i><i class="o90"></i><i class="o92"></i><i class="o94"></i><i class="o96"></i><i class="o98"></i><i class="o100"></i><i class="o102"></i><i class="o104"></i><i class="o106"></i><i class="o108"></i><i class="o110"></i><i class="o112"></i><i class="o114"></i><i class="o116"></i><i class="o118"></i><i class="o120"></i><i class="o122"></i><i class="o124"></i><i class="o126"></i><i class="o128"></i><i class="o130"></i><i class="o132"></i><i class="o134"></i><i class="o136"></i><i class="o138"></i><i class="o140"></i><i class="o142"></i><i class="o144"></i><i class="o146"></i><i class="o148"></i><i class="o150"></i><i class="o152"></i><i class="o154"></i><i class="o156"></i><i class="o158"></i><i class="o160"></i><i class="o162"></i><i class="o164"></i><i class="o166"></i><i class="o168"></i><i class="o170"></i><i class="o172"></i><i class="o174"></i><i class="o176"></i><i class="o178"></i><i class="o180"></i><i class="o182"></i><i class="o184"></i><i class="o186"></i><i class="o188"></i><i class="o190"></i><i class="o192"></i><i class="o194"></i><i class="o196"></i><i class="o198"></i><i class="o200"></i><i class="o202"></i><i class="o204"></i><i class="o206"></i><i class="o208"></i><i class="o210"></i><i class="o212"></i><i class="o214"></i><i class="o216"></i><i class="o218"></i><i class="o220"></i><i class="o222"></i><i class="o224"></i><i class="o226"></i><i class="o228"></i><i class="o230"></i><i class="o232"></i><i class="o234"></i><i class="o236"></i><i class="o238"></i><i class="o240"></i><i class="o242"></i><i class="o244"></i><i class="o246"></i><i class="o248"></i><i class="o250"></i><i class="o252"></i><i class="o254"></i><i class="o256"></i><i class="o258"></i><i class="o260"></i><i class="o262"></i><i class="o264"></i><i class="o266"></i><i class="o268"></i><i class="o270"></i><i class="o272"></i><i class="o274"></i><i class="o276"></i><i class="o278"></i><i class="o280"></i><i class="o282"></i><i class="o284"></i><i class="o286"></i><i class="o288"></i><i class="o290"></i><i class="o292"></i><i class="o294"></i><i class="o296"></i><i class="o298"></i><i class="o300"></i><i class="o302"></i><i class="o304"></i><i class="o306"></i><i class="o308"></i><i class="o310"></i><i class="o312"></i><i class="o314"></i><i class="o316"></i><i class="o318"></i><i class="o320"></i><i class="o322"></i><i class="o324"></i><i class="o326"></i><i class="o328"></i><i class="o330"></i><i class="o332"></i><i class="o334"></i><i class="o336"></i><i class="o338"></i><i class="o340"></i><i class="o342"></i><i class="o344"></i><i class="o346"></i><i class="o348"></i><i class="o350"></i><i class="o352"></i><i class="o354"></i><i class="o356"></i><i class="o358"></i><i class="o360"></i><i class="o362"></i><i class="o364"></i><i class="o366"></i><i class="o368"></i></div><div class="abs cief" style="left:1462px;top:634px;width:380px;height:372px;clip-path:polygon(88.9px 20.3px,366.5px 242.1px,68.8px 350.2px)"><i class="t18"></i><i class="t20"></i><i class="t22"></i><i class="t24"></i><i class="t26"></i><i class="t28"></i><i class="t30"></i><i class="t32"></i><i class="t34"></i><i class="t36"></i><i class="t38"></i><i class="t40"></i><i class="t42"></i><i class="t44"></i><i class="t46"></i><i class="t48"></i><i class="t50"></i><i class="t52"></i><i class="t54"></i><i class="t56"></i><i class="t58"></i><i class="t60"></i><i class="t62"></i><i class="t64"></i><i class="t66"></i><i class="t68"></i><i class="t70"></i><i class="t72"></i><i class="t74"></i><i class="t76"></i><i class="t78"></i><i class="t80"></i><i class="t82"></i><i class="t84"></i><i class="t86"></i><i class="t88"></i><i class="t90"></i><i class="t92"></i><i class="t94"></i><i class="t96"></i><i class="t98"></i><i class="t100"></i><i class="t102"></i><i class="t104"></i><i class="t106"></i><i class="t108"></i><i class="t110"></i><i class="t112"></i><i class="t114"></i><i class="t116"></i><i class="t118"></i><i class="t120"></i><i class="t122"></i><i class="t124"></i><i class="t126"></i><i class="t128"></i><i class="t130"></i><i class="t132"></i><i class="t134"></i><i class="t136"></i><i class="t138"></i><i class="t140"></i><i class="t142"></i><i class="t144"></i><i class="t146"></i><i class="t148"></i><i class="t150"></i><i class="t152"></i><i class="t154"></i><i class="t156"></i><i class="t158"></i><i class="t160"></i><i class="t162"></i><i class="t164"></i><i class="t166"></i><i class="t168"></i><i class="t170"></i><i class="t172"></i><i class="t174"></i><i class="t176"></i><i class="t178"></i><i class="t180"></i><i class="t182"></i><i class="t184"></i><i class="t186"></i><i class="t188"></i><i class="t190"></i><i class="t192"></i><i class="t194"></i><i class="t196"></i><i class="t198"></i><i class="t200"></i><i class="t202"></i><i class="t204"></i><i class="t206"></i><i class="t208"></i><i class="t210"></i><i class="t212"></i><i class="t214"></i><i class="t216"></i><i class="t218"></i><i class="t220"></i><i class="t222"></i><i class="t224"></i><i class="t226"></i><i class="t228"></i><i class="t230"></i><i class="t232"></i><i class="t234"></i><i class="t236"></i><i class="t238"></i><i class="t240"></i><i class="t242"></i><i class="t244"></i><i class="t246"></i><i class="t248"></i><i class="t250"></i><i class="t252"></i><i class="t254"></i><i class="t256"></i><i class="t258"></i><i class="t260"></i><i class="t262"></i><i class="t264"></i><i class="t266"></i><i class="t268"></i><i class="t270"></i><i class="t272"></i><i class="t274"></i><i class="t276"></i><i class="t278"></i><i class="t280"></i><i class="t282"></i><i class="t284"></i><i class="t286"></i><i class="t288"></i><i class="t290"></i><i class="t292"></i><i class="t294"></i><i class="t296"></i><i class="t298"></i><i class="t300"></i><i class="t302"></i><i class="t304"></i><i class="t306"></i><i class="t308"></i><i class="t310"></i><i class="t312"></i><i class="t314"></i><i class="t316"></i><i class="t318"></i><i class="t320"></i><i class="t322"></i><i class="t324"></i><i class="t326"></i><i class="t328"></i><i class="t330"></i><i class="t332"></i><i class="t334"></i><i class="t336"></i><i class="t338"></i><i class="t340"></i><i class="t342"></i><i class="t344"></i><i class="t346"></i><i class="t348"></i><i class="t350"></i></div>
<svg width="1920" height="1080" viewBox="0 0 1920 1080" style="position:absolute;left:0;top:0"><rect x="1617.4" y="316.9" width="14" height="14" fill="none" stroke="#fff" stroke-width="2"/>
<rect x="1620.2" y="326.3" width="14" height="14" fill="none" stroke="#fff" stroke-width="2"/>
<rect x="1621.3" y="333.0" width="14" height="14" fill="none" stroke="#fff" stroke-width="2"/>
<rect x="1584.7" y="357.4" width="14" height="14" fill="none" stroke="#fff" stroke-width="2"/>
<rect x="1614.1" y="353.6" width="14" height="14" fill="none" stroke="#fff" stroke-width="2"/>
<rect x="1613.0" y="367.4" width="14" height="14" fill="none" stroke="#fff" stroke-width="2"/>
<rect x="1594.7" y="376.9" width="14" height="14" fill="none" stroke="#fff" stroke-width="2"/>
<rect x="1601.3" y="376.3" width="14" height="14" fill="none" stroke="#fff" stroke-width="2"/>
<rect x="1647.4" y="350.8" width="14" height="14" fill="none" stroke="#fff" stroke-width="2"/>
<rect x="1665.2" y="336.3" width="14" height="14" fill="none" stroke="#fff" stroke-width="2"/>
<rect x="1680.8" y="343.0" width="14" height="14" fill="none" stroke="#fff" stroke-width="2"/>
<rect x="1689.7" y="348.6" width="14" height="14" fill="none" stroke="#fff" stroke-width="2"/>
<rect x="1631.3" y="384.1" width="14" height="14" fill="none" stroke="#fff" stroke-width="2"/>
<rect x="1649.1" y="388.6" width="14" height="14" fill="none" stroke="#fff" stroke-width="2"/>
<rect x="1657.4" y="393.0" width="14" height="14" fill="none" stroke="#fff" stroke-width="2"/>
<rect x="1676.3" y="395.2" width="14" height="14" fill="none" stroke="#fff" stroke-width="2"/>
<rect x="1690.8" y="391.9" width="14" height="14" fill="none" stroke="#fff" stroke-width="2"/>
<rect x="1564.7" y="398.6" width="14" height="14" fill="none" stroke="#fff" stroke-width="2"/>
<rect x="1561.3" y="406.9" width="14" height="14" fill="none" stroke="#fff" stroke-width="2"/>
<rect x="1576.3" y="409.7" width="14" height="14" fill="none" stroke="#fff" stroke-width="2"/>
<rect x="1600.8" y="400.8" width="14" height="14" fill="none" stroke="#fff" stroke-width="2"/>
<rect x="1614.1" y="403.0" width="14" height="14" fill="none" stroke="#fff" stroke-width="2"/>
<rect x="1626.3" y="403.0" width="14" height="14" fill="none" stroke="#fff" stroke-width="2"/>
<rect x="1590.8" y="413.0" width="14" height="14" fill="none" stroke="#fff" stroke-width="2"/>
<rect x="1693.6" y="345.2" width="14" height="14" fill="none" stroke="#fff" stroke-width="2"/>
<rect x="1701.3" y="358.6" width="14" height="14" fill="none" stroke="#fff" stroke-width="2"/>
<rect x="1708.6" y="357.4" width="14" height="14" fill="none" stroke="#fff" stroke-width="2"/>
<rect x="1718.6" y="371.9" width="14" height="14" fill="none" stroke="#fff" stroke-width="2"/>
<rect x="1721.9" y="374.7" width="14" height="14" fill="none" stroke="#fff" stroke-width="2"/>
<rect x="1705.2" y="379.7" width="14" height="14" fill="none" stroke="#fff" stroke-width="2"/>
<rect x="1691.3" y="394.1" width="14" height="14" fill="none" stroke="#fff" stroke-width="2"/>
<rect x="1722.4" y="394.1" width="14" height="14" fill="none" stroke="#fff" stroke-width="2"/>
<rect x="1742.4" y="390.2" width="14" height="14" fill="none" stroke="#fff" stroke-width="2"/>
<rect x="1758.6" y="400.8" width="14" height="14" fill="none" stroke="#fff" stroke-width="2"/>
<rect x="1700.8" y="400.8" width="14" height="14" fill="none" stroke="#fff" stroke-width="2"/>
<rect x="1693.6" y="416.9" width="14" height="14" fill="none" stroke="#fff" stroke-width="2"/>
<rect x="1767.4" y="421.9" width="14" height="14" fill="none" stroke="#fff" stroke-width="2"/>
<rect x="1784.7" y="428.6" width="14" height="14" fill="none" stroke="#fff" stroke-width="2"/>
<rect x="1787.4" y="434.1" width="14" height="14" fill="none" stroke="#fff" stroke-width="2"/>
<rect x="1731.3" y="428.6" width="14" height="14" fill="none" stroke="#fff" stroke-width="2"/>
<rect x="1736.3" y="431.9" width="14" height="14" fill="none" stroke="#fff" stroke-width="2"/>
<rect x="1725.2" y="437.4" width="14" height="14" fill="none" stroke="#fff" stroke-width="2"/>
<rect x="1690.2" y="435.2" width="14" height="14" fill="none" stroke="#fff" stroke-width="2"/>
<rect x="1678.6" y="396.3" width="14" height="14" fill="none" stroke="#fff" stroke-width="2"/>
<rect x="1556.3" y="439.7" width="14" height="14" fill="none" stroke="#fff" stroke-width="2"/>
<rect x="1549.1" y="453.6" width="14" height="14" fill="none" stroke="#fff" stroke-width="2"/>
<rect x="1554.7" y="469.7" width="14" height="14" fill="none" stroke="#fff" stroke-width="2"/>
<rect x="1574.1" y="432.4" width="14" height="14" fill="none" stroke="#fff" stroke-width="2"/>
<rect x="1578.6" y="439.7" width="14" height="14" fill="none" stroke="#fff" stroke-width="2"/>
<rect x="1593.0" y="444.1" width="14" height="14" fill="none" stroke="#fff" stroke-width="2"/>
<rect x="1606.9" y="449.7" width="14" height="14" fill="none" stroke="#fff" stroke-width="2"/>
<rect x="1621.9" y="463.0" width="14" height="14" fill="none" stroke="#fff" stroke-width="2"/>
<rect x="1635.2" y="442.4" width="14" height="14" fill="none" stroke="#fff" stroke-width="2"/>
<rect x="1645.2" y="466.3" width="14" height="14" fill="none" stroke="#fff" stroke-width="2"/>
<rect x="1598.6" y="475.2" width="14" height="14" fill="none" stroke="#fff" stroke-width="2"/>
<rect x="1604.1" y="478.6" width="14" height="14" fill="none" stroke="#fff" stroke-width="2"/>
<rect x="1620.8" y="484.1" width="14" height="14" fill="none" stroke="#fff" stroke-width="2"/>
<rect x="1625.2" y="495.2" width="14" height="14" fill="none" stroke="#fff" stroke-width="2"/>
<rect x="1549.7" y="487.4" width="14" height="14" fill="none" stroke="#fff" stroke-width="2"/>
<rect x="1564.1" y="490.8" width="14" height="14" fill="none" stroke="#fff" stroke-width="2"/>
<rect x="1552.4" y="511.9" width="14" height="14" fill="none" stroke="#fff" stroke-width="2"/>
<rect x="1541.3" y="521.3" width="14" height="14" fill="none" stroke="#fff" stroke-width="2"/>
<rect x="1675.2" y="455.2" width="14" height="14" fill="none" stroke="#fff" stroke-width="2"/>
<rect x="1677.4" y="425.2" width="14" height="14" fill="none" stroke="#fff" stroke-width="2"/>
<rect x="1688.6" y="463.0" width="14" height="14" fill="none" stroke="#fff" stroke-width="2"/>
<rect x="1688.6" y="431.9" width="14" height="14" fill="none" stroke="#fff" stroke-width="2"/>
<rect x="1589.7" y="416.3" width="14" height="14" fill="none" stroke="#fff" stroke-width="2"/>
<rect x="1738.0" y="444.7" width="14" height="14" fill="none" stroke="#fff" stroke-width="2"/>
<rect x="1694.3" y="463.4" width="14" height="14" fill="none" stroke="#fff" stroke-width="2"/>
<rect x="1677.2" y="454.7" width="14" height="14" fill="none" stroke="#fff" stroke-width="2"/>
<rect x="1696.3" y="418.0" width="14" height="14" fill="none" stroke="#fff" stroke-width="2"/>
<rect x="1776.3" y="437.2" width="14" height="14" fill="none" stroke="#fff" stroke-width="2"/>
<rect x="1644.0" y="403.0" width="14" height="14" fill="none" stroke="#fff" stroke-width="2"/>
<rect x="1653.0" y="416.0" width="14" height="14" fill="none" stroke="#fff" stroke-width="2"/>
<rect x="1605.0" y="423.0" width="14" height="14" fill="none" stroke="#fff" stroke-width="2"/>
<rect x="1633.0" y="418.0" width="14" height="14" fill="none" stroke="#fff" stroke-width="2"/>
<circle cx="1617.8" cy="335.0" r="4.4" fill="#4e6c40" stroke="#000" stroke-width="1.6"/>
<circle cx="1625.6" cy="341.1" r="4.4" fill="#506c40" stroke="#000" stroke-width="1.6"/>
<circle cx="1628.3" cy="352.2" r="4.4" fill="#536c42" stroke="#000" stroke-width="1.6"/>
<circle cx="1616.7" cy="367.8" r="4.4" fill="#516c45" stroke="#000" stroke-width="1.6"/>
<circle cx="1588.3" cy="377.2" r="4.4" fill="#4a6c4a" stroke="#000" stroke-width="1.6"/>
<circle cx="1619.4" cy="385.0" r="4.4" fill="#556c49" stroke="#000" stroke-width="1.6"/>
<circle cx="1602.8" cy="392.2" r="4.4" fill="#506c4d" stroke="#000" stroke-width="1.6"/>
<circle cx="1596.1" cy="395.6" r="4.4" fill="#4e6c4f" stroke="#000" stroke-width="1.6"/>
<circle cx="1648.9" cy="367.8" r="4.4" fill="#5e6c43" stroke="#000" stroke-width="1.6"/>
<circle cx="1656.1" cy="369.4" r="4.4" fill="#626c42" stroke="#000" stroke-width="1.6"/>
<circle cx="1669.4" cy="350.0" r="4.4" fill="#626c3f" stroke="#000" stroke-width="1.6"/>
<circle cx="1669.4" cy="357.8" r="4.4" fill="#656c40" stroke="#000" stroke-width="1.6"/>
<circle cx="1672.2" cy="366.7" r="4.4" fill="#6a6c41" stroke="#000" stroke-width="1.6"/>
<circle cx="1684.4" cy="358.3" r="4.4" fill="#6c6b3f" stroke="#000" stroke-width="1.6"/>
<circle cx="1693.3" cy="363.3" r="4.4" fill="#6c643e" stroke="#000" stroke-width="1.6"/>
<circle cx="1692.2" cy="375.0" r="4.4" fill="#6c613f" stroke="#000" stroke-width="1.6"/>
<circle cx="1697.8" cy="382.2" r="4.4" fill="#6c5c3f" stroke="#000" stroke-width="1.6"/>
<circle cx="1641.1" cy="397.8" r="4.4" fill="#646c4b" stroke="#000" stroke-width="1.6"/>
<circle cx="1650.6" cy="403.3" r="4.4" fill="#6c6b4c" stroke="#000" stroke-width="1.6"/>
<circle cx="1665.6" cy="407.8" r="4.4" fill="#6c6048" stroke="#000" stroke-width="1.6"/>
<circle cx="1680.0" cy="411.1" r="4.4" fill="#6c5845" stroke="#000" stroke-width="1.6"/>
<circle cx="1696.7" cy="408.9" r="4.4" fill="#6c5442" stroke="#000" stroke-width="1.6"/>
<circle cx="1574.4" cy="418.3" r="4.4" fill="#4a6c5d" stroke="#000" stroke-width="1.6"/>
<circle cx="1573.3" cy="423.3" r="4.4" fill="#4a6c60" stroke="#000" stroke-width="1.6"/>
<circle cx="1607.2" cy="415.6" r="4.4" fill="#576c58" stroke="#000" stroke-width="1.6"/>
<circle cx="1628.3" cy="420.0" r="4.4" fill="#666c59" stroke="#000" stroke-width="1.6"/>
<circle cx="1619.4" cy="423.3" r="4.4" fill="#616c5c" stroke="#000" stroke-width="1.6"/>
<circle cx="1662.2" cy="420.0" r="4.4" fill="#6c5c4b" stroke="#000" stroke-width="1.6"/>
<circle cx="1672.2" cy="420.0" r="4.4" fill="#6c5848" stroke="#000" stroke-width="1.6"/>
<circle cx="1688.9" cy="416.7" r="4.4" fill="#6c5444" stroke="#000" stroke-width="1.6"/>
<circle cx="1707.2" cy="372.8" r="4.4" fill="#6c5c3e" stroke="#000" stroke-width="1.6"/>
<circle cx="1698.3" cy="381.1" r="4.4" fill="#6c5c3f" stroke="#000" stroke-width="1.6"/>
<circle cx="1701.1" cy="387.8" r="4.4" fill="#6c5940" stroke="#000" stroke-width="1.6"/>
<circle cx="1722.2" cy="383.3" r="4.4" fill="#6c553e" stroke="#000" stroke-width="1.6"/>
<circle cx="1724.4" cy="386.7" r="4.4" fill="#6c533e" stroke="#000" stroke-width="1.6"/>
<circle cx="1707.2" cy="397.2" r="4.4" fill="#6c5540" stroke="#000" stroke-width="1.6"/>
<circle cx="1720.6" cy="402.8" r="4.4" fill="#6c503f" stroke="#000" stroke-width="1.6"/>
<circle cx="1724.4" cy="409.4" r="4.4" fill="#6c4e3f" stroke="#000" stroke-width="1.6"/>
<circle cx="1745.0" cy="403.3" r="4.4" fill="#6c4c3e" stroke="#000" stroke-width="1.6"/>
<circle cx="1761.7" cy="412.2" r="4.4" fill="#6c493e" stroke="#000" stroke-width="1.6"/>
<circle cx="1704.4" cy="406.7" r="4.4" fill="#6c5341" stroke="#000" stroke-width="1.6"/>
<circle cx="1696.7" cy="409.4" r="4.4" fill="#6c5442" stroke="#000" stroke-width="1.6"/>
<circle cx="1708.9" cy="415.6" r="4.4" fill="#6c5041" stroke="#000" stroke-width="1.6"/>
<circle cx="1707.8" cy="418.9" r="4.4" fill="#6c4f42" stroke="#000" stroke-width="1.6"/>
<circle cx="1689.4" cy="417.2" r="4.4" fill="#6c5444" stroke="#000" stroke-width="1.6"/>
<circle cx="1687.2" cy="423.3" r="4.4" fill="#6c5245" stroke="#000" stroke-width="1.6"/>
<circle cx="1693.3" cy="428.3" r="4.4" fill="#6c5045" stroke="#000" stroke-width="1.6"/>
<circle cx="1771.1" cy="434.4" r="4.4" fill="#6c463e" stroke="#000" stroke-width="1.6"/>
<circle cx="1782.2" cy="440.0" r="4.4" fill="#6c453e" stroke="#000" stroke-width="1.6"/>
<circle cx="1783.9" cy="445.0" r="4.4" fill="#6c453e" stroke="#000" stroke-width="1.6"/>
<circle cx="1774.4" cy="445.6" r="4.4" fill="#6c453f" stroke="#000" stroke-width="1.6"/>
<circle cx="1738.3" cy="439.4" r="4.4" fill="#6c4741" stroke="#000" stroke-width="1.6"/>
<circle cx="1737.8" cy="444.4" r="4.4" fill="#6c4741" stroke="#000" stroke-width="1.6"/>
<circle cx="1580.6" cy="429.4" r="4.4" fill="#4e6c65" stroke="#000" stroke-width="1.6"/>
<circle cx="1594.4" cy="431.1" r="4.4" fill="#546c65" stroke="#000" stroke-width="1.6"/>
<circle cx="1615.0" cy="432.8" r="4.4" fill="#636c65" stroke="#000" stroke-width="1.6"/>
<circle cx="1632.2" cy="434.4" r="4.4" fill="#6c665f" stroke="#000" stroke-width="1.6"/>
<circle cx="1636.7" cy="436.1" r="4.4" fill="#6c625c" stroke="#000" stroke-width="1.6"/>
<circle cx="1621.1" cy="441.7" r="4.4" fill="#676566" stroke="#000" stroke-width="1.6"/>
<circle cx="1621.7" cy="445.0" r="4.4" fill="#666266" stroke="#000" stroke-width="1.6"/>
<circle cx="1648.9" cy="436.1" r="4.4" fill="#6c5b54" stroke="#000" stroke-width="1.6"/>
<circle cx="1655.6" cy="428.3" r="4.4" fill="#6c5b50" stroke="#000" stroke-width="1.6"/>
<circle cx="1565.6" cy="456.1" r="4.4" fill="#485b66" stroke="#000" stroke-width="1.6"/>
<circle cx="1577.2" cy="451.1" r="4.4" fill="#4c5d66" stroke="#000" stroke-width="1.6"/>
<circle cx="1584.4" cy="454.4" r="4.4" fill="#4e5b66" stroke="#000" stroke-width="1.6"/>
<circle cx="1594.4" cy="460.0" r="4.4" fill="#525866" stroke="#000" stroke-width="1.6"/>
<circle cx="1596.7" cy="464.4" r="4.4" fill="#535666" stroke="#000" stroke-width="1.6"/>
<circle cx="1590.0" cy="466.7" r="4.4" fill="#505566" stroke="#000" stroke-width="1.6"/>
<circle cx="1610.0" cy="465.0" r="4.4" fill="#5a5566" stroke="#000" stroke-width="1.6"/>
<circle cx="1636.1" cy="458.9" r="4.4" fill="#6c5664" stroke="#000" stroke-width="1.6"/>
<circle cx="1562.2" cy="468.3" r="4.4" fill="#475566" stroke="#000" stroke-width="1.6"/>
<circle cx="1562.2" cy="473.3" r="4.4" fill="#475366" stroke="#000" stroke-width="1.6"/>
<circle cx="1560.6" cy="485.6" r="4.4" fill="#464e66" stroke="#000" stroke-width="1.6"/>
<circle cx="1596.7" cy="478.9" r="4.4" fill="#514f66" stroke="#000" stroke-width="1.6"/>
<circle cx="1602.8" cy="483.9" r="4.4" fill="#544d66" stroke="#000" stroke-width="1.6"/>
<circle cx="1613.3" cy="488.3" r="4.4" fill="#584b66" stroke="#000" stroke-width="1.6"/>
<circle cx="1625.0" cy="476.1" r="4.4" fill="#614f66" stroke="#000" stroke-width="1.6"/>
<circle cx="1645.6" cy="480.6" r="4.4" fill="#6c4b63" stroke="#000" stroke-width="1.6"/>
<circle cx="1619.4" cy="499.4" r="4.4" fill="#5a4766" stroke="#000" stroke-width="1.6"/>
<circle cx="1627.8" cy="507.2" r="4.4" fill="#5d4566" stroke="#000" stroke-width="1.6"/>
<circle cx="1557.2" cy="502.2" r="4.4" fill="#464a66" stroke="#000" stroke-width="1.6"/>
<circle cx="1568.9" cy="506.1" r="4.4" fill="#484866" stroke="#000" stroke-width="1.6"/>
<circle cx="1560.6" cy="524.4" r="4.4" fill="#464666" stroke="#000" stroke-width="1.6"/>
<circle cx="1549.4" cy="533.3" r="4.4" fill="#454566" stroke="#000" stroke-width="1.6"/>
<circle cx="1680.0" cy="443.3" r="4.4" fill="#6c4e4a" stroke="#000" stroke-width="1.6"/>
<circle cx="1692.8" cy="451.1" r="4.4" fill="#6c4a48" stroke="#000" stroke-width="1.6"/>
<circle cx="1675.0" cy="470.0" r="4.4" fill="#6c4950" stroke="#000" stroke-width="1.6"/>
<circle cx="1681.7" cy="470.6" r="4.4" fill="#6c484e" stroke="#000" stroke-width="1.6"/>
<circle cx="1690.6" cy="476.1" r="4.4" fill="#6c464c" stroke="#000" stroke-width="1.6"/>
<circle cx="1724.6" cy="451.2" r="4.4" fill="#6c4743" stroke="#000" stroke-width="1.6"/>
<circle cx="1738.3" cy="456.2" r="4.4" fill="#6c4542" stroke="#000" stroke-width="1.6"/>
<circle cx="1681.7" cy="470.0" r="4.4" fill="#6c484e" stroke="#000" stroke-width="1.6"/>
<circle cx="1690.4" cy="476.2" r="4.4" fill="#6c464d" stroke="#000" stroke-width="1.6"/>
<circle cx="1680.8" cy="443.3" r="4.4" fill="#6c4e4a" stroke="#000" stroke-width="1.6"/>
<circle cx="1693.3" cy="428.3" r="4.4" fill="#6c5045" stroke="#000" stroke-width="1.6"/><rect x="1617.4" y="741.9" width="14" height="14" fill="none" stroke="#fff" stroke-width="2"/>
<rect x="1620.2" y="751.3" width="14" height="14" fill="none" stroke="#fff" stroke-width="2"/>
<rect x="1621.3" y="758.0" width="14" height="14" fill="none" stroke="#fff" stroke-width="2"/>
<rect x="1584.7" y="782.4" width="14" height="14" fill="none" stroke="#fff" stroke-width="2"/>
<rect x="1614.1" y="778.6" width="14" height="14" fill="none" stroke="#fff" stroke-width="2"/>
<rect x="1613.0" y="792.4" width="14" height="14" fill="none" stroke="#fff" stroke-width="2"/>
<rect x="1594.7" y="801.9" width="14" height="14" fill="none" stroke="#fff" stroke-width="2"/>
<rect x="1601.3" y="801.3" width="14" height="14" fill="none" stroke="#fff" stroke-width="2"/>
<rect x="1647.4" y="775.8" width="14" height="14" fill="none" stroke="#fff" stroke-width="2"/>
<rect x="1665.2" y="761.3" width="14" height="14" fill="none" stroke="#fff" stroke-width="2"/>
<rect x="1680.8" y="768.0" width="14" height="14" fill="none" stroke="#fff" stroke-width="2"/>
<rect x="1689.7" y="773.6" width="14" height="14" fill="none" stroke="#fff" stroke-width="2"/>
<rect x="1631.3" y="809.1" width="14" height="14" fill="none" stroke="#fff" stroke-width="2"/>
<rect x="1649.1" y="813.6" width="14" height="14" fill="none" stroke="#fff" stroke-width="2"/>
<rect x="1657.4" y="818.0" width="14" height="14" fill="none" stroke="#fff" stroke-width="2"/>
<rect x="1676.3" y="820.2" width="14" height="14" fill="none" stroke="#fff" stroke-width="2"/>
<rect x="1690.8" y="816.9" width="14" height="14" fill="none" stroke="#fff" stroke-width="2"/>
<rect x="1564.7" y="823.6" width="14" height="14" fill="none" stroke="#fff" stroke-width="2"/>
<rect x="1561.3" y="831.9" width="14" height="14" fill="none" stroke="#fff" stroke-width="2"/>
<rect x="1576.3" y="834.7" width="14" height="14" fill="none" stroke="#fff" stroke-width="2"/>
<rect x="1600.8" y="825.8" width="14" height="14" fill="none" stroke="#fff" stroke-width="2"/>
<rect x="1614.1" y="828.0" width="14" height="14" fill="none" stroke="#fff" stroke-width="2"/>
<rect x="1626.3" y="828.0" width="14" height="14" fill="none" stroke="#fff" stroke-width="2"/>
<rect x="1590.8" y="838.0" width="14" height="14" fill="none" stroke="#fff" stroke-width="2"/>
<rect x="1693.6" y="770.2" width="14" height="14" fill="none" stroke="#fff" stroke-width="2"/>
<rect x="1701.3" y="783.6" width="14" height="14" fill="none" stroke="#fff" stroke-width="2"/>
<rect x="1708.6" y="782.4" width="14" height="14" fill="none" stroke="#fff" stroke-width="2"/>
<rect x="1718.6" y="796.9" width="14" height="14" fill="none" stroke="#fff" stroke-width="2"/>
<rect x="1721.9" y="799.7" width="14" height="14" fill="none" stroke="#fff" stroke-width="2"/>
<rect x="1705.2" y="804.7" width="14" height="14" fill="none" stroke="#fff" stroke-width="2"/>
<rect x="1691.3" y="819.1" width="14" height="14" fill="none" stroke="#fff" stroke-width="2"/>
<rect x="1722.4" y="819.1" width="14" height="14" fill="none" stroke="#fff" stroke-width="2"/>
<rect x="1742.4" y="815.2" width="14" height="14" fill="none" stroke="#fff" stroke-width="2"/>
<rect x="1758.6" y="825.8" width="14" height="14" fill="none" stroke="#fff" stroke-width="2"/>
<rect x="1700.8" y="825.8" width="14" height="14" fill="none" stroke="#fff" stroke-width="2"/>
<rect x="1693.6" y="841.9" width="14" height="14" fill="none" stroke="#fff" stroke-width="2"/>
<rect x="1767.4" y="846.9" width="14" height="14" fill="none" stroke="#fff" stroke-width="2"/>
<rect x="1784.7" y="853.6" width="14" height="14" fill="none" stroke="#fff" stroke-width="2"/>
<rect x="1787.4" y="859.1" width="14" height="14" fill="none" stroke="#fff" stroke-width="2"/>
<rect x="1731.3" y="853.6" width="14" height="14" fill="none" stroke="#fff" stroke-width="2"/>
<rect x="1736.3" y="856.9" width="14" height="14" fill="none" stroke="#fff" stroke-width="2"/>
<rect x="1725.2" y="862.4" width="14" height="14" fill="none" stroke="#fff" stroke-width="2"/>
<rect x="1690.2" y="860.2" width="14" height="14" fill="none" stroke="#fff" stroke-width="2"/>
<rect x="1678.6" y="821.3" width="14" height="14" fill="none" stroke="#fff" stroke-width="2"/>
<rect x="1556.3" y="864.7" width="14" height="14" fill="none" stroke="#fff" stroke-width="2"/>
<rect x="1549.1" y="878.6" width="14" height="14" fill="none" stroke="#fff" stroke-width="2"/>
<rect x="1554.7" y="894.7" width="14" height="14" fill="none" stroke="#fff" stroke-width="2"/>
<rect x="1574.1" y="857.4" width="14" height="14" fill="none" stroke="#fff" stroke-width="2"/>
<rect x="1578.6" y="864.7" width="14" height="14" fill="none" stroke="#fff" stroke-width="2"/>
<rect x="1593.0" y="869.1" width="14" height="14" fill="none" stroke="#fff" stroke-width="2"/>
<rect x="1606.9" y="874.7" width="14" height="14" fill="none" stroke="#fff" stroke-width="2"/>
<rect x="1621.9" y="888.0" width="14" height="14" fill="none" stroke="#fff" stroke-width="2"/>
<rect x="1635.2" y="867.4" width="14" height="14" fill="none" stroke="#fff" stroke-width="2"/>
<rect x="1645.2" y="891.3" width="14" height="14" fill="none" stroke="#fff" stroke-width="2"/>
<rect x="1598.6" y="900.2" width="14" height="14" fill="none" stroke="#fff" stroke-width="2"/>
<rect x="1604.1" y="903.6" width="14" height="14" fill="none" stroke="#fff" stroke-width="2"/>
<rect x="1620.8" y="909.1" width="14" height="14" fill="none" stroke="#fff" stroke-width="2"/>
<rect x="1625.2" y="920.2" width="14" height="14" fill="none" stroke="#fff" stroke-width="2"/>
<rect x="1549.7" y="912.4" width="14" height="14" fill="none" stroke="#fff" stroke-width="2"/>
<rect x="1564.1" y="915.8" width="14" height="14" fill="none" stroke="#fff" stroke-width="2"/>
<rect x="1552.4" y="936.9" width="14" height="14" fill="none" stroke="#fff" stroke-width="2"/>
<rect x="1541.3" y="946.3" width="14" height="14" fill="none" stroke="#fff" stroke-width="2"/>
<rect x="1675.2" y="880.2" width="14" height="14" fill="none" stroke="#fff" stroke-width="2"/>
<rect x="1677.4" y="850.2" width="14" height="14" fill="none" stroke="#fff" stroke-width="2"/>
<rect x="1688.6" y="888.0" width="14" height="14" fill="none" stroke="#fff" stroke-width="2"/>
<rect x="1688.6" y="856.9" width="14" height="14" fill="none" stroke="#fff" stroke-width="2"/>
<rect x="1589.7" y="841.3" width="14" height="14" fill="none" stroke="#fff" stroke-width="2"/>
<rect x="1738.0" y="869.7" width="14" height="14" fill="none" stroke="#fff" stroke-width="2"/>
<rect x="1694.3" y="888.4" width="14" height="14" fill="none" stroke="#fff" stroke-width="2"/>
<rect x="1677.2" y="879.7" width="14" height="14" fill="none" stroke="#fff" stroke-width="2"/>
<rect x="1696.3" y="843.0" width="14" height="14" fill="none" stroke="#fff" stroke-width="2"/>
<rect x="1776.3" y="862.2" width="14" height="14" fill="none" stroke="#fff" stroke-width="2"/>
<rect x="1644.0" y="828.0" width="14" height="14" fill="none" stroke="#fff" stroke-width="2"/>
<rect x="1653.0" y="841.0" width="14" height="14" fill="none" stroke="#fff" stroke-width="2"/>
<rect x="1605.0" y="848.0" width="14" height="14" fill="none" stroke="#fff" stroke-width="2"/>
<rect x="1633.0" y="843.0" width="14" height="14" fill="none" stroke="#fff" stroke-width="2"/>
<circle cx="1621.6" cy="759.3" r="4.4" fill="#4f6c40" stroke="#000" stroke-width="1.6"/>
<circle cx="1626.7" cy="765.7" r="4.4" fill="#516c40" stroke="#000" stroke-width="1.6"/>
<circle cx="1625.4" cy="780.6" r="4.4" fill="#526c42" stroke="#000" stroke-width="1.6"/>
<circle cx="1618.0" cy="795.4" r="4.4" fill="#526c46" stroke="#000" stroke-width="1.6"/>
<circle cx="1589.7" cy="797.1" r="4.4" fill="#4a6c48" stroke="#000" stroke-width="1.6"/>
<circle cx="1619.6" cy="805.8" r="4.4" fill="#556c48" stroke="#000" stroke-width="1.6"/>
<circle cx="1602.4" cy="813.9" r="4.4" fill="#506c4c" stroke="#000" stroke-width="1.6"/>
<circle cx="1598.3" cy="815.9" r="4.4" fill="#4f6c4d" stroke="#000" stroke-width="1.6"/>
<circle cx="1651.1" cy="788.8" r="4.4" fill="#5e6c42" stroke="#000" stroke-width="1.6"/>
<circle cx="1655.4" cy="789.8" r="4.4" fill="#606c42" stroke="#000" stroke-width="1.6"/>
<circle cx="1670.5" cy="772.3" r="4.4" fill="#626c3f" stroke="#000" stroke-width="1.6"/>
<circle cx="1670.5" cy="777.0" r="4.4" fill="#646c3f" stroke="#000" stroke-width="1.6"/>
<circle cx="1665.1" cy="788.1" r="4.4" fill="#656c41" stroke="#000" stroke-width="1.6"/>
<circle cx="1685.8" cy="780.0" r="4.4" fill="#6c6c3e" stroke="#000" stroke-width="1.6"/>
<circle cx="1694.7" cy="785.2" r="4.4" fill="#6c653e" stroke="#000" stroke-width="1.6"/>
<circle cx="1698.6" cy="796.2" r="4.4" fill="#6c5f3f" stroke="#000" stroke-width="1.6"/>
<circle cx="1703.6" cy="809.0" r="4.4" fill="#6c593f" stroke="#000" stroke-width="1.6"/>
<circle cx="1640.0" cy="820.1" r="4.4" fill="#636c4b" stroke="#000" stroke-width="1.6"/>
<circle cx="1650.8" cy="831.0" r="4.4" fill="#6c694d" stroke="#000" stroke-width="1.6"/>
<circle cx="1665.1" cy="829.7" r="4.4" fill="#6c6148" stroke="#000" stroke-width="1.6"/>
<circle cx="1681.3" cy="832.5" r="4.4" fill="#6c5944" stroke="#000" stroke-width="1.6"/>
<circle cx="1697.3" cy="830.8" r="4.4" fill="#6c5542" stroke="#000" stroke-width="1.6"/>
<circle cx="1572.0" cy="841.5" r="4.4" fill="#496c5c" stroke="#000" stroke-width="1.6"/>
<circle cx="1571.3" cy="844.5" r="4.4" fill="#496c5e" stroke="#000" stroke-width="1.6"/>
<circle cx="1607.4" cy="837.5" r="4.4" fill="#566c56" stroke="#000" stroke-width="1.6"/>
<circle cx="1630.3" cy="841.0" r="4.4" fill="#666c56" stroke="#000" stroke-width="1.6"/>
<circle cx="1616.4" cy="851.0" r="4.4" fill="#606c5f" stroke="#000" stroke-width="1.6"/>
<circle cx="1661.3" cy="846.2" r="4.4" fill="#6c5c4c" stroke="#000" stroke-width="1.6"/>
<circle cx="1667.3" cy="846.2" r="4.4" fill="#6c594a" stroke="#000" stroke-width="1.6"/>
<circle cx="1693.6" cy="844.6" r="4.4" fill="#6c5244" stroke="#000" stroke-width="1.6"/>
<circle cx="1707.6" cy="794.9" r="4.4" fill="#6c5d3e" stroke="#000" stroke-width="1.6"/>
<circle cx="1703.9" cy="808.3" r="4.4" fill="#6c5a3f" stroke="#000" stroke-width="1.6"/>
<circle cx="1705.5" cy="812.4" r="4.4" fill="#6c583f" stroke="#000" stroke-width="1.6"/>
<circle cx="1723.6" cy="806.5" r="4.4" fill="#6c553e" stroke="#000" stroke-width="1.6"/>
<circle cx="1726.2" cy="809.7" r="4.4" fill="#6c533e" stroke="#000" stroke-width="1.6"/>
<circle cx="1703.4" cy="822.9" r="4.4" fill="#6c5540" stroke="#000" stroke-width="1.6"/>
<circle cx="1724.1" cy="827.1" r="4.4" fill="#6c503f" stroke="#000" stroke-width="1.6"/>
<circle cx="1726.4" cy="831.1" r="4.4" fill="#6c4f3f" stroke="#000" stroke-width="1.6"/>
<circle cx="1746.8" cy="825.9" r="4.4" fill="#6c4d3e" stroke="#000" stroke-width="1.6"/>
<circle cx="1763.3" cy="835.4" r="4.4" fill="#6c493e" stroke="#000" stroke-width="1.6"/>
<circle cx="1705.8" cy="832.1" r="4.4" fill="#6c5241" stroke="#000" stroke-width="1.6"/>
<circle cx="1697.3" cy="831.1" r="4.4" fill="#6c5542" stroke="#000" stroke-width="1.6"/>
<circle cx="1708.5" cy="837.5" r="4.4" fill="#6c5041" stroke="#000" stroke-width="1.6"/>
<circle cx="1706.0" cy="846.3" r="4.4" fill="#6c4f42" stroke="#000" stroke-width="1.6"/>
<circle cx="1693.9" cy="844.9" r="4.4" fill="#6c5244" stroke="#000" stroke-width="1.6"/>
<circle cx="1686.1" cy="851.9" r="4.4" fill="#6c5246" stroke="#000" stroke-width="1.6"/>
<circle cx="1696.2" cy="851.5" r="4.4" fill="#6c4f44" stroke="#000" stroke-width="1.6"/>
<circle cx="1772.4" cy="857.2" r="4.4" fill="#6c463e" stroke="#000" stroke-width="1.6"/>
<circle cx="1782.6" cy="866.7" r="4.4" fill="#6c453e" stroke="#000" stroke-width="1.6"/>
<circle cx="1783.7" cy="869.7" r="4.4" fill="#6c453e" stroke="#000" stroke-width="1.6"/>
<circle cx="1778.0" cy="870.0" r="4.4" fill="#6c453e" stroke="#000" stroke-width="1.6"/>
<circle cx="1738.3" cy="862.9" r="4.4" fill="#6c4840" stroke="#000" stroke-width="1.6"/>
<circle cx="1735.6" cy="869.4" r="4.4" fill="#6c4741" stroke="#000" stroke-width="1.6"/>
<circle cx="1580.8" cy="858.4" r="4.4" fill="#4e6b66" stroke="#000" stroke-width="1.6"/>
<circle cx="1595.3" cy="853.0" r="4.4" fill="#546c62" stroke="#000" stroke-width="1.6"/>
<circle cx="1613.8" cy="856.7" r="4.4" fill="#616c64" stroke="#000" stroke-width="1.6"/>
<circle cx="1635.3" cy="855.6" r="4.4" fill="#6c665b" stroke="#000" stroke-width="1.6"/>
<circle cx="1638.0" cy="856.7" r="4.4" fill="#6c635a" stroke="#000" stroke-width="1.6"/>
<circle cx="1617.5" cy="862.0" r="4.4" fill="#656a66" stroke="#000" stroke-width="1.6"/>
<circle cx="1618.6" cy="874.7" r="4.4" fill="#625e66" stroke="#000" stroke-width="1.6"/>
<circle cx="1645.3" cy="856.7" r="4.4" fill="#6c5f55" stroke="#000" stroke-width="1.6"/>
<circle cx="1657.4" cy="851.2" r="4.4" fill="#6c5b4e" stroke="#000" stroke-width="1.6"/>
<circle cx="1564.7" cy="877.3" r="4.4" fill="#485d66" stroke="#000" stroke-width="1.6"/>
<circle cx="1580.6" cy="874.3" r="4.4" fill="#4d5f66" stroke="#000" stroke-width="1.6"/>
<circle cx="1584.9" cy="876.3" r="4.4" fill="#4e5d66" stroke="#000" stroke-width="1.6"/>
<circle cx="1596.6" cy="881.4" r="4.4" fill="#535a66" stroke="#000" stroke-width="1.6"/>
<circle cx="1598.0" cy="884.1" r="4.4" fill="#545866" stroke="#000" stroke-width="1.6"/>
<circle cx="1594.0" cy="885.5" r="4.4" fill="#525866" stroke="#000" stroke-width="1.6"/>
<circle cx="1611.6" cy="886.7" r="4.4" fill="#5b5766" stroke="#000" stroke-width="1.6"/>
<circle cx="1638.5" cy="880.1" r="4.4" fill="#6c5760" stroke="#000" stroke-width="1.6"/>
<circle cx="1562.0" cy="896.7" r="4.4" fill="#475366" stroke="#000" stroke-width="1.6"/>
<circle cx="1562.0" cy="899.7" r="4.4" fill="#475266" stroke="#000" stroke-width="1.6"/>
<circle cx="1561.0" cy="907.0" r="4.4" fill="#474f66" stroke="#000" stroke-width="1.6"/>
<circle cx="1600.3" cy="905.2" r="4.4" fill="#534e66" stroke="#000" stroke-width="1.6"/>
<circle cx="1603.9" cy="908.2" r="4.4" fill="#544d66" stroke="#000" stroke-width="1.6"/>
<circle cx="1612.4" cy="912.2" r="4.4" fill="#584b66" stroke="#000" stroke-width="1.6"/>
<circle cx="1626.6" cy="898.7" r="4.4" fill="#635066" stroke="#000" stroke-width="1.6"/>
<circle cx="1648.2" cy="902.7" r="4.4" fill="#6c4b60" stroke="#000" stroke-width="1.6"/>
<circle cx="1622.8" cy="921.1" r="4.4" fill="#5c4866" stroke="#000" stroke-width="1.6"/>
<circle cx="1629.6" cy="930.2" r="4.4" fill="#5f4666" stroke="#000" stroke-width="1.6"/>
<circle cx="1557.0" cy="924.1" r="4.4" fill="#464b66" stroke="#000" stroke-width="1.6"/>
<circle cx="1569.8" cy="927.8" r="4.4" fill="#484966" stroke="#000" stroke-width="1.6"/>
<circle cx="1560.1" cy="947.2" r="4.4" fill="#464666" stroke="#000" stroke-width="1.6"/>
<circle cx="1549.0" cy="956.3" r="4.4" fill="#454566" stroke="#000" stroke-width="1.6"/>
<circle cx="1681.8" cy="863.9" r="4.4" fill="#6c4f49" stroke="#000" stroke-width="1.6"/>
<circle cx="1694.6" cy="872.5" r="4.4" fill="#6c4b47" stroke="#000" stroke-width="1.6"/>
<circle cx="1677.9" cy="891.9" r="4.4" fill="#6c494f" stroke="#000" stroke-width="1.6"/>
<circle cx="1681.9" cy="892.2" r="4.4" fill="#6c484e" stroke="#000" stroke-width="1.6"/>
<circle cx="1692.6" cy="898.7" r="4.4" fill="#6c464c" stroke="#000" stroke-width="1.6"/>
<circle cx="1727.6" cy="873.5" r="4.4" fill="#6c4742" stroke="#000" stroke-width="1.6"/>
<circle cx="1741.0" cy="879.4" r="4.4" fill="#6c4541" stroke="#000" stroke-width="1.6"/>
<circle cx="1681.9" cy="891.9" r="4.4" fill="#6c484e" stroke="#000" stroke-width="1.6"/>
<circle cx="1692.5" cy="898.8" r="4.4" fill="#6c464c" stroke="#000" stroke-width="1.6"/>
<circle cx="1682.2" cy="863.9" r="4.4" fill="#6c4f49" stroke="#000" stroke-width="1.6"/>
<circle cx="1696.2" cy="851.5" r="4.4" fill="#6c4f44" stroke="#000" stroke-width="1.6"/></svg>

<div class="btn" style="left:1784px;top:1019px;width:133px;height:29px;line-height:27px">SDR Cal</div>
<div class="btn" style="left:1784px;top:1050px;width:133px;height:28px;line-height:27px">Save Data</div>
<div class="abs" style="left:1646px;top:1049px;width:136px;height:31px;border-radius:4px 4px 0 0;background:linear-gradient(#a8a8a8,#6e6e6e)"></div>
<div class="abs" style="left:1666px;top:1054px;width:21px;height:21px;border-radius:50%;background:linear-gradient(#6e6e6e,#a0a0a0)"></div>
<div class="abs" style="left:1669px;top:1052px;font-size:22px;line-height:22px;color:#2a2a2a">&laquo;</div>
<div class="abs" style="left:1703px;top:1051px;font-size:23px;color:#2e2e2e">Back</div>

<div class="abs" style="left:0;top:1079px;width:1920px;height:1px;background:#1e1e1e"></div>
</body></html>
